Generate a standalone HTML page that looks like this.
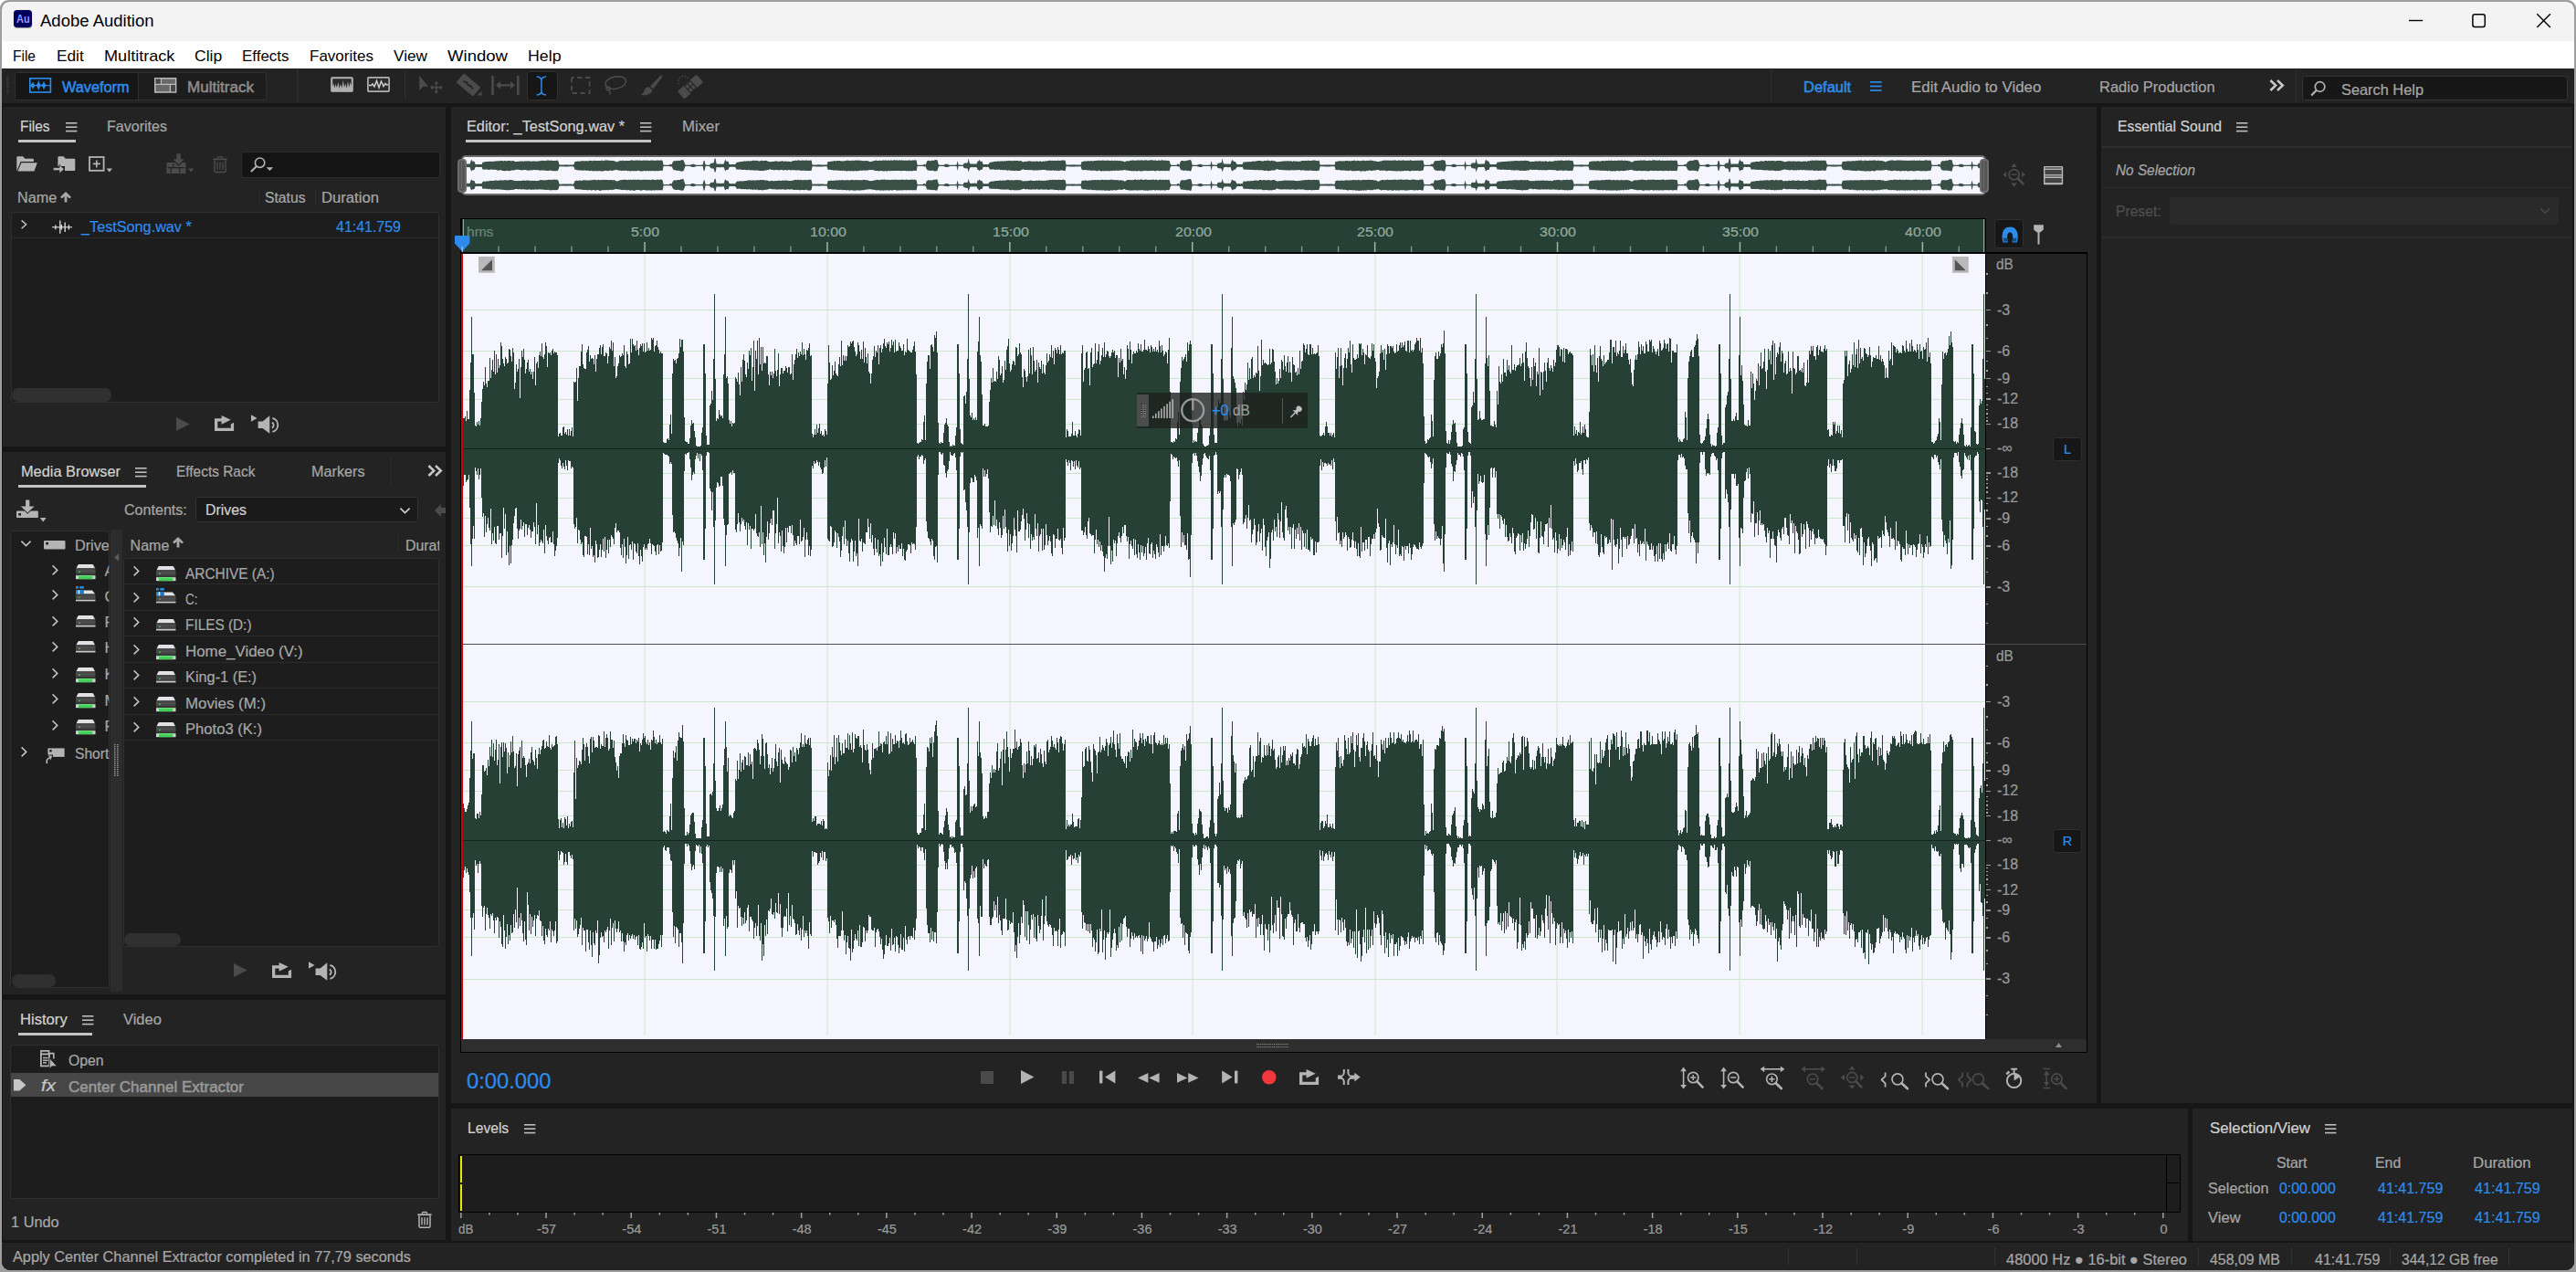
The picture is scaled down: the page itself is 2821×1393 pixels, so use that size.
<!DOCTYPE html>
<html lang="en"><head><meta charset="utf-8"><title>Adobe Audition</title>
<style>
html,body{margin:0;padding:0;background:#fff;}
body{width:2821px;height:1393px;position:relative;overflow:hidden;font-family:"Liberation Sans", sans-serif;}
.b{position:absolute;}
.t{position:absolute;white-space:pre;line-height:1;transform-origin:0 50%;}
svg{overflow:visible;}
</style></head>
<body>
<div class="b" style="left:0;top:0;width:2821px;height:1393px;background:#9e9e9e;border-radius:9px 9px 0 0;"></div>
<div class="b" style="left:2px;top:1.5px;width:2816.6px;height:1389.2px;background:#161616;border-radius:8px 8px 9px 9px;overflow:hidden;"></div>
<div class="b" style="left:2px;top:1.5px;width:2816.6px;height:43.5px;background:#f3f3f3;border-radius:8px 8px 0 0;"></div>
<div class="b" style="left:2px;top:45px;width:2816.6px;height:30px;background:#ffffff;"></div>
<div class="b" style="left:2px;top:75px;width:2816.6px;height:37.8px;background:#232323;"></div>
<div class="b" style="left:3.4px;top:117px;width:484.6px;height:372px;background:#232323;"></div>
<div class="b" style="left:3.4px;top:495px;width:484.6px;height:594px;background:#232323;"></div>
<div class="b" style="left:3.4px;top:1095px;width:484.6px;height:263px;background:#232323;"></div>
<div class="b" style="left:494px;top:117px;width:1801.6px;height:1091px;background:#232323;"></div>
<div class="b" style="left:2301.2px;top:117px;width:515.8px;height:1091px;background:#232323;"></div>
<div class="b" style="left:494px;top:1214px;width:1902px;height:145px;background:#232323;"></div>
<div class="b" style="left:2401px;top:1214px;width:416px;height:145px;background:#232323;"></div>
<div class="b" style="left:2px;top:1361px;width:2816.6px;height:29.7px;background:#232323;border-radius:0 0 9px 9px;"></div>
<div class="b" style="left:15px;top:11px;width:20px;height:19px;background:#00005b;border-radius:4px;box-shadow:0 0.5px 1px rgba(0,0,0,.4);"></div>
<svg class="b" style="left:2630px;top:8px;" width="170" height="30" viewBox="0 0 170 30"><path d="M8 14.5H23.2" stroke="#000" stroke-width="1.4" fill="none"/><rect x="77.9" y="7.8" width="13.4" height="13.6" rx="2.2" stroke="#000" stroke-width="1.5" fill="none"/><path d="M148.3 7.3L162.9 21.9M162.9 7.3L148.3 21.9" stroke="#000" stroke-width="1.4" fill="none"/></svg>
<svg class="b" style="left:7px;top:83px;" width="4" height="22" viewBox="0 0 4 22"><rect x="0" y="0" width="3" height="1" fill="#3a3a3a"/><rect x="0" y="2" width="3" height="1" fill="#3a3a3a"/><rect x="0" y="4" width="3" height="1" fill="#3a3a3a"/><rect x="0" y="6" width="3" height="1" fill="#3a3a3a"/><rect x="0" y="8" width="3" height="1" fill="#3a3a3a"/><rect x="0" y="10" width="3" height="1" fill="#3a3a3a"/><rect x="0" y="12" width="3" height="1" fill="#3a3a3a"/><rect x="0" y="14" width="3" height="1" fill="#3a3a3a"/><rect x="0" y="16" width="3" height="1" fill="#3a3a3a"/><rect x="0" y="18" width="3" height="1" fill="#3a3a3a"/></svg>
<div class="b" style="left:15.5px;top:79px;width:276px;height:31px;background:#1d1d1d;border:1px solid #303030;box-sizing:border-box;border-radius:3px;"></div>
<div class="b" style="left:16.5px;top:80px;width:134.5px;height:29px;background:#161616;border-radius:2px;"></div>
<div class="b" style="left:151px;top:80px;width:1px;height:29px;background:#303030;"></div>
<svg class="b" style="left:31.7px;top:85.3px;" width="24.4" height="16.8" viewBox="0 0 24.4 16.8"><rect x="0.8" y="0.8" width="22.6" height="15.2" fill="none" stroke="#2d8ceb" stroke-width="1.6"/><path d="M1 8.6H23.4" stroke="#2d8ceb" stroke-width="1.1"/><path d="M0.6000000000000001 8.6Q3.0 7.3 3.9 4.3999999999999995Q4.8 7.3 7.199999999999999 8.6Q4.8 9.9 3.9 12.8Q3.0 9.9 0.6000000000000001 8.6Z M7.000000000000001 8.6Q9.4 7.3 10.3 2.5999999999999996Q11.200000000000001 7.3 13.600000000000001 8.6Q11.200000000000001 9.9 10.3 14.6Q9.4 9.9 7.000000000000001 8.6Z M12.7 8.6Q15.1 7.3 16.0 4.0Q16.9 7.3 19.3 8.6Q16.9 9.9 16.0 13.2Q15.1 9.9 12.7 8.6Z" fill="#2d8ceb"/></svg>
<svg class="b" style="left:169.2px;top:85.2px;" width="24.4" height="17" viewBox="0 0 24.4 17"><rect x="0.8" y="0.8" width="22.8" height="15.2" fill="#686868" stroke="#bcbcbc" stroke-width="1.5"/><path d="M1 7.3H23.6 M7.4 1V7.3 M17.4 7.3V16" stroke="#bcbcbc" stroke-width="1.3" fill="none"/><rect x="1.6" y="1.6" width="5.1" height="5" fill="#484848"/><rect x="18.1" y="8" width="4.8" height="7.2" fill="#484848"/></svg>
<div class="b" style="left:325px;top:76px;width:1.5px;height:36px;background:#2d2d2d;"></div>
<svg class="b" style="left:362px;top:84px;" width="25" height="17" viewBox="0 0 25 17"><rect x="0.8" y="0.8" width="23.4" height="15.4" fill="#b0b0b0" stroke="#b0b0b0" stroke-width="1.2" rx="1"/><path d="M2.2 2.2H22.8V10L21.5 6L20.2 12L19 5L17.6 13L16.4 7.5L15 12L13.8 4L12.4 12.5L11 8L9.6 13L8.4 6L7 12L5.6 8L4.4 12.5L3.2 7L2.2 11Z" fill="#2a2a2a"/></svg>
<svg class="b" style="left:401.5px;top:84px;" width="25" height="17" viewBox="0 0 25 17"><rect x="0.9" y="0.9" width="23.2" height="15.2" fill="#2a2a2a" stroke="#b0b0b0" stroke-width="1.7" rx="1"/><path d="M2 9.5L4.5 9.5L6 8L8 11L10.5 4.5L13 12L15.5 5L18 10.5L20 7.5L21.5 9L23 8.5" fill="none" stroke="#cfcfcf" stroke-width="1.5"/></svg>
<div class="b" style="left:443px;top:78px;width:1.2px;height:31px;background:#303030;"></div>
<svg class="b" style="left:458px;top:82px;" width="28" height="22" viewBox="0 0 28 22"><path d="M1.2 0.8V17L5.5 12.8H11.2Z" fill="#4b4b4b"/><path d="M19.8 6.8L22.3 9.8H20.5V13H23.6V11.2L26.8 13.8L23.6 16.4V14.6H20.5V17.8H22.3L19.8 20.8L17.3 17.8H19.1V14.6H16V16.4L12.8 13.8L16 11.2V13H19.1V9.8H17.3Z" fill="#4b4b4b"/></svg>
<svg class="b" style="left:500px;top:81px;" width="30" height="26" viewBox="0 0 30 26"><g transform="rotate(40 13 12)"><rect x="1" y="5.5" width="24" height="13" rx="1.5" fill="#4b4b4b"/><path d="M6 12H9L10 10.8L11 12H15L16 10.8L17 12H20" stroke="#222" stroke-width="1.6" fill="none"/></g><path d="M27.5 18.5V23.5H22.5Z" fill="#4b4b4b"/></svg>
<svg class="b" style="left:538px;top:83px;" width="31" height="21" viewBox="0 0 31 21"><rect x="0.2" y="0" width="2.6" height="21" fill="#4b4b4b"/><rect x="28" y="0" width="2.6" height="21" fill="#4b4b4b"/><path d="M4.8 10.2L10 6V9.2H21V6L26 10.2L21 14.4V11.4H10V14.4Z" fill="#4b4b4b"/></svg>
<div class="b" style="left:576.5px;top:77.5px;width:34px;height:32px;background:#161616;border:1px solid #303030;box-sizing:border-box;border-radius:3px;"></div>
<svg class="b" style="left:586px;top:82.5px;" width="14" height="22" viewBox="0 0 14 22"><path d="M2.2 1C5.2 1.2 6.6 2.4 6.9 4.8V17.2C6.6 19.6 5.2 20.8 2.2 21 M11.6 1C8.6 1.2 7.2 2.4 6.9 4.8 M11.6 21C8.6 20.8 7.2 19.6 6.9 17.2" stroke="#2d8ceb" stroke-width="1.5" fill="none" stroke-linecap="round"/></svg>
<svg class="b" style="left:624.5px;top:83.5px;" width="22" height="19" viewBox="0 0 22 19"><rect x="1" y="1" width="19.6" height="17" fill="none" stroke="#4b4b4b" stroke-width="1.8" stroke-dasharray="5.4 3.4" stroke-dashoffset="2.7"/></svg>
<svg class="b" style="left:661px;top:82px;" width="26" height="22" viewBox="0 0 26 22"><ellipse cx="13.2" cy="8.6" rx="11.4" ry="6.6" fill="none" stroke="#4b4b4b" stroke-width="1.6" transform="rotate(-12 13.2 8.6)"/><circle cx="5" cy="15" r="2" fill="none" stroke="#4b4b4b" stroke-width="1.3"/><path d="M5.5 17C7.5 18 8 19.5 6.4 21.5" fill="none" stroke="#4b4b4b" stroke-width="1.3"/></svg>
<svg class="b" style="left:701px;top:82px;" width="26" height="24" viewBox="0 0 26 24"><path d="M22.6 0.6C24.4 0.2 25 1.4 24 2.8L14.4 15.2L11 12.4Z" fill="#4b4b4b"/><path d="M10 13.6L13.4 16.4C12.8 20.8 7 23 0.6 22.2C3.6 20.6 4.2 18.6 4.8 16.6C5.6 14 8 12.8 10 13.6Z" fill="#4b4b4b"/></svg>
<svg class="b" style="left:741px;top:81px;" width="28" height="26" viewBox="0 0 28 26"><g transform="rotate(-42 15 14)"><rect x="1" y="8.4" width="28" height="11.4" rx="2" fill="#4b4b4b"/><rect x="10.2" y="8.4" width="9.6" height="11.4" fill="#222"/><rect x="11.2" y="9.6" width="3.3" height="4" fill="#4b4b4b"/><rect x="15.5" y="9.6" width="3.3" height="4" fill="#4b4b4b"/><rect x="11.2" y="14.6" width="3.3" height="4" fill="#4b4b4b"/><rect x="15.5" y="14.6" width="3.3" height="4" fill="#4b4b4b"/></g><path d="M2.2 11A6 6 0 0 1 13 5.6" fill="none" stroke="#4b4b4b" stroke-width="1.3" stroke-dasharray="1.6 1.6"/></svg>
<div class="b" style="left:1939px;top:76px;width:1.2px;height:36px;background:#2d2d2d;"></div>
<svg class="b" style="left:2047.7px;top:89.2px;" width="12.6" height="10.899999999999999" viewBox="0 0 12.6 10.899999999999999"><rect x="0" y="0.00" width="12.6" height="1.7" fill="#2d8ceb"/><rect x="0" y="4.60" width="12.6" height="1.7" fill="#2d8ceb"/><rect x="0" y="9.20" width="12.6" height="1.7" fill="#2d8ceb"/></svg>
<svg class="b" style="left:2485px;top:86.6px;" width="17" height="13" viewBox="0 0 17 13"><path d="M1.4 1L7.2 6.5L1.4 12 M9 1L14.8 6.5L9 12" fill="none" stroke="#c8c8c8" stroke-width="2.5"/></svg>
<div class="b" style="left:2514px;top:76px;width:1.2px;height:36px;background:#2d2d2d;"></div>
<div class="b" style="left:2520.8px;top:83.3px;width:290.8px;height:26.9px;background:#171717;border:1px solid #353535;box-sizing:border-box;border-radius:3.5px;"></div>
<svg class="b" style="left:2530px;top:88px;" width="18" height="18" viewBox="0 0 18 18"><circle cx="10.6" cy="7" r="5.3" fill="none" stroke="#b4b4b4" stroke-width="1.7"/><path d="M6.8 10.8L1.2 16.6" stroke="#b4b4b4" stroke-width="2.2"/></svg>
<svg class="b" style="left:71.8px;top:134px;" width="12.4" height="10.4" viewBox="0 0 12.4 10.4"><rect x="0" y="0.00" width="12.4" height="1.6" fill="#bdbdbd"/><rect x="0" y="4.40" width="12.4" height="1.6" fill="#bdbdbd"/><rect x="0" y="8.80" width="12.4" height="1.6" fill="#bdbdbd"/></svg>
<div class="b" style="left:20px;top:153px;width:63px;height:3px;background:#c4c4c4;"></div>
<svg class="b" style="left:18px;top:171px;" width="23" height="17" viewBox="0 0 23 17"><path d="M0.3 16.4V1.6C0.3 0.8 0.8 0.3 1.6 0.3H7L9.4 2.8H17.6C18.4 2.8 18.9 3.3 18.9 4.1V6H4.6L0.3 16.4Z" fill="#b4b4b4"/><path d="M5.4 7.2H22.8L19.4 16.6H1.4Z" fill="#b4b4b4"/></svg>
<svg class="b" style="left:58px;top:171px;" width="25" height="20" viewBox="0 0 25 20"><path d="M5.4 11V1.5C5.4 0.7 5.9 0.3 6.6 0.3H11.6L13.8 2.8H23C23.8 2.8 24.3 3.3 24.3 4.1V14.8C24.3 15.6 23.8 16.1 23 16.1H13V11Z" fill="#b4b4b4"/><path d="M0.2 12.6H7V9.4L12.4 14.2L7 19V15.8H0.2Z" fill="#b4b4b4" stroke="#232323" stroke-width="0.8"/></svg>
<svg class="b" style="left:96.5px;top:171px;" width="27" height="19" viewBox="0 0 27 19"><rect x="1" y="1" width="15.6" height="14.8" fill="none" stroke="#b4b4b4" stroke-width="1.8"/><path d="M8.8 4.4V12.4 M4.8 8.4H12.8" stroke="#b4b4b4" stroke-width="1.6"/><path d="M19.6 13.6H26L22.8 17.6Z" fill="#b4b4b4"/></svg>
<svg class="b" style="left:182px;top:168px;" width="31" height="23" viewBox="0 0 31 23"><path d="M11.6 0.4H15.6V6.6H19.6L13.6 12.2L7.6 6.6H11.6Z" fill="#4b4b4b"/><path d="M0.8 10.6H6.6V9.2H4.6 M0.8 10.4V21.6H21V10.4H19 " fill="none" stroke="#4b4b4b" stroke-width="0"/><rect x="0.4" y="10" width="21" height="12" fill="#4b4b4b"/><path d="M1.6 15.6H20.4 M8 11V15.6 M14.8 15.6V21 M5.2 15.6V21" stroke="#232323" stroke-width="1.2"/><path d="M7.2 6.4L13.6 12.6L20 6.4" fill="none" stroke="#232323" stroke-width="1.6"/><path d="M11.6 0.4H15.6V6.6H19.6L13.6 12.2L7.6 6.6H11.6Z" fill="#4b4b4b"/><path d="M24 16.4H30.4L27.2 20.6Z" fill="#4b4b4b"/></svg>
<svg class="b" style="left:232.5px;top:171px;" width="16" height="18.4" viewBox="0 0 16 18"><path d="M5.4 2.4V1.4C5.4 0.8 5.8 0.5 6.4 0.5H9.6C10.2 0.5 10.6 0.8 10.6 1.4V2.4" fill="none" stroke="#4b4b4b" stroke-width="1.3"/><path d="M0.4 3.2H15.6" stroke="#4b4b4b" stroke-width="1.8"/><path d="M2 4.2V16C2 16.8 2.5 17.3 3.3 17.3H12.7C13.5 17.3 14 16.8 14 16V4.2" fill="none" stroke="#4b4b4b" stroke-width="1.5"/><path d="M5 6.2V14.6 M8 6.2V14.6 M11 6.2V14.6" stroke="#4b4b4b" stroke-width="1.4"/></svg>
<div class="b" style="left:263.5px;top:166px;width:218.5px;height:28.5px;background:#141414;border:1px solid #2c2c2c;box-sizing:border-box;border-radius:3px;"></div>
<svg class="b" style="left:273.5px;top:171.5px;" width="27" height="17" viewBox="0 0 27 17"><circle cx="10.6" cy="6.2" r="5.2" fill="none" stroke="#b4b4b4" stroke-width="1.6"/><path d="M7 10L0.8 16" stroke="#b4b4b4" stroke-width="2"/><path d="M17.6 11.2H25.2L21.4 15Z" fill="#b4b4b4"/></svg>
<svg class="b" style="left:66.2px;top:209.6px;" width="12" height="12" viewBox="0 0 12 12"><path d="M6 0L0 5.7L1.9 7.6L4.6 5V11.6H7.4V5L10.1 7.6L12 5.7Z" fill="#a7a7a7"/></svg>
<div class="b" style="left:283.3px;top:206px;width:1px;height:20px;background:#2c2c2c;"></div>
<div class="b" style="left:344.6px;top:206px;width:1px;height:20px;background:#2c2c2c;"></div>
<div class="b" style="left:11.5px;top:231.5px;width:469.5px;height:209.5px;background:#1d1d1d;border:1px solid #2f2f2f;box-sizing:border-box;border-radius:3px;"></div>
<div class="b" style="left:12.5px;top:260px;width:467.5px;height:1px;background:#2b2b2b;"></div>
<svg class="b" style="left:22.6px;top:240.6px;" width="6.6" height="9.6" viewBox="0 0 6.6 9.6"><path d="M0.6 0.4L5.6 4.8L0.6 9.2" fill="none" stroke="#c4c4c4" stroke-width="1.5"/></svg>
<svg class="b" style="left:57px;top:241px;" width="22" height="15" viewBox="0 0 22 15"><path d="M0 7.8H22" stroke="#e0e0e0" stroke-width="1.1"/><path d="M3.8 5.4V10.2 M8.8 0.4V14.8 M10.4 5V10.4 M14.2 2.6V13 M18.4 5.2V10.4" stroke="#e0e0e0" stroke-width="1.3"/></svg>
<div class="b" style="left:12.6px;top:425px;width:109.5px;height:14.5px;background:#303030;border-radius:7px;"></div>
<svg class="b" style="left:192.5px;top:456.5px;" width="14.5" height="15" viewBox="0 0 14.5 15"><path d="M0 0L14.5 7.5L0 15Z" fill="#4b4b4b"/></svg>
<svg class="b" style="left:234.8px;top:455.3px;" width="21.1" height="17.0" viewBox="0 0 21.1 17"><path d="M0 3.3H7.6V0L17.7 4.8L7.6 9.7V6.6H3.3V13.7H17.8V9.4L21.1 7.8V17H0Z" fill="#b4b4b4"/></svg>
<svg class="b" style="left:275px;top:454.4px;" width="32" height="23" viewBox="0 0 32 23"><path d="M0 0.3L6.6 4L0 7.7Z" fill="#b4b4b4"/><path d="M7.6 7.6H12.6L20.3 1.2V20.8L12.6 15H7.6Z" fill="#b4b4b4"/><path d="M22.8 8.6A3.3 3.3 0 0 1 22.8 14.6" fill="none" stroke="#b4b4b4" stroke-width="1.9"/><path d="M23.4 4A7.6 7.6 0 0 1 23.4 18.8" fill="none" stroke="#b4b4b4" stroke-width="1.9"/></svg>
<svg class="b" style="left:147.8px;top:512px;" width="12.6" height="10.4" viewBox="0 0 12.6 10.4"><rect x="0" y="0.00" width="12.6" height="1.6" fill="#bdbdbd"/><rect x="0" y="4.40" width="12.6" height="1.6" fill="#bdbdbd"/><rect x="0" y="8.80" width="12.6" height="1.6" fill="#bdbdbd"/></svg>
<div class="b" style="left:19.8px;top:531px;width:140.4px;height:3px;background:#c4c4c4;"></div>
<div class="b" style="left:428.3px;top:500px;width:1px;height:32px;background:#2c2c2c;"></div>
<svg class="b" style="left:467.6px;top:508.6px;" width="17" height="13" viewBox="0 0 17 13"><path d="M1.4 1L7.2 6.5L1.4 12 M9 1L14.8 6.5L9 12" fill="none" stroke="#c8c8c8" stroke-width="2.5"/></svg>
<svg class="b" style="left:18.4px;top:547px;" width="33" height="25" viewBox="0 0 33 25"><rect x="0" y="12.5" width="23.8" height="7.6" rx="0.8" fill="#b4b4b4"/><path d="M10.1 0.5H14.3V7.6H19.6L12.2 14.6L4.8 7.6H10.1Z" fill="#b4b4b4" stroke="#232323" stroke-width="1.6" paint-order="stroke"/><rect x="2.2" y="15" width="2.8" height="2.6" fill="#232323"/><path d="M25.7 20.1H32.7L29.2 24.4Z" fill="#b4b4b4"/></svg>
<div class="b" style="left:214.3px;top:543.7px;width:243.5px;height:28.5px;background:#1a1a1a;border:1px solid #333;box-sizing:border-box;border-radius:3px;"></div>
<svg class="b" style="left:438px;top:556px;" width="11" height="6.6" viewBox="0 0 11 6.6"><path d="M0.4 0.6L5.5 5.6L10.6 0.6" fill="none" stroke="#d0d0d0" stroke-width="1.6"/></svg>
<svg class="b" style="left:475.5px;top:552px;clip-path:inset(0 0.5px 0 0);" width="13" height="14" viewBox="0 0 13 14"><path d="M0 7L7 0V4H13V10H7V14Z" fill="#4b4b4b"/></svg>
<div class="b" style="left:11.3px;top:581.3px;width:108.5px;height:500.5px;background:#1d1d1d;border:1px solid #2f2f2f;box-sizing:border-box;border-radius:3px;"></div>
<div class="b" style="left:12px;top:582px;width:107px;height:499px;overflow:hidden;">
</div>
<svg class="b" style="left:22.8px;top:592.2px;" width="11" height="6.6" viewBox="0 0 11 6.6"><path d="M0.4 0.6L5.5 5.6L10.6 0.6" fill="none" stroke="#c4c4c4" stroke-width="1.5"/></svg>
<svg class="b" style="left:48.3px;top:591.5px;" width="23.5" height="9.6" viewBox="0 0 23.5 9.6"><rect x="0" y="0" width="23.5" height="9.6" rx="1" fill="#b4b4b4"/><rect x="2.2" y="1.8" width="2.8" height="2.8" rx="0.6" fill="#1d1d1d"/></svg>
<svg class="b" style="left:56.8px;top:618.8px;" width="6.8" height="10.8" viewBox="0 0 6.8 10.8"><path d="M0.6 0.4L5.8 5.4L0.6 10.4" fill="none" stroke="#c4c4c4" stroke-width="1.5"/></svg>
<svg class="b" style="left:82.8px;top:617.6999999999999px;" width="21.5" height="16.5" viewBox="0 0 21.5 16.5"><path d="M0.4 4.4L2.4 0.6Q2.7 0 3.4 0H18.1Q18.8 0 19.1 0.6L21.1 4.4Z" fill="#e2e2e6"/><rect x="0" y="4.2" width="21.5" height="6.6" fill="#454545"/><rect x="0" y="6.8" width="21.5" height="0.8" fill="#5c5c5c"/><rect x="3.2" y="7.6" width="1.6" height="1.3" fill="#3bdc4a"/><rect x="0" y="10.8" width="21.5" height="1.4" fill="#333"/><rect x="0" y="12.2" width="21.5" height="4" fill="#d0d0d0"/><rect x="3" y="12" width="15.4" height="4.2" fill="#43cf55"/><rect x="3" y="12" width="15.4" height="1.2" fill="#6be07a"/></svg>
<svg class="b" style="left:56.8px;top:646.4px;" width="6.8" height="10.8" viewBox="0 0 6.8 10.8"><path d="M0.6 0.4L5.8 5.4L0.6 10.4" fill="none" stroke="#c4c4c4" stroke-width="1.5"/></svg>
<svg class="b" style="left:82.8px;top:641.8px;" width="21.5" height="16.5" viewBox="0 0 21.5 16.5"><rect x="0" y="0" width="2.8" height="2.6" fill="#1e8fe6"/><rect x="4.2" y="0" width="4.6" height="2.6" fill="#1e8fe6"/><path d="M0.3 8.6L2 4.4H18L21.2 8.6Z" fill="#e2e2e6"/><rect x="0" y="4.2" width="2.8" height="4.4" fill="#1e8fe6"/><rect x="4.2" y="4.2" width="4.6" height="4.4" fill="#1479d0"/><rect x="2.8" y="4.2" width="1.4" height="4.4" fill="#dfe6ee"/><rect x="0" y="8.6" width="21.5" height="6.2" fill="#454545"/><rect x="0" y="11.4" width="21.5" height="0.8" fill="#595959"/><rect x="3.2" y="11.6" width="1.4" height="1.2" fill="#3bdc4a"/><rect x="0" y="14.8" width="21.5" height="1.6" fill="#c9c9c9"/></svg>
<svg class="b" style="left:56.8px;top:674.8px;" width="6.8" height="10.8" viewBox="0 0 6.8 10.8"><path d="M0.6 0.4L5.8 5.4L0.6 10.4" fill="none" stroke="#c4c4c4" stroke-width="1.5"/></svg>
<svg class="b" style="left:82.8px;top:674.0px;" width="21.5" height="12.5" viewBox="0 0 21.5 12.5"><path d="M0.4 4.4L2.4 0.6Q2.7 0 3.4 0H18.1Q18.8 0 19.1 0.6L21.1 4.4Z" fill="#e2e2e6"/><rect x="0" y="4.2" width="21.5" height="6.6" fill="#454545"/><rect x="0" y="6.8" width="21.5" height="0.8" fill="#5c5c5c"/><rect x="3.2" y="7.6" width="1.6" height="1.3" fill="#3bdc4a"/><rect x="0" y="10.8" width="21.5" height="1.7" fill="#c9c9c9"/></svg>
<svg class="b" style="left:56.8px;top:703.1px;" width="6.8" height="10.8" viewBox="0 0 6.8 10.8"><path d="M0.6 0.4L5.8 5.4L0.6 10.4" fill="none" stroke="#c4c4c4" stroke-width="1.5"/></svg>
<svg class="b" style="left:82.8px;top:702.3000000000001px;" width="21.5" height="12.5" viewBox="0 0 21.5 12.5"><path d="M0.4 4.4L2.4 0.6Q2.7 0 3.4 0H18.1Q18.8 0 19.1 0.6L21.1 4.4Z" fill="#e2e2e6"/><rect x="0" y="4.2" width="21.5" height="6.6" fill="#454545"/><rect x="0" y="6.8" width="21.5" height="0.8" fill="#5c5c5c"/><rect x="3.2" y="7.6" width="1.6" height="1.3" fill="#3bdc4a"/><rect x="0" y="10.8" width="21.5" height="1.7" fill="#c9c9c9"/></svg>
<svg class="b" style="left:56.8px;top:732.0px;" width="6.8" height="10.8" viewBox="0 0 6.8 10.8"><path d="M0.6 0.4L5.8 5.4L0.6 10.4" fill="none" stroke="#c4c4c4" stroke-width="1.5"/></svg>
<svg class="b" style="left:82.8px;top:730.9px;" width="21.5" height="16.5" viewBox="0 0 21.5 16.5"><path d="M0.4 4.4L2.4 0.6Q2.7 0 3.4 0H18.1Q18.8 0 19.1 0.6L21.1 4.4Z" fill="#e2e2e6"/><rect x="0" y="4.2" width="21.5" height="6.6" fill="#454545"/><rect x="0" y="6.8" width="21.5" height="0.8" fill="#5c5c5c"/><rect x="3.2" y="7.6" width="1.6" height="1.3" fill="#3bdc4a"/><rect x="0" y="10.8" width="21.5" height="1.4" fill="#333"/><rect x="0" y="12.2" width="21.5" height="4" fill="#d0d0d0"/><rect x="3" y="12" width="15.4" height="4.2" fill="#43cf55"/><rect x="3" y="12" width="15.4" height="1.2" fill="#6be07a"/></svg>
<svg class="b" style="left:56.8px;top:760.4px;" width="6.8" height="10.8" viewBox="0 0 6.8 10.8"><path d="M0.6 0.4L5.8 5.4L0.6 10.4" fill="none" stroke="#c4c4c4" stroke-width="1.5"/></svg>
<svg class="b" style="left:82.8px;top:759.3px;" width="21.5" height="16.5" viewBox="0 0 21.5 16.5"><path d="M0.4 4.4L2.4 0.6Q2.7 0 3.4 0H18.1Q18.8 0 19.1 0.6L21.1 4.4Z" fill="#e2e2e6"/><rect x="0" y="4.2" width="21.5" height="6.6" fill="#454545"/><rect x="0" y="6.8" width="21.5" height="0.8" fill="#5c5c5c"/><rect x="3.2" y="7.6" width="1.6" height="1.3" fill="#3bdc4a"/><rect x="0" y="10.8" width="21.5" height="1.4" fill="#333"/><rect x="0" y="12.2" width="21.5" height="4" fill="#d0d0d0"/><rect x="3" y="12" width="15.4" height="4.2" fill="#43cf55"/><rect x="3" y="12" width="15.4" height="1.2" fill="#6be07a"/></svg>
<svg class="b" style="left:56.8px;top:789.1999999999999px;" width="6.8" height="10.8" viewBox="0 0 6.8 10.8"><path d="M0.6 0.4L5.8 5.4L0.6 10.4" fill="none" stroke="#c4c4c4" stroke-width="1.5"/></svg>
<svg class="b" style="left:82.8px;top:788.0999999999999px;" width="21.5" height="16.5" viewBox="0 0 21.5 16.5"><path d="M0.4 4.4L2.4 0.6Q2.7 0 3.4 0H18.1Q18.8 0 19.1 0.6L21.1 4.4Z" fill="#e2e2e6"/><rect x="0" y="4.2" width="21.5" height="6.6" fill="#454545"/><rect x="0" y="6.8" width="21.5" height="0.8" fill="#5c5c5c"/><rect x="3.2" y="7.6" width="1.6" height="1.3" fill="#3bdc4a"/><rect x="0" y="10.8" width="21.5" height="1.4" fill="#333"/><rect x="0" y="12.2" width="21.5" height="4" fill="#d0d0d0"/><rect x="3" y="12" width="15.4" height="4.2" fill="#43cf55"/><rect x="3" y="12" width="15.4" height="1.2" fill="#6be07a"/></svg>
<svg class="b" style="left:22.6px;top:818.4px;" width="6.8" height="10.8" viewBox="0 0 6.8 10.8"><path d="M0.6 0.4L5.8 5.4L0.6 10.4" fill="none" stroke="#c4c4c4" stroke-width="1.5"/></svg>
<svg class="b" style="left:49.5px;top:818.6px;" width="21" height="18" viewBox="0 0 21 18"><rect x="2.4" y="0.4" width="18.2" height="9.5" fill="#b4b4b4"/><rect x="4.3" y="2" width="2.3" height="2.5" fill="#1d1d1d"/><rect x="1.6" y="7.6" width="6.4" height="6" fill="#1d1d1d"/><path d="M1.6 17.2C0.4 14.4 1.4 11.6 4.6 11" fill="none" stroke="#b4b4b4" stroke-width="1.7"/><path d="M2.8 8.2L7.2 8.8L5.4 13.6Z" fill="#b4b4b4"/></svg>
<div class="b" style="left:12.6px;top:1066.7px;width:48px;height:14px;background:#303030;border-radius:7px;"></div>
<div class="b" style="left:120.6px;top:580px;width:13.2px;height:505.5px;background:#2c2c2c;"></div>
<svg class="b" style="left:125px;top:606.2px;" width="5.2" height="8.8" viewBox="0 0 5.2 8.8"><path d="M5.2 0L0 4.4L5.2 8.8Z" fill="#5a5a5a"/></svg>
<svg class="b" style="left:125px;top:814.7px;" width="5" height="37" viewBox="0 0 5 37"><rect x="0" y="0.00" width="1.5" height="1.3" fill="#9a9a9a"/><rect x="3.1" y="0.00" width="1.5" height="1.3" fill="#9a9a9a"/><rect x="0" y="2.24" width="1.5" height="1.3" fill="#9a9a9a"/><rect x="3.1" y="2.24" width="1.5" height="1.3" fill="#9a9a9a"/><rect x="0" y="4.48" width="1.5" height="1.3" fill="#9a9a9a"/><rect x="3.1" y="4.48" width="1.5" height="1.3" fill="#9a9a9a"/><rect x="0" y="6.72" width="1.5" height="1.3" fill="#9a9a9a"/><rect x="3.1" y="6.72" width="1.5" height="1.3" fill="#9a9a9a"/><rect x="0" y="8.96" width="1.5" height="1.3" fill="#9a9a9a"/><rect x="3.1" y="8.96" width="1.5" height="1.3" fill="#9a9a9a"/><rect x="0" y="11.20" width="1.5" height="1.3" fill="#9a9a9a"/><rect x="3.1" y="11.20" width="1.5" height="1.3" fill="#9a9a9a"/><rect x="0" y="13.44" width="1.5" height="1.3" fill="#9a9a9a"/><rect x="3.1" y="13.44" width="1.5" height="1.3" fill="#9a9a9a"/><rect x="0" y="15.68" width="1.5" height="1.3" fill="#9a9a9a"/><rect x="3.1" y="15.68" width="1.5" height="1.3" fill="#9a9a9a"/><rect x="0" y="17.92" width="1.5" height="1.3" fill="#9a9a9a"/><rect x="3.1" y="17.92" width="1.5" height="1.3" fill="#9a9a9a"/><rect x="0" y="20.16" width="1.5" height="1.3" fill="#9a9a9a"/><rect x="3.1" y="20.16" width="1.5" height="1.3" fill="#9a9a9a"/><rect x="0" y="22.40" width="1.5" height="1.3" fill="#9a9a9a"/><rect x="3.1" y="22.40" width="1.5" height="1.3" fill="#9a9a9a"/><rect x="0" y="24.64" width="1.5" height="1.3" fill="#9a9a9a"/><rect x="3.1" y="24.64" width="1.5" height="1.3" fill="#9a9a9a"/><rect x="0" y="26.88" width="1.5" height="1.3" fill="#9a9a9a"/><rect x="3.1" y="26.88" width="1.5" height="1.3" fill="#9a9a9a"/><rect x="0" y="29.12" width="1.5" height="1.3" fill="#9a9a9a"/><rect x="3.1" y="29.12" width="1.5" height="1.3" fill="#9a9a9a"/><rect x="0" y="31.36" width="1.5" height="1.3" fill="#9a9a9a"/><rect x="3.1" y="31.36" width="1.5" height="1.3" fill="#9a9a9a"/><rect x="0" y="33.60" width="1.5" height="1.3" fill="#9a9a9a"/><rect x="3.1" y="33.60" width="1.5" height="1.3" fill="#9a9a9a"/></svg>
<svg class="b" style="left:189.2px;top:588.2px;" width="12" height="12" viewBox="0 0 12 12"><path d="M6 0L0 5.7L1.9 7.6L4.6 5V11.6H7.4V5L10.1 7.6L12 5.7Z" fill="#a7a7a7"/></svg>
<div class="b" style="left:436px;top:585px;width:1px;height:20px;background:#2c2c2c;"></div>
<div class="b" style="left:135px;top:611px;width:346.2px;height:426px;background:#1d1d1d;border:1px solid #2f2f2f;box-sizing:border-box;border-radius:3px;"></div>
<svg class="b" style="left:145.7px;top:619.8000000000001px;" width="6.8" height="10.8" viewBox="0 0 6.8 10.8"><path d="M0.6 0.4L5.8 5.4L0.6 10.4" fill="none" stroke="#c4c4c4" stroke-width="1.5"/></svg>
<svg class="b" style="left:170.8px;top:619.8000000000001px;" width="21.5" height="16.5" viewBox="0 0 21.5 16.5"><path d="M0.4 4.4L2.4 0.6Q2.7 0 3.4 0H18.1Q18.8 0 19.1 0.6L21.1 4.4Z" fill="#e2e2e6"/><rect x="0" y="4.2" width="21.5" height="6.6" fill="#454545"/><rect x="0" y="6.8" width="21.5" height="0.8" fill="#5c5c5c"/><rect x="3.2" y="7.6" width="1.6" height="1.3" fill="#3bdc4a"/><rect x="0" y="10.8" width="21.5" height="1.4" fill="#333"/><rect x="0" y="12.2" width="21.5" height="4" fill="#d0d0d0"/><rect x="3" y="12" width="15.4" height="4.2" fill="#43cf55"/><rect x="3" y="12" width="15.4" height="1.2" fill="#6be07a"/></svg>
<div class="b" style="left:136px;top:639.3px;width:344.2px;height:1px;background:#2b2b2b;"></div>
<svg class="b" style="left:145.7px;top:648.6px;" width="6.8" height="10.8" viewBox="0 0 6.8 10.8"><path d="M0.6 0.4L5.8 5.4L0.6 10.4" fill="none" stroke="#c4c4c4" stroke-width="1.5"/></svg>
<svg class="b" style="left:170.8px;top:644px;" width="21.5" height="16.5" viewBox="0 0 21.5 16.5"><rect x="0" y="0" width="2.8" height="2.6" fill="#1e8fe6"/><rect x="4.2" y="0" width="4.6" height="2.6" fill="#1e8fe6"/><path d="M0.3 8.6L2 4.4H18L21.2 8.6Z" fill="#e2e2e6"/><rect x="0" y="4.2" width="2.8" height="4.4" fill="#1e8fe6"/><rect x="4.2" y="4.2" width="4.6" height="4.4" fill="#1479d0"/><rect x="2.8" y="4.2" width="1.4" height="4.4" fill="#dfe6ee"/><rect x="0" y="8.6" width="21.5" height="6.2" fill="#454545"/><rect x="0" y="11.4" width="21.5" height="0.8" fill="#595959"/><rect x="3.2" y="11.6" width="1.4" height="1.2" fill="#3bdc4a"/><rect x="0" y="14.8" width="21.5" height="1.6" fill="#c9c9c9"/></svg>
<div class="b" style="left:136px;top:667.8299999999999px;width:344.2px;height:1px;background:#2b2b2b;"></div>
<svg class="b" style="left:145.7px;top:676.4px;" width="6.8" height="10.8" viewBox="0 0 6.8 10.8"><path d="M0.6 0.4L5.8 5.4L0.6 10.4" fill="none" stroke="#c4c4c4" stroke-width="1.5"/></svg>
<svg class="b" style="left:170.8px;top:677.8px;" width="21.5" height="12.5" viewBox="0 0 21.5 12.5"><path d="M0.4 4.4L2.4 0.6Q2.7 0 3.4 0H18.1Q18.8 0 19.1 0.6L21.1 4.4Z" fill="#e2e2e6"/><rect x="0" y="4.2" width="21.5" height="6.6" fill="#454545"/><rect x="0" y="6.8" width="21.5" height="0.8" fill="#5c5c5c"/><rect x="3.2" y="7.6" width="1.6" height="1.3" fill="#3bdc4a"/><rect x="0" y="10.8" width="21.5" height="1.7" fill="#c9c9c9"/></svg>
<div class="b" style="left:136px;top:696.3599999999999px;width:344.2px;height:1px;background:#2b2b2b;"></div>
<svg class="b" style="left:145.7px;top:705.6px;" width="6.8" height="10.8" viewBox="0 0 6.8 10.8"><path d="M0.6 0.4L5.8 5.4L0.6 10.4" fill="none" stroke="#c4c4c4" stroke-width="1.5"/></svg>
<svg class="b" style="left:170.8px;top:705.6px;" width="21.5" height="16.5" viewBox="0 0 21.5 16.5"><path d="M0.4 4.4L2.4 0.6Q2.7 0 3.4 0H18.1Q18.8 0 19.1 0.6L21.1 4.4Z" fill="#e2e2e6"/><rect x="0" y="4.2" width="21.5" height="6.6" fill="#454545"/><rect x="0" y="6.8" width="21.5" height="0.8" fill="#5c5c5c"/><rect x="3.2" y="7.6" width="1.6" height="1.3" fill="#3bdc4a"/><rect x="0" y="10.8" width="21.5" height="1.4" fill="#333"/><rect x="0" y="12.2" width="21.5" height="4" fill="#d0d0d0"/><rect x="3" y="12" width="15.4" height="4.2" fill="#43cf55"/><rect x="3" y="12" width="15.4" height="1.2" fill="#6be07a"/></svg>
<div class="b" style="left:136px;top:724.89px;width:344.2px;height:1px;background:#2b2b2b;"></div>
<svg class="b" style="left:145.7px;top:733.6px;" width="6.8" height="10.8" viewBox="0 0 6.8 10.8"><path d="M0.6 0.4L5.8 5.4L0.6 10.4" fill="none" stroke="#c4c4c4" stroke-width="1.5"/></svg>
<svg class="b" style="left:170.8px;top:735px;" width="21.5" height="12.5" viewBox="0 0 21.5 12.5"><path d="M0.4 4.4L2.4 0.6Q2.7 0 3.4 0H18.1Q18.8 0 19.1 0.6L21.1 4.4Z" fill="#e2e2e6"/><rect x="0" y="4.2" width="21.5" height="6.6" fill="#454545"/><rect x="0" y="6.8" width="21.5" height="0.8" fill="#5c5c5c"/><rect x="3.2" y="7.6" width="1.6" height="1.3" fill="#3bdc4a"/><rect x="0" y="10.8" width="21.5" height="1.7" fill="#c9c9c9"/></svg>
<div class="b" style="left:136px;top:753.42px;width:344.2px;height:1px;background:#2b2b2b;"></div>
<svg class="b" style="left:145.7px;top:762.6px;" width="6.8" height="10.8" viewBox="0 0 6.8 10.8"><path d="M0.6 0.4L5.8 5.4L0.6 10.4" fill="none" stroke="#c4c4c4" stroke-width="1.5"/></svg>
<svg class="b" style="left:170.8px;top:762.6px;" width="21.5" height="16.5" viewBox="0 0 21.5 16.5"><path d="M0.4 4.4L2.4 0.6Q2.7 0 3.4 0H18.1Q18.8 0 19.1 0.6L21.1 4.4Z" fill="#e2e2e6"/><rect x="0" y="4.2" width="21.5" height="6.6" fill="#454545"/><rect x="0" y="6.8" width="21.5" height="0.8" fill="#5c5c5c"/><rect x="3.2" y="7.6" width="1.6" height="1.3" fill="#3bdc4a"/><rect x="0" y="10.8" width="21.5" height="1.4" fill="#333"/><rect x="0" y="12.2" width="21.5" height="4" fill="#d0d0d0"/><rect x="3" y="12" width="15.4" height="4.2" fill="#43cf55"/><rect x="3" y="12" width="15.4" height="1.2" fill="#6be07a"/></svg>
<div class="b" style="left:136px;top:781.9499999999999px;width:344.2px;height:1px;background:#2b2b2b;"></div>
<svg class="b" style="left:145.7px;top:790.6px;" width="6.8" height="10.8" viewBox="0 0 6.8 10.8"><path d="M0.6 0.4L5.8 5.4L0.6 10.4" fill="none" stroke="#c4c4c4" stroke-width="1.5"/></svg>
<svg class="b" style="left:170.8px;top:790.6px;" width="21.5" height="16.5" viewBox="0 0 21.5 16.5"><path d="M0.4 4.4L2.4 0.6Q2.7 0 3.4 0H18.1Q18.8 0 19.1 0.6L21.1 4.4Z" fill="#e2e2e6"/><rect x="0" y="4.2" width="21.5" height="6.6" fill="#454545"/><rect x="0" y="6.8" width="21.5" height="0.8" fill="#5c5c5c"/><rect x="3.2" y="7.6" width="1.6" height="1.3" fill="#3bdc4a"/><rect x="0" y="10.8" width="21.5" height="1.4" fill="#333"/><rect x="0" y="12.2" width="21.5" height="4" fill="#d0d0d0"/><rect x="3" y="12" width="15.4" height="4.2" fill="#43cf55"/><rect x="3" y="12" width="15.4" height="1.2" fill="#6be07a"/></svg>
<div class="b" style="left:136px;top:810.48px;width:344.2px;height:1px;background:#2b2b2b;"></div>
<div class="b" style="left:135.8px;top:1022px;width:62.4px;height:14px;background:#303030;border-radius:7px;"></div>
<svg class="b" style="left:255.8px;top:1055.4px;" width="14.5" height="15" viewBox="0 0 14.5 15"><path d="M0 0L14.5 7.5L0 15Z" fill="#4b4b4b"/></svg>
<svg class="b" style="left:297.8px;top:1054.2px;" width="21.1" height="17.0" viewBox="0 0 21.1 17"><path d="M0 3.3H7.6V0L17.7 4.8L7.6 9.7V6.6H3.3V13.7H17.8V9.4L21.1 7.8V17H0Z" fill="#b4b4b4"/></svg>
<svg class="b" style="left:337.9px;top:1053.4px;" width="32" height="23" viewBox="0 0 32 23"><path d="M0 0.3L6.6 4L0 7.7Z" fill="#b4b4b4"/><path d="M7.6 7.6H12.6L20.3 1.2V20.8L12.6 15H7.6Z" fill="#b4b4b4"/><path d="M22.8 8.6A3.3 3.3 0 0 1 22.8 14.6" fill="none" stroke="#b4b4b4" stroke-width="1.9"/><path d="M23.4 4A7.6 7.6 0 0 1 23.4 18.8" fill="none" stroke="#b4b4b4" stroke-width="1.9"/></svg>
<svg class="b" style="left:89.8px;top:1112.4px;" width="12.4" height="10.4" viewBox="0 0 12.4 10.4"><rect x="0" y="0.00" width="12.4" height="1.6" fill="#bdbdbd"/><rect x="0" y="4.40" width="12.4" height="1.6" fill="#bdbdbd"/><rect x="0" y="8.80" width="12.4" height="1.6" fill="#bdbdbd"/></svg>
<div class="b" style="left:20.2px;top:1131.2px;width:80.8px;height:3px;background:#c4c4c4;"></div>
<div class="b" style="left:11px;top:1144px;width:469.5px;height:168.6px;background:#1d1d1d;border:1px solid #2f2f2f;box-sizing:border-box;border-radius:3px;"></div>
<svg class="b" style="left:43.8px;top:1149.6px;" width="19" height="22" viewBox="0 0 19 22"><path d="M0.9 4.6V0.9H9.6V3.6H14.8V9.4" fill="none" stroke="#b4b4b4" stroke-width="1.6"/><rect x="0.9" y="4.4" width="9" height="13" fill="none" stroke="#b4b4b4" stroke-width="1.8"/><path d="M3 8.4H8.6 M3 11.2H8.6 M3 13.8H7" stroke="#b4b4b4" stroke-width="1.5"/><path d="M10.2 8.6V20.6L13 17.8H18.6Z" fill="#b4b4b4" stroke="#1d1d1d" stroke-width="0.9"/></svg>
<div class="b" style="left:12px;top:1175px;width:467.5px;height:26px;background:#474747;"></div>
<svg class="b" style="left:15.3px;top:1182.2px;" width="13.4" height="12.6" viewBox="0 0 13.4 12.6"><path d="M0 0H6.4L13.4 6.3L6.4 12.6H0Z" fill="#c6c6c6"/></svg>
<svg class="b" style="left:456.5px;top:1327.3px;" width="16" height="18" viewBox="0 0 16 18"><path d="M5.4 2.4V1.4C5.4 0.8 5.8 0.5 6.4 0.5H9.6C10.2 0.5 10.6 0.8 10.6 1.4V2.4" fill="none" stroke="#b4b4b4" stroke-width="1.3"/><path d="M0.4 3.2H15.6" stroke="#b4b4b4" stroke-width="1.8"/><path d="M2 4.2V16C2 16.8 2.5 17.3 3.3 17.3H12.7C13.5 17.3 14 16.8 14 16V4.2" fill="none" stroke="#b4b4b4" stroke-width="1.5"/><path d="M5 6.2V14.6 M8 6.2V14.6 M11 6.2V14.6" stroke="#b4b4b4" stroke-width="1.4"/></svg>
<svg class="b" style="left:701px;top:134px;" width="12.4" height="10.4" viewBox="0 0 12.4 10.4"><rect x="0" y="0.00" width="12.4" height="1.6" fill="#bdbdbd"/><rect x="0" y="4.40" width="12.4" height="1.6" fill="#bdbdbd"/><rect x="0" y="8.80" width="12.4" height="1.6" fill="#bdbdbd"/></svg>
<div class="b" style="left:510px;top:153px;width:203px;height:3px;background:#c4c4c4;"></div>
<div class="b" style="left:504.5px;top:170.2px;width:1670.5px;height:43.6px;background:#f5f5ff;border:2.4px solid #6c6c6c;box-sizing:border-box;border-radius:5px;"></div>
<svg class="b" style="left:2192px;top:178px;" width="28" height="28" viewBox="0 0 28 28"><circle cx="13.6" cy="13.2" r="5.6" fill="none" stroke="#4b4b4b" stroke-width="1.7"/><path d="M17.9 17.5L23.6 23.4" stroke="#4b4b4b" stroke-width="2.6" stroke-linecap="round"/><path d="M10.5 13.2H16.7" stroke="#4b4b4b" stroke-width="1.5"/><path d="M13.6 1L17 5H10.2Z M13.6 26.6L17 22.6H10.2Z M1.4 13.2L5.2 9.8V16.6Z M26 13.2L22.2 9.8V16.6Z" fill="#4b4b4b"/></svg>
<svg class="b" style="left:2237.9px;top:181.7px;" width="21.2" height="20.2" viewBox="0 0 21.2 20.2"><rect x="0" y="0" width="21.2" height="20.2" rx="1" fill="#b9b9b9"/><rect x="1.4" y="1.3" width="18.4" height="1.3" fill="#444"/><rect x="1.4" y="3.9" width="18.4" height="5.2" fill="#444"/><rect x="1.4" y="10.4" width="18.4" height="1.1" fill="#444"/><rect x="1.4" y="13" width="18.4" height="5.2" fill="#444"/></svg>
<div class="b" style="left:504px;top:239px;width:1671.2px;height:39px;background:#000;"></div>
<div class="b" style="left:505.6px;top:240.4px;width:1668.6px;height:35.8px;background:#274036;"></div>
<div class="b" style="left:506.6px;top:240.4px;width:1.6px;height:22px;background:#93aaa0;"></div>
<div class="b" style="left:2171.6px;top:240.4px;width:1.8px;height:35.8px;background:#93aaa0;"></div>
<svg class="b" style="left:504px;top:239px;" width="1671" height="39" viewBox="0 0 1671 39"><rect x="41.4" y="30.6" width="1.4" height="6.6" fill="#7d998d"/><rect x="81.4" y="30.6" width="1.4" height="6.6" fill="#7d998d"/><rect x="121.3" y="30.6" width="1.4" height="6.6" fill="#7d998d"/><rect x="161.3" y="30.6" width="1.4" height="6.6" fill="#7d998d"/><rect x="201.3" y="26" width="1.5" height="11.2" fill="#9fb5ab"/><rect x="241.3" y="30.6" width="1.4" height="6.6" fill="#7d998d"/><rect x="281.3" y="30.6" width="1.4" height="6.6" fill="#7d998d"/><rect x="321.2" y="30.6" width="1.4" height="6.6" fill="#7d998d"/><rect x="361.2" y="30.6" width="1.4" height="6.6" fill="#7d998d"/><rect x="401.2" y="26" width="1.5" height="11.2" fill="#9fb5ab"/><rect x="441.2" y="30.6" width="1.4" height="6.6" fill="#7d998d"/><rect x="481.2" y="30.6" width="1.4" height="6.6" fill="#7d998d"/><rect x="521.1" y="30.6" width="1.4" height="6.6" fill="#7d998d"/><rect x="561.1" y="30.6" width="1.4" height="6.6" fill="#7d998d"/><rect x="601.1" y="26" width="1.5" height="11.2" fill="#9fb5ab"/><rect x="641.1" y="30.6" width="1.4" height="6.6" fill="#7d998d"/><rect x="681.1" y="30.6" width="1.4" height="6.6" fill="#7d998d"/><rect x="721.0" y="30.6" width="1.4" height="6.6" fill="#7d998d"/><rect x="761.0" y="30.6" width="1.4" height="6.6" fill="#7d998d"/><rect x="801.0" y="26" width="1.5" height="11.2" fill="#9fb5ab"/><rect x="841.0" y="30.6" width="1.4" height="6.6" fill="#7d998d"/><rect x="881.0" y="30.6" width="1.4" height="6.6" fill="#7d998d"/><rect x="920.9" y="30.6" width="1.4" height="6.6" fill="#7d998d"/><rect x="960.9" y="30.6" width="1.4" height="6.6" fill="#7d998d"/><rect x="1000.9" y="26" width="1.5" height="11.2" fill="#9fb5ab"/><rect x="1040.9" y="30.6" width="1.4" height="6.6" fill="#7d998d"/><rect x="1080.9" y="30.6" width="1.4" height="6.6" fill="#7d998d"/><rect x="1120.8" y="30.6" width="1.4" height="6.6" fill="#7d998d"/><rect x="1160.8" y="30.6" width="1.4" height="6.6" fill="#7d998d"/><rect x="1200.8" y="26" width="1.5" height="11.2" fill="#9fb5ab"/><rect x="1240.8" y="30.6" width="1.4" height="6.6" fill="#7d998d"/><rect x="1280.8" y="30.6" width="1.4" height="6.6" fill="#7d998d"/><rect x="1320.7" y="30.6" width="1.4" height="6.6" fill="#7d998d"/><rect x="1360.7" y="30.6" width="1.4" height="6.6" fill="#7d998d"/><rect x="1400.7" y="26" width="1.5" height="11.2" fill="#9fb5ab"/><rect x="1440.7" y="30.6" width="1.4" height="6.6" fill="#7d998d"/><rect x="1480.7" y="30.6" width="1.4" height="6.6" fill="#7d998d"/><rect x="1520.6" y="30.6" width="1.4" height="6.6" fill="#7d998d"/><rect x="1560.6" y="30.6" width="1.4" height="6.6" fill="#7d998d"/><rect x="1600.6" y="26" width="1.5" height="11.2" fill="#9fb5ab"/><rect x="1640.6" y="30.6" width="1.4" height="6.6" fill="#7d998d"/></svg>
<div class="b" style="left:2184.3px;top:240.3px;width:32.2px;height:32.2px;background:#171717;border:1px solid #303030;box-sizing:border-box;border-radius:3.5px;"></div>
<svg class="b" style="left:2192px;top:248px;" width="18.4" height="18.4" viewBox="0 0 18.4 18.4"><path d="M1.6 17.6C-0.6 11 0.2 0.4 9.2 0.4C18.2 0.4 19 11 16.8 17.6H11.4C12.6 13.4 13.2 6.4 9.2 6.4C5.2 6.4 5.8 13.4 7 17.6Z" fill="#2d8ceb"/><path d="M1.9 12.4L6.3 12.8L7 16.6L2.4 16.6Z M16.5 12.4L12.1 12.8L11.4 16.6L16 16.6Z" fill="#174a7e"/></svg>
<svg class="b" style="left:2226.6px;top:246.4px;" width="11" height="22" viewBox="0 0 11 22"><path d="M0.2 0.2H10.8V5.4L7.2 8.4H3.8L0.2 5.4Z" fill="#b4b4b4"/><rect x="4.5" y="6" width="2" height="15.6" fill="#b4b4b4"/></svg>
<div class="b" style="left:504px;top:276px;width:1782.2px;height:877.2px;background:#000;"></div>
<div class="b" style="left:505.4px;top:278px;width:1668.8px;height:860px;background:#f5f5ff;"></div>
<div class="b" style="left:2174.6px;top:278px;width:110.4px;height:860px;background:#232323;"></div>
<div class="b" style="left:505.4px;top:1138px;width:1779.6px;height:14px;background:#2e2e2e;"></div>
<svg class="b" style="left:505.4px;top:278px;" width="1668.8" height="860" viewBox="0 0 1668.8 860"><rect x="0" y="61" width="1668.8" height="1" fill="#cde5cd"/><rect x="0" y="364" width="1668.8" height="1" fill="#cde5cd"/><rect x="0" y="106" width="1668.8" height="1" fill="#cde5cd"/><rect x="0" y="319" width="1668.8" height="1" fill="#cde5cd"/><rect x="0" y="136" width="1668.8" height="1" fill="#cde5cd"/><rect x="0" y="289" width="1668.8" height="1" fill="#cde5cd"/><rect x="0" y="159" width="1668.8" height="1" fill="#cde5cd"/><rect x="0" y="267" width="1668.8" height="1" fill="#cde5cd"/><rect x="0" y="186" width="1668.8" height="1" fill="#cde5cd"/><rect x="0" y="240" width="1668.8" height="1" fill="#cde5cd"/><rect x="0" y="490" width="1668.8" height="1" fill="#cde5cd"/><rect x="0" y="794" width="1668.8" height="1" fill="#cde5cd"/><rect x="0" y="535" width="1668.8" height="1" fill="#cde5cd"/><rect x="0" y="748" width="1668.8" height="1" fill="#cde5cd"/><rect x="0" y="565" width="1668.8" height="1" fill="#cde5cd"/><rect x="0" y="718" width="1668.8" height="1" fill="#cde5cd"/><rect x="0" y="588" width="1668.8" height="1" fill="#cde5cd"/><rect x="0" y="696" width="1668.8" height="1" fill="#cde5cd"/><rect x="0" y="615" width="1668.8" height="1" fill="#cde5cd"/><rect x="0" y="669" width="1668.8" height="1" fill="#cde5cd"/><rect x="200.6" y="0" width="1" height="855.5" fill="#cde5cd"/><rect x="400.6" y="0" width="1" height="855.5" fill="#cde5cd"/><rect x="600.6" y="0" width="1" height="855.5" fill="#cde5cd"/><rect x="800.6" y="0" width="1" height="855.5" fill="#cde5cd"/><rect x="1000.6" y="0" width="1" height="855.5" fill="#cde5cd"/><rect x="1199.6" y="0" width="1" height="855.5" fill="#cde5cd"/><rect x="1399.6" y="0" width="1" height="855.5" fill="#cde5cd"/><rect x="1599.6" y="0" width="1" height="855.5" fill="#cde5cd"/></svg>
<svg class="b" style="left:524.2px;top:281.2px;" width="17.8" height="17.8" viewBox="0 0 17.8 17.8"><rect width="17.8" height="17.8" fill="#b9b9b9"/><path d="M3 15.2L15 3.2V15.2Z" fill="#555"/></svg>
<svg class="b" style="left:2138.4px;top:281.2px;" width="17.8" height="17.8" viewBox="0 0 17.8 17.8"><rect width="17.8" height="17.8" fill="#b9b9b9"/><path d="M2.8 3.2L14.8 15.2H2.8Z" fill="#555"/></svg>
<div class="b" style="left:2174.8px;top:338.7px;width:5.4px;height:1.5px;background:#9a9a9a;"></div>
<div class="b" style="left:2174.8px;top:642.3px;width:5.4px;height:1.5px;background:#9a9a9a;"></div>
<div class="b" style="left:2174.8px;top:383.90000000000003px;width:5.4px;height:1.5px;background:#9a9a9a;"></div>
<div class="b" style="left:2174.8px;top:597.0999999999999px;width:5.4px;height:1.5px;background:#9a9a9a;"></div>
<div class="b" style="left:2174.8px;top:413.90000000000003px;width:5.4px;height:1.5px;background:#9a9a9a;"></div>
<div class="b" style="left:2174.8px;top:567.0999999999999px;width:5.4px;height:1.5px;background:#9a9a9a;"></div>
<div class="b" style="left:2174.8px;top:436.4px;width:5.4px;height:1.5px;background:#9a9a9a;"></div>
<div class="b" style="left:2174.8px;top:544.5999999999999px;width:5.4px;height:1.5px;background:#9a9a9a;"></div>
<div class="b" style="left:2174.8px;top:463.6px;width:5.4px;height:1.5px;background:#9a9a9a;"></div>
<div class="b" style="left:2174.8px;top:517.4px;width:5.4px;height:1.5px;background:#9a9a9a;"></div>
<div class="b" style="left:2174.8px;top:490.5px;width:5.4px;height:1.5px;background:#9a9a9a;"></div>
<div class="b" style="left:2174.8px;top:299.41579886412495px;width:2.2px;height:1.4px;background:#a8a8a8;"></div>
<div class="b" style="left:2174.8px;top:681.584201135875px;width:2.2px;height:1.4px;background:#a8a8a8;"></div>
<div class="b" style="left:2174.8px;top:320.196026475114px;width:2.2px;height:1.4px;background:#a8a8a8;"></div>
<div class="b" style="left:2174.8px;top:660.8039735248859px;width:2.2px;height:1.4px;background:#a8a8a8;"></div>
<div class="b" style="left:2174.8px;top:355.22274534344655px;width:2.2px;height:1.4px;background:#a8a8a8;"></div>
<div class="b" style="left:2174.8px;top:625.7772546565534px;width:2.2px;height:1.4px;background:#a8a8a8;"></div>
<div class="b" style="left:2174.8px;top:369.9340198791892px;width:2.2px;height:1.4px;background:#a8a8a8;"></div>
<div class="b" style="left:2174.8px;top:611.0659801208108px;width:2.2px;height:1.4px;background:#a8a8a8;"></div>
<div class="b" style="left:2174.8px;top:394.7310378428335px;width:2.2px;height:1.4px;background:#a8a8a8;"></div>
<div class="b" style="left:2174.8px;top:586.2689621571665px;width:2.2px;height:1.4px;background:#a8a8a8;"></div>
<div class="b" style="left:2174.8px;top:405.14582263333017px;width:2.2px;height:1.4px;background:#a8a8a8;"></div>
<div class="b" style="left:2174.8px;top:575.8541773666698px;width:2.2px;height:1.4px;background:#a8a8a8;"></div>
<div class="b" style="left:2174.8px;top:422.70076696598994px;width:2.2px;height:1.4px;background:#a8a8a8;"></div>
<div class="b" style="left:2174.8px;top:558.2992330340101px;width:2.2px;height:1.4px;background:#a8a8a8;"></div>
<div class="b" style="left:2174.8px;top:430.0738699536901px;width:2.2px;height:1.4px;background:#a8a8a8;"></div>
<div class="b" style="left:2174.8px;top:550.9261300463098px;width:2.2px;height:1.4px;background:#a8a8a8;"></div>
<div class="b" style="left:2174.8px;top:442.5018187890948px;width:2.2px;height:1.4px;background:#a8a8a8;"></div>
<div class="b" style="left:2174.8px;top:538.4981812109052px;width:2.2px;height:1.4px;background:#a8a8a8;"></div>
<div class="b" style="left:2174.8px;top:447.7215759670672px;width:2.2px;height:1.4px;background:#a8a8a8;"></div>
<div class="b" style="left:2174.8px;top:533.2784240329328px;width:2.2px;height:1.4px;background:#a8a8a8;"></div>
<div class="b" style="left:2174.8px;top:452.3736894487655px;width:2.2px;height:1.4px;background:#a8a8a8;"></div>
<div class="b" style="left:2174.8px;top:528.6263105512345px;width:2.2px;height:1.4px;background:#a8a8a8;"></div>
<div class="b" style="left:2174.8px;top:456.5198899536337px;width:2.2px;height:1.4px;background:#a8a8a8;"></div>
<div class="b" style="left:2174.8px;top:524.4801100463662px;width:2.2px;height:1.4px;background:#a8a8a8;"></div>
<div class="b" style="left:2174.8px;top:460.21519504328813px;width:2.2px;height:1.4px;background:#a8a8a8;"></div>
<div class="b" style="left:2174.8px;top:520.7848049567118px;width:2.2px;height:1.4px;background:#a8a8a8;"></div>
<div class="b" style="left:2174.8px;top:767.8px;width:5.4px;height:1.5px;background:#9a9a9a;"></div>
<div class="b" style="left:2174.8px;top:1071.3999999999999px;width:5.4px;height:1.5px;background:#9a9a9a;"></div>
<div class="b" style="left:2174.8px;top:812.9999999999999px;width:5.4px;height:1.5px;background:#9a9a9a;"></div>
<div class="b" style="left:2174.8px;top:1026.1999999999998px;width:5.4px;height:1.5px;background:#9a9a9a;"></div>
<div class="b" style="left:2174.8px;top:842.9999999999999px;width:5.4px;height:1.5px;background:#9a9a9a;"></div>
<div class="b" style="left:2174.8px;top:996.1999999999999px;width:5.4px;height:1.5px;background:#9a9a9a;"></div>
<div class="b" style="left:2174.8px;top:865.4999999999999px;width:5.4px;height:1.5px;background:#9a9a9a;"></div>
<div class="b" style="left:2174.8px;top:973.6999999999999px;width:5.4px;height:1.5px;background:#9a9a9a;"></div>
<div class="b" style="left:2174.8px;top:892.6999999999999px;width:5.4px;height:1.5px;background:#9a9a9a;"></div>
<div class="b" style="left:2174.8px;top:946.4999999999999px;width:5.4px;height:1.5px;background:#9a9a9a;"></div>
<div class="b" style="left:2174.8px;top:919.5999999999999px;width:5.4px;height:1.5px;background:#9a9a9a;"></div>
<div class="b" style="left:2174.8px;top:728.5157988641249px;width:2.2px;height:1.4px;background:#a8a8a8;"></div>
<div class="b" style="left:2174.8px;top:1110.684201135875px;width:2.2px;height:1.4px;background:#a8a8a8;"></div>
<div class="b" style="left:2174.8px;top:749.296026475114px;width:2.2px;height:1.4px;background:#a8a8a8;"></div>
<div class="b" style="left:2174.8px;top:1089.903973524886px;width:2.2px;height:1.4px;background:#a8a8a8;"></div>
<div class="b" style="left:2174.8px;top:784.3227453434465px;width:2.2px;height:1.4px;background:#a8a8a8;"></div>
<div class="b" style="left:2174.8px;top:1054.8772546565533px;width:2.2px;height:1.4px;background:#a8a8a8;"></div>
<div class="b" style="left:2174.8px;top:799.034019879189px;width:2.2px;height:1.4px;background:#a8a8a8;"></div>
<div class="b" style="left:2174.8px;top:1040.1659801208107px;width:2.2px;height:1.4px;background:#a8a8a8;"></div>
<div class="b" style="left:2174.8px;top:823.8310378428334px;width:2.2px;height:1.4px;background:#a8a8a8;"></div>
<div class="b" style="left:2174.8px;top:1015.3689621571664px;width:2.2px;height:1.4px;background:#a8a8a8;"></div>
<div class="b" style="left:2174.8px;top:834.2458226333301px;width:2.2px;height:1.4px;background:#a8a8a8;"></div>
<div class="b" style="left:2174.8px;top:1004.9541773666697px;width:2.2px;height:1.4px;background:#a8a8a8;"></div>
<div class="b" style="left:2174.8px;top:851.8007669659899px;width:2.2px;height:1.4px;background:#a8a8a8;"></div>
<div class="b" style="left:2174.8px;top:987.39923303401px;width:2.2px;height:1.4px;background:#a8a8a8;"></div>
<div class="b" style="left:2174.8px;top:859.17386995369px;width:2.2px;height:1.4px;background:#a8a8a8;"></div>
<div class="b" style="left:2174.8px;top:980.0261300463098px;width:2.2px;height:1.4px;background:#a8a8a8;"></div>
<div class="b" style="left:2174.8px;top:871.6018187890948px;width:2.2px;height:1.4px;background:#a8a8a8;"></div>
<div class="b" style="left:2174.8px;top:967.5981812109051px;width:2.2px;height:1.4px;background:#a8a8a8;"></div>
<div class="b" style="left:2174.8px;top:876.8215759670671px;width:2.2px;height:1.4px;background:#a8a8a8;"></div>
<div class="b" style="left:2174.8px;top:962.3784240329327px;width:2.2px;height:1.4px;background:#a8a8a8;"></div>
<div class="b" style="left:2174.8px;top:881.4736894487654px;width:2.2px;height:1.4px;background:#a8a8a8;"></div>
<div class="b" style="left:2174.8px;top:957.7263105512344px;width:2.2px;height:1.4px;background:#a8a8a8;"></div>
<div class="b" style="left:2174.8px;top:885.6198899536337px;width:2.2px;height:1.4px;background:#a8a8a8;"></div>
<div class="b" style="left:2174.8px;top:953.5801100463661px;width:2.2px;height:1.4px;background:#a8a8a8;"></div>
<div class="b" style="left:2174.8px;top:889.3151950432881px;width:2.2px;height:1.4px;background:#a8a8a8;"></div>
<div class="b" style="left:2174.8px;top:949.8848049567117px;width:2.2px;height:1.4px;background:#a8a8a8;"></div>
<div class="b" style="left:2247.8px;top:478.6px;width:32.2px;height:26.4px;background:#171717;border:1px solid #303030;box-sizing:border-box;border-radius:3.5px;"></div>
<div class="b" style="left:2247.8px;top:908px;width:32.2px;height:26.4px;background:#171717;border:1px solid #303030;box-sizing:border-box;border-radius:3.5px;"></div>
<svg class="b" style="left:2250.6px;top:1142.4px;" width="7" height="5" viewBox="0 0 7 5"><path d="M0 5L3.5 0L7 5Z" fill="#8c8c8c"/></svg>
<svg class="b" style="left:1375.8px;top:1143.4px;" width="36" height="4.4" viewBox="0 0 36 4.4"><rect x="0.0" y="0" width="1.1" height="1.2" fill="#8a8a8a"/><rect x="0.0" y="3" width="1.1" height="1.2" fill="#8a8a8a"/><rect x="2.1" y="0" width="1.1" height="1.2" fill="#8a8a8a"/><rect x="2.1" y="3" width="1.1" height="1.2" fill="#8a8a8a"/><rect x="4.2" y="0" width="1.1" height="1.2" fill="#8a8a8a"/><rect x="4.2" y="3" width="1.1" height="1.2" fill="#8a8a8a"/><rect x="6.3" y="0" width="1.1" height="1.2" fill="#8a8a8a"/><rect x="6.3" y="3" width="1.1" height="1.2" fill="#8a8a8a"/><rect x="8.4" y="0" width="1.1" height="1.2" fill="#8a8a8a"/><rect x="8.4" y="3" width="1.1" height="1.2" fill="#8a8a8a"/><rect x="10.5" y="0" width="1.1" height="1.2" fill="#8a8a8a"/><rect x="10.5" y="3" width="1.1" height="1.2" fill="#8a8a8a"/><rect x="12.6" y="0" width="1.1" height="1.2" fill="#8a8a8a"/><rect x="12.6" y="3" width="1.1" height="1.2" fill="#8a8a8a"/><rect x="14.7" y="0" width="1.1" height="1.2" fill="#8a8a8a"/><rect x="14.7" y="3" width="1.1" height="1.2" fill="#8a8a8a"/><rect x="16.8" y="0" width="1.1" height="1.2" fill="#8a8a8a"/><rect x="16.8" y="3" width="1.1" height="1.2" fill="#8a8a8a"/><rect x="18.9" y="0" width="1.1" height="1.2" fill="#8a8a8a"/><rect x="18.9" y="3" width="1.1" height="1.2" fill="#8a8a8a"/><rect x="21.0" y="0" width="1.1" height="1.2" fill="#8a8a8a"/><rect x="21.0" y="3" width="1.1" height="1.2" fill="#8a8a8a"/><rect x="23.1" y="0" width="1.1" height="1.2" fill="#8a8a8a"/><rect x="23.1" y="3" width="1.1" height="1.2" fill="#8a8a8a"/><rect x="25.2" y="0" width="1.1" height="1.2" fill="#8a8a8a"/><rect x="25.2" y="3" width="1.1" height="1.2" fill="#8a8a8a"/><rect x="27.3" y="0" width="1.1" height="1.2" fill="#8a8a8a"/><rect x="27.3" y="3" width="1.1" height="1.2" fill="#8a8a8a"/><rect x="29.4" y="0" width="1.1" height="1.2" fill="#8a8a8a"/><rect x="29.4" y="3" width="1.1" height="1.2" fill="#8a8a8a"/><rect x="31.5" y="0" width="1.1" height="1.2" fill="#8a8a8a"/><rect x="31.5" y="3" width="1.1" height="1.2" fill="#8a8a8a"/><rect x="33.6" y="0" width="1.1" height="1.2" fill="#8a8a8a"/><rect x="33.6" y="3" width="1.1" height="1.2" fill="#8a8a8a"/></svg>
<div class="b" style="left:1074px;top:1172.8px;width:13.8px;height:13.8px;background:#4a4a4a;"></div>
<svg class="b" style="left:1117.8px;top:1172.4px;" width="14.4" height="15" viewBox="0 0 14.4 15"><path d="M0 0L14.4 7.5L0 15Z" fill="#b4b4b4"/></svg>
<div class="b" style="left:1163.4px;top:1172.8px;width:4.6px;height:13.8px;background:#4a4a4a;"></div>
<div class="b" style="left:1171.4px;top:1172.8px;width:4.6px;height:13.8px;background:#4a4a4a;"></div>
<svg class="b" style="left:1204px;top:1172.4px;" width="18" height="15" viewBox="0 0 18 15"><rect x="0" y="0.4" width="3.4" height="14.2" rx="1" fill="#b4b4b4"/><path d="M17.4 0.6V14.4L6 7.5Z" fill="#b4b4b4"/></svg>
<svg class="b" style="left:1246.3px;top:1174.8px;" width="24" height="10.8" viewBox="0 0 24 10.8"><path d="M0 5.4L11.4 0V10.8Z M12.2 5.4L23.6 0V10.8Z" fill="#b4b4b4"/></svg>
<svg class="b" style="left:1289px;top:1174.8px;" width="24" height="10.8" viewBox="0 0 24 10.8"><path d="M23.6 5.4L12.2 0V10.8Z M11.4 5.4L0 0V10.8Z" fill="#b4b4b4"/></svg>
<svg class="b" style="left:1337.6px;top:1172.4px;" width="18" height="15" viewBox="0 0 18 15"><rect x="14" y="0.4" width="3.4" height="14.2" rx="1" fill="#b4b4b4"/><path d="M0.2 0.6V14.4L11.6 7.5Z" fill="#b4b4b4"/></svg>
<svg class="b" style="left:1381.8px;top:1172.4px;" width="16" height="16" viewBox="0 0 16 16"><circle cx="7.8" cy="7.8" r="7.7" fill="#f0383c"/></svg>
<svg class="b" style="left:1422.9px;top:1171.1px;" width="21.1" height="17.0" viewBox="0 0 21.1 17"><path d="M0 3.3H7.6V0L17.7 4.8L7.6 9.7V6.6H3.3V13.7H17.8V9.4L21.1 7.8V17H0Z" fill="#b4b4b4"/></svg>
<svg class="b" style="left:1465.3px;top:1171.1px;" width="25" height="17" viewBox="0 0 25 17"><path d="M5.8 0V3.5C5.8 5.4 4.8 6.6 3.8 6.6H0V10.7H3.8C4.8 10.7 5.8 11.8 5.8 13.7V17H7.8V13.4C7.8 11.4 6 9.8 4.5 8.6C6 7.4 7.8 5.8 7.8 3.8V0Z" fill="#b4b4b4"/><path d="M10.4 0V3.8C10.4 5.8 12.2 7.4 13.7 8.6C12.2 9.8 10.4 11.4 10.4 13.4V17H12.4V13.7C12.4 11.8 13.4 10.7 14.4 10.7H18.3V13.5L24.75 8.6L18.3 3.8V6.6H14.4C13.4 6.6 12.4 5.4 12.4 3.5V0Z" fill="#b4b4b4"/></svg>
<svg class="b" style="left:0;top:0" width="2821" height="1393" viewBox="0 0 2821 1393"><path d="M1843.6 1170.6V1190.6" stroke="#b4b4b4" stroke-width="1.6"/><path d="M1840.1999999999998 1173.1999999999998L1843.6 1168.6L1847.0 1173.1999999999998Z M1840.1999999999998 1188.0L1843.6 1192.6L1847.0 1188.0Z" fill="#b4b4b4"/><circle cx="1854.2" cy="1180" r="5.7" fill="none" stroke="#b4b4b4" stroke-width="1.7"/><path d="M1858.5 1184.3L1864.6 1190.6" stroke="#b4b4b4" stroke-width="2.6" stroke-linecap="round"/><path d="M1851.1 1180H1857.3" stroke="#b4b4b4" stroke-width="1.5"/><path d="M1854.2 1176.9V1183.1" stroke="#b4b4b4" stroke-width="1.5"/><path d="M1887.6 1170.6V1190.6" stroke="#b4b4b4" stroke-width="1.6"/><path d="M1884.1999999999998 1173.1999999999998L1887.6 1168.6L1891.0 1173.1999999999998Z M1884.1999999999998 1188.0L1887.6 1192.6L1891.0 1188.0Z" fill="#b4b4b4"/><circle cx="1898.2" cy="1180" r="5.7" fill="none" stroke="#b4b4b4" stroke-width="1.7"/><path d="M1902.5 1184.3L1908.6 1190.6" stroke="#b4b4b4" stroke-width="2.6" stroke-linecap="round"/><path d="M1895.1 1180H1901.3" stroke="#b4b4b4" stroke-width="1.5"/><path d="M1929.6 1170.8H1952.4" stroke="#b4b4b4" stroke-width="1.6"/><path d="M1932.1999999999998 1167.3999999999999L1927.6 1170.8L1932.1999999999998 1174.2Z M1949.8000000000002 1167.3999999999999L1954.4 1170.8L1949.8000000000002 1174.2Z" fill="#b4b4b4"/><circle cx="1940.4" cy="1181.8" r="5.8" fill="none" stroke="#b4b4b4" stroke-width="1.7"/><path d="M1944.8 1186.2L1950.8 1192.0" stroke="#b4b4b4" stroke-width="2.6" stroke-linecap="round"/><path d="M1937.2 1181.8H1943.6" stroke="#b4b4b4" stroke-width="1.5"/><path d="M1940.4 1178.6V1185.0" stroke="#b4b4b4" stroke-width="1.5"/><path d="M1974.4 1170.8H1997" stroke="#4b4b4b" stroke-width="1.6"/><path d="M1977.0 1167.3999999999999L1972.4 1170.8L1977.0 1174.2Z M1994.4 1167.3999999999999L1999 1170.8L1994.4 1174.2Z" fill="#4b4b4b"/><circle cx="1985" cy="1181.8" r="5.8" fill="none" stroke="#4b4b4b" stroke-width="1.7"/><path d="M1989.4 1186.2L1995.4 1192.0" stroke="#4b4b4b" stroke-width="2.6" stroke-linecap="round"/><path d="M1981.8 1181.8H1988.2" stroke="#4b4b4b" stroke-width="1.5"/><circle cx="2028.2" cy="1180" r="5.6" fill="none" stroke="#4b4b4b" stroke-width="1.7"/><path d="M2032.5 1184.3L2038.4 1190.4" stroke="#4b4b4b" stroke-width="2.6" stroke-linecap="round"/><path d="M2025.1 1180H2031.3" stroke="#4b4b4b" stroke-width="1.5"/><path d="M2028.2 1167.2L2031.8 1171.4H2024.6Z M2028.2 1192.6L2031.8 1188.4H2024.6Z M2015.8 1180L2020 1176.4V1183.6Z M2041.4 1180L2037.2 1176.4V1183.6Z" fill="#4b4b4b"/><path d="M2064.6 1174.6V1178.7L2060.5 1182.5L2064.6 1186.3V1190.4" fill="none" stroke="#b4b4b4" stroke-width="1.8" stroke-linejoin="round"/><circle cx="2078" cy="1181.8" r="6" fill="none" stroke="#b4b4b4" stroke-width="1.7"/><path d="M2082.5 1186.3L2089.0 1192.2" stroke="#b4b4b4" stroke-width="2.6" stroke-linecap="round"/><path d="M2109 1174.6V1178.7L2113.1 1182.5L2109 1186.3V1190.4" fill="none" stroke="#b4b4b4" stroke-width="1.8" stroke-linejoin="round"/><circle cx="2122" cy="1181.8" r="6" fill="none" stroke="#b4b4b4" stroke-width="1.7"/><path d="M2126.5 1186.3L2133.0 1192.2" stroke="#b4b4b4" stroke-width="2.6" stroke-linecap="round"/><path d="M2149 1174.6V1178.7L2144.9 1182.5L2149 1186.3V1190.4" fill="none" stroke="#4b4b4b" stroke-width="1.8" stroke-linejoin="round"/><path d="M2154.6 1174.6V1178.7L2158.7 1182.5L2154.6 1186.3V1190.4" fill="none" stroke="#4b4b4b" stroke-width="1.8" stroke-linejoin="round"/><circle cx="2166.4" cy="1181.8" r="6" fill="none" stroke="#4b4b4b" stroke-width="1.7"/><path d="M2170.9 1186.3L2177.2 1192.2" stroke="#4b4b4b" stroke-width="2.6" stroke-linecap="round"/><circle cx="2205.6" cy="1183.4" r="7.7" fill="none" stroke="#b4b4b4" stroke-width="2"/><path d="M2205.6 1183.4V1176.6A6.8 6.8 0 0 1 2211.4 1179.8Z" fill="#b4b4b4"/><path d="M2202.2 1170.8H2209 M2205.6 1171V1175" stroke="#b4b4b4" stroke-width="1.9"/><path d="M2196.4 1175.4L2199.6 1172.6L2201.2 1174.4L2198 1177.2Z" fill="#b4b4b4"/><path d="M2237.4 1170.6H2245 M2237.4 1191.6H2245" stroke="#4b4b4b" stroke-width="1.5"/><path d="M2241.2 1174.6V1187.6" stroke="#4b4b4b" stroke-width="1.6"/><path d="M2237.7999999999997 1177.1999999999998L2241.2 1172.6L2244.6 1177.1999999999998Z M2237.7999999999997 1185.0L2241.2 1189.6L2244.6 1185.0Z" fill="#4b4b4b"/><circle cx="2252.4" cy="1181.6" r="5.7" fill="none" stroke="#4b4b4b" stroke-width="1.7"/><path d="M2256.7 1185.9L2262.6 1191.8" stroke="#4b4b4b" stroke-width="2.6" stroke-linecap="round"/><path d="M2249.3 1181.6H2255.5" stroke="#4b4b4b" stroke-width="1.5"/><path d="M2252.4 1178.5V1184.7" stroke="#4b4b4b" stroke-width="1.5"/></svg>
<svg class="b" style="left:2449px;top:134px;" width="12.4" height="10.4" viewBox="0 0 12.4 10.4"><rect x="0" y="0.00" width="12.4" height="1.6" fill="#bdbdbd"/><rect x="0" y="4.40" width="12.4" height="1.6" fill="#bdbdbd"/><rect x="0" y="8.80" width="12.4" height="1.6" fill="#bdbdbd"/></svg>
<div class="b" style="left:2302px;top:160.2px;width:514px;height:1.4px;background:#2d2d2d;"></div>
<div class="b" style="left:2302px;top:204.8px;width:514px;height:1.4px;background:#2d2d2d;"></div>
<div class="b" style="left:2302px;top:259.4px;width:514px;height:1.4px;background:#2d2d2d;"></div>
<div class="b" style="left:2375.5px;top:216px;width:426.5px;height:29.6px;background:#2a2a2a;border-radius:3px;"></div>
<svg class="b" style="left:2781.6px;top:228px;" width="10.4" height="6.2" viewBox="0 0 10.4 6.2"><path d="M0.4 0.6L5.2 5.2L10.0 0.6" fill="none" stroke="#484848" stroke-width="1.5"/></svg>
<svg class="b" style="left:574px;top:1231.4px;" width="12.4" height="10.4" viewBox="0 0 12.4 10.4"><rect x="0" y="0.00" width="12.4" height="1.6" fill="#bdbdbd"/><rect x="0" y="4.40" width="12.4" height="1.6" fill="#bdbdbd"/><rect x="0" y="8.80" width="12.4" height="1.6" fill="#bdbdbd"/></svg>
<div class="b" style="left:501.6px;top:1263.6px;width:1886px;height:64.6px;background:#1d1d1d;border:1.6px solid #000;box-sizing:border-box;"></div>
<div class="b" style="left:2371.6px;top:1265px;width:1.6px;height:62px;background:#000;"></div>
<div class="b" style="left:2373px;top:1294.8px;width:13px;height:1.4px;background:#000;"></div>
<div class="b" style="left:504px;top:1265.6px;width:2px;height:29px;background:#e6e600;"></div>
<div class="b" style="left:504px;top:1296.8px;width:2px;height:29.4px;background:#e6e600;"></div>
<svg class="b" style="left:500px;top:1328.4px;" width="1890" height="7" viewBox="0 0 1890 7"><rect x="4.1" y="0" width="1.5" height="6" fill="#a0a0a0"/><rect x="35.2" y="0" width="1.5" height="2.6" fill="#a0a0a0"/><rect x="66.2" y="0" width="1.5" height="2.6" fill="#a0a0a0"/><rect x="97.3" y="0" width="1.5" height="6" fill="#a0a0a0"/><rect x="128.4" y="0" width="1.5" height="2.6" fill="#a0a0a0"/><rect x="159.4" y="0" width="1.5" height="2.6" fill="#a0a0a0"/><rect x="190.5" y="0" width="1.5" height="6" fill="#a0a0a0"/><rect x="221.6" y="0" width="1.5" height="2.6" fill="#a0a0a0"/><rect x="252.6" y="0" width="1.5" height="2.6" fill="#a0a0a0"/><rect x="283.7" y="0" width="1.5" height="6" fill="#a0a0a0"/><rect x="314.8" y="0" width="1.5" height="2.6" fill="#a0a0a0"/><rect x="345.8" y="0" width="1.5" height="2.6" fill="#a0a0a0"/><rect x="376.9" y="0" width="1.5" height="6" fill="#a0a0a0"/><rect x="408.0" y="0" width="1.5" height="2.6" fill="#a0a0a0"/><rect x="439.0" y="0" width="1.5" height="2.6" fill="#a0a0a0"/><rect x="470.1" y="0" width="1.5" height="6" fill="#a0a0a0"/><rect x="501.2" y="0" width="1.5" height="2.6" fill="#a0a0a0"/><rect x="532.2" y="0" width="1.5" height="2.6" fill="#a0a0a0"/><rect x="563.3" y="0" width="1.5" height="6" fill="#a0a0a0"/><rect x="594.4" y="0" width="1.5" height="2.6" fill="#a0a0a0"/><rect x="625.4" y="0" width="1.5" height="2.6" fill="#a0a0a0"/><rect x="656.5" y="0" width="1.5" height="6" fill="#a0a0a0"/><rect x="687.6" y="0" width="1.5" height="2.6" fill="#a0a0a0"/><rect x="718.6" y="0" width="1.5" height="2.6" fill="#a0a0a0"/><rect x="749.7" y="0" width="1.5" height="6" fill="#a0a0a0"/><rect x="780.8" y="0" width="1.5" height="2.6" fill="#a0a0a0"/><rect x="811.8" y="0" width="1.5" height="2.6" fill="#a0a0a0"/><rect x="842.9" y="0" width="1.5" height="6" fill="#a0a0a0"/><rect x="874.0" y="0" width="1.5" height="2.6" fill="#a0a0a0"/><rect x="905.0" y="0" width="1.5" height="2.6" fill="#a0a0a0"/><rect x="936.1" y="0" width="1.5" height="6" fill="#a0a0a0"/><rect x="967.2" y="0" width="1.5" height="2.6" fill="#a0a0a0"/><rect x="998.2" y="0" width="1.5" height="2.6" fill="#a0a0a0"/><rect x="1029.3" y="0" width="1.5" height="6" fill="#a0a0a0"/><rect x="1060.4" y="0" width="1.5" height="2.6" fill="#a0a0a0"/><rect x="1091.4" y="0" width="1.5" height="2.6" fill="#a0a0a0"/><rect x="1122.5" y="0" width="1.5" height="6" fill="#a0a0a0"/><rect x="1153.6" y="0" width="1.5" height="2.6" fill="#a0a0a0"/><rect x="1184.6" y="0" width="1.5" height="2.6" fill="#a0a0a0"/><rect x="1215.7" y="0" width="1.5" height="6" fill="#a0a0a0"/><rect x="1246.8" y="0" width="1.5" height="2.6" fill="#a0a0a0"/><rect x="1277.8" y="0" width="1.5" height="2.6" fill="#a0a0a0"/><rect x="1308.9" y="0" width="1.5" height="6" fill="#a0a0a0"/><rect x="1340.0" y="0" width="1.5" height="2.6" fill="#a0a0a0"/><rect x="1371.0" y="0" width="1.5" height="2.6" fill="#a0a0a0"/><rect x="1402.1" y="0" width="1.5" height="6" fill="#a0a0a0"/><rect x="1433.2" y="0" width="1.5" height="2.6" fill="#a0a0a0"/><rect x="1464.2" y="0" width="1.5" height="2.6" fill="#a0a0a0"/><rect x="1495.3" y="0" width="1.5" height="6" fill="#a0a0a0"/><rect x="1526.4" y="0" width="1.5" height="2.6" fill="#a0a0a0"/><rect x="1557.4" y="0" width="1.5" height="2.6" fill="#a0a0a0"/><rect x="1588.5" y="0" width="1.5" height="6" fill="#a0a0a0"/><rect x="1619.6" y="0" width="1.5" height="2.6" fill="#a0a0a0"/><rect x="1650.6" y="0" width="1.5" height="2.6" fill="#a0a0a0"/><rect x="1681.7" y="0" width="1.5" height="6" fill="#a0a0a0"/><rect x="1712.8" y="0" width="1.5" height="2.6" fill="#a0a0a0"/><rect x="1743.8" y="0" width="1.5" height="2.6" fill="#a0a0a0"/><rect x="1774.9" y="0" width="1.5" height="6" fill="#a0a0a0"/><rect x="1806.0" y="0" width="1.5" height="2.6" fill="#a0a0a0"/><rect x="1837.0" y="0" width="1.5" height="2.6" fill="#a0a0a0"/><rect x="1868.1" y="0" width="1.5" height="6" fill="#a0a0a0"/></svg>
<svg class="b" style="left:2545.6px;top:1231.4px;" width="12.4" height="10.4" viewBox="0 0 12.4 10.4"><rect x="0" y="0.00" width="12.4" height="1.6" fill="#bdbdbd"/><rect x="0" y="4.40" width="12.4" height="1.6" fill="#bdbdbd"/><rect x="0" y="8.80" width="12.4" height="1.6" fill="#bdbdbd"/></svg>
<div class="b" style="left:1958px;top:1366px;width:1px;height:20px;background:#323232;"></div>
<div class="b" style="left:2033px;top:1366px;width:1px;height:20px;background:#323232;"></div>
<div class="b" style="left:2184.3px;top:1366px;width:1px;height:20px;background:#323232;"></div>
<div class="b" style="left:2407px;top:1366px;width:1px;height:20px;background:#323232;"></div>
<div class="b" style="left:2508.5px;top:1366px;width:1px;height:20px;background:#323232;"></div>
<div class="b" style="left:2617px;top:1366px;width:1px;height:20px;background:#323232;"></div>
<div class="b" style="left:2746.6px;top:1366px;width:1px;height:20px;background:#323232;"></div>
<svg class="b" style="left:0;top:0;" width="2821" height="1393" viewBox="0 0 2821 1393" shape-rendering="crispEdges"><path d="M507 491V458h1h1v-2h1v5h1v-11h1v9h1h1v-32h1v-30h1v-50h1v41h1h1v42h1v36h1v1h1v-5h1v3h1v-4h1v5h1v-8h1v-18h1v-14h1v-8h1v4h1v-20h1v18h1v4h1v-7h1h1v-25h1v22h1v-9h1v-11h1v13h1v-23h1v26h1v-22h1v20h1v-15h1v10h1v-3h1v-25h1v4h1v14h1v5h1v3h1v-10h1v2h1v5h1v-1h1v-15h1v1h1v7h1v6h1v-15h1v5h1v40h1v-7h1v-20h1v8h1v-3h1v-11h1v43h1v-34h1v-18h1v7h1v-9h1v12h1v15h1v-5h1v-7h1v-3h1v13h1v-3h1v6h1v-3h1v8h1v-8h1v-16h1v31h1v-24h1v-2h1v7h1v-14h1v-4h1v5h1v-14h1v15h1v2h1v-5h1v-13h1v4h1v23h1v-16h1v1h1v-1h1v3h1v-5h1v-2h1v5h1v-2h1v1h1h1v3h1v89h1v-3h1v-1h1v3h1h1v-9h1v-1h1v8h1v-2h1v3h1v-6h1v7h1v-7h1v7h1v-5h1v-4h1v10h1v-60h1v1h1v-1h1v-15h1v36h1v-25h1v-13h1h1v-16h1v-8h1v22h1v4h1v1h1h1v-18h1v-3h1v-4h1v17h1v-7h1v4h1v-1h1v1h1v6h1v-10h1v18h1v-14h1v-5h1h1v-7h1v-3h1v10h1v-8h1v-3h1v13h1h1v-4h1v1h1v11h1v-8h1v-10h1v2h1v-9h1v11h1v-9h1v26h1v-10h1v23h1v-2h1v-11h1v-3h1v-9h1v2h1v-1h1v-3h1v2h1v-11h1v23h1v2h1v-18h1v3h1v11h1v-1h1v-27h1v15h1v-15h1v6h1v2h1v-1h1v6h1v-11h1v10h1v6h1v-8h1v-4h1v2h1v-3h1v9h1v-9h1v10h1v-1h1v-10h1v9h1v-3h1v3h1v-1h1v-13h1v2h1v-2h1v15h1v-6h1v-1h1v-5h1v7h1v3h1v4h1v-2h1v2h1h1v97h1v1h1h1h1v-4h1v-1h1v2h1v-17h1v-11h1v21h1v-66h1v-16h1v2h1v-1h1v4h1v-5h1v-1h1v-5h1v-16h1v9h1v-8h1h1v13h1v72h1v26h1v1h1h1v2h1h1v-6h1v-14h1v-6h1v4h1v-1h1v9h1v7h1v9h1v1h1h1h1h1v-1h1v-14h1v-6h1v-91h1h1v32h1v68h1v10h1h1h1v-43h1v-2h1v-14h1v10h1v-45h1v-71h1v93h1v46h1v-3h1v1h1v-10h1v5h1v2h1v-1h1v3h1v-48h1v-22h1v-41h1v67h1v-2h1v8h1v40h1v4h1v-3h1v6h1v-4h1v1h1v-1h1v-50h1v2h1v3h1v-10h1v13h1v12h1v-31h1v16h1v-24h1v-6h1v7h1v15h1v3h1v-16h1v7h1v-20h1v5h1v-8h1v36h1v-15h1v-29h1v55h1v-44h1v9h1v-20h1v37h1v-40h1v29h1v-19h1v26h1v-26h1v18h1v-1h1v1h1v-8h1h1v20h1v12h1v-15h1v4h1v-4h1v7h1v-5h1v-27h1v24h1v6h1v-7h1v-18h1v36h1v-13h1v-7h1h1v6h1v-3h1h1v-5h1v2h1v5h1v-6h1h1v8h1v-1h1v-21h1v28h1v-17h1v-5h1v-6h1v-6h1v10h1v-6h1v4h1v-5h1v3h1v-13h1v14h1v-7h1v6h1v6h1v-11h1v1h1v-3h1v-5h1v14h1v-1h1v86h1v4h1v-3h1v-6h1v6h1v-11h1v9h1v-5h1v-5h1v11h1v-3h1v5h1v-1h1v2h1v-8h1v2h1v4h1v-56h1v-42h1v19h1v19h1v-1h1v-15h1v11h1v-5h1v-10h1v13h1v2h1v1h1v-13h1v-8h1v10h1v-28h1v27h1v-11h1v6h1v-5h1v5h1v-5h1v-12h1v2h1v-1h1v-5h1v2h1v-2h1v-1h1v7h1v5h1v5h1v-2h1v-13h1v3h1v7h1v8h1v-10h1v10h1v-19h1v23h1v-16h1v10h1v7h1v-11h1v20h1v2h1v11h1v-11h1v-15h1v-4h1v-11h1v12h1v-7h1v2h1v-8h1v21h1v-18h1v-3h1v8h1v-4h1v-6h1v-5h1v8h1v2h1v-6h1v2h1v-3h1v11h1v-4h1v-9h1v6h1v-4h1v12h1v-14h1v13h1v-1h1h1v-9h1v4h1v2h1v3h1h1v-7h1v12h1v-4h1v1h1v-15h1v12h1v1h1v1h1v1h1h1v-3h1v-4h1v-5h1v11h1v25h1v75h1v1h1v-1h1v-1h1h1v-3h1v1h1v-20h1v-7h1v27h1v-62h1v-24h1v-7h1h1v15h1v-26h1v-1h1v3h1v5h1v-18h1v3h1v-7h1v23h1v77h1v22h1v1h1v-2h1v1h1h1v-11h1v-9h1v-2h1v-5h1v7h1v2h1v17h1v5h1v-1h1v1h1v-2h1v1h1h1v-11h1v-9h1v-91h1h1v32h1v61h1v15h1v1h1v1h1v-53h1v-1h1v9h1v-13h1v-36h1v-71h1v93h1v40h1v2h1v-5h1v8h1v-2h1v2h1v-3h1v3h1v-75h1v-11h1v-27h1v42h1v7h1v36h1v34h1h1v-2h1v3h1h1h1v-1h1v-26h1v-13h1v-13h1v5h1v-16h1v15h1v-1h1v1h1v-11h1v8h1v-25h1v4h1v17h1v-2h1v-8h1v18h1v-3h1v-21h1v10h1v-22h1v-4h1v-8h1v27h1v9h1v-2h1v-6h1v-4h1v1h1v4h1v-20h1v1h1v9h1v-2h1v-12h1v10h1v2h1v25h1v11h1v-20h1v2h1v7h1v5h1v-6h1v-29h1v26h1v-28h1v8h1v21h1v-30h1v15h1v12h1v-2h1v-11h1v25h1v-22h1v5h1v2h1v-9h1v14h1v-10h1v9h1v2h1v-10h1v-13h1v10h1v-2h1v-7h1v3h1v-13h1v14h1v-8h1v15h1v-18h1v2h1v4h1v-7h1v3h1v5h1v-10h1v10h1v-2h1v1h1v-3h1h1v95h1v-9h1v2h1v6h1h1h1v-3h1v-13h1v15h1h1v-5h1v5h1v2h1v-4h1v-5h1v1h1v6h1v-90h1v-9h1v40h1v-13h1v-2h1v-17h1v-1h1v19h1v-1h1v19h1v-36h1v-5h1v21h1v-3h1v-1h1v-22h1v22h1v-4h1v-9h1v-8h1v22h1v-4h1v-6h1v-8h1v10h1v-16h1v16h1v-3h1v-4h1v1h1v5h1v2h1v-2h1v-4h1v-3h1v3h1v-2h1v8h1v-3h1h1v24h1v-21h1v5h1v-15h1v13h1v-2h1v17h1v-8h1v13h1v-10h1v-27h1v4h1v12h1v-20h1v9h1v15h1v-10h1v-3h1v2h1h1v-3h1v2h1v-10h1v6h1v2h1v-7h1v8h1h1v-2h1v-11h1v11h1h1v1h1v-5h1v3h1v4h1v-8h1v2h1v5h1v-3h1v3h1v-5h1v5h1v-2h1v3h1v-13h1v6h1v7h1v-8h1v6h1v6h1v-2h1v-3h1v1h1v12h1v-15h1v-13h1v59h1v55h1h1v1h1v-2h1v1h1v-4h1v1h1v-19h1v-11h1v25h1v-58h1v-15h1v-12h1v4h1v-2h1v-2h1v-3h1v8h1v-21h1v9h1v-7h1v-4h1v4h1v87h1v21h1v-3h1v2h1v-1h1v1h1v-10h1v-6h1v-11h1h1v8h1v2h1v19h1v2h1v1h1h1v-1h1h1v-1h1v-10h1v-9h1v-91h1h1v32h1v67h1v9h1h1h1v-39h1v-8h1v4h1v-1h1v-48h1v-71h1v93h1v46h1v-1h1v1h1v-1h1h1v-10h1v5h1v3h1v-77h1v-34h1v65h1v3h1v4h1v6h1v38h1v4h1v-5h1v1h1v1h1v-5h1v7h1v-37h1v9h1v-19h1v8h1v-6h1v-24h1v19h1v-13h1v12h1v-22h1v-2h1v23h1v-3h1v2h1v-5h1v1h1v-30h1v27h1v22h1v-16h1v-40h1v28h1v-6h1v4h1v-1h1v1h1v1h1v1h1v-1h1v-17h1v17h1v-2h1v-15h1v1h1v13h1v11h1v14h1v-7h1v6h1v-3h1v-13h1v10h1v-20h1v2h1v9h1v-16h1v12h1v6h1v-10h1v-7h1v18h1v-12h1v12h1v10h1v-27h1v8h1v1h1v8h1v-1h1v4h1v-8h1v7h1v-26h1v20h1v-8h1v-1h1v-19h1v2h1v8h1v-4h1v-5h1v11h1v1h1v-12h1h1v11h1v-7h1v7h1v-1h1v1h1v-1h1v-1h1v-8h1v12h1v87h1v1h1v-1h1v-1h1v-2h1v3h1v-10h1v-5h1v5h1v7h1h1v3h1v-3h1v4h1v-2h1v-2h1v5h1v-93h1v18h1v-13h1v-10h1v33h1v-13h1v-20h1v19h1v22h1v-19h1v-11h1v-5h1v16h1v-10h1v-12h1v5h1v-13h1v26h1v9h1v-31h1v15h1v2h1h1v-1h1v-5h1v4h1v-16h1v1h1v-1h1v13h1v-7h1v4h1v13h1v-11h1v1h1v-11h1v13h1v1h1v1h1v-3h1v-14h1v8h1v-7h1v15h1v4h1v29h1v-11h1v-2h1v-5h1v-20h1v-9h1v8h1v-3h1v11h1v-12h1v23h1v-17h1v-11h1v2h1v8h1v-8h1h1v2h1v-2h1v6h1v2h1v-1h1v-9h1v8h1v-1h1v-6h1v-3h1v6h1v-6h1v5h1v-2h1v-4h1v10h1v1h1v-12h1h1v13h1v-13h1v11h1v-1h1v2h1v-2h1v-6h1v-2h1v-5h1v3h1h1v11h1v-14h1v16h1v-5h1v17h1v58h1v27h1v3h1v-1h1v-4h1v1h1v-2h1v-1h1v-25h1v7h1v17h1v-62h1v-26h1v-4h1v7h1h1v-8h1v5h1v-3h1v-10h1v3h1v-4h1v-14h1v25h1v85h1v13h1v1h1v-4h1v4h1v-4h1v-9h1v-8h1v-5h1v4h1v-1h1v10h1v12h1v4h1h1h1h1h1v-1h1v-18h1v-2h1v-91h1h1v32h1v64h1v11h1v1h1v1h1v-40h1v-2h1v-15h1v12h1v-48h1v-71h1v93h1v45h1v-1h1v-9h1v8h1v2h1h1v-1h1h1v-61h1v-51h1v45h1v9h1v-12h1v39h1v38h1h1v1h1h1v-6h1v4h1v3h1v-40h1v15h1v-42h1v17h1v2h1v-10h1v8h1v-25h1v15h1h1v4h1v-18h1v11h1v-5h1v7h1v2h1v-31h1v27h1h1v-6h1v7h1v-4h1v-2h1h1v-1h1v-7h1v9h1v-3h1v-11h1v10h1v20h1v-32h1v-10h1v17h1v9h1v2h1v11h1v9h1v-21h1v14h1v-24h1v9h1v-4h1v26h1v-16h1v3h1v-29h1v52h1v-26h1v1h1v19h1v-20h1v-10h1v9h1v12h1v-21h1v-5h1v11h1v3h1v-6h1v3h1v4h1v-13h1v7h1v-4h1v-14h1v-5h1h1v2h1v10h1v-8h1v1h1v13h1v-15h1v16h1v-15h1h1v1h1v5h1v-2h1v-1h1v2h1h1v2h1v88h1v-10h1v8h1v-4h1v6h1v-4h1v1h1v-12h1v14h1v-2h1v-7h1v7h1v-9h1v5h1v8h1v1h1h1v-28h1v-69h1v7h1v11h1v-12h1v19h1v-29h1v22h1v8h1v-16h1v26h1v-28h1v-11h1v14h1v2h1v6h1v-12h1v10h1v-2h1v-1h1v-2h1h1v-8h1v-14h1h1v26h1v-18h1h1v6h1v-13h1v17h1v-4h1v2h1v-4h1v-11h1v18h1h1v-12h1v8h1v-4h1v-7h1v11h1h1v7h1v5h1v-6h1v15h1v13h1v2h1v-18h1v-11h1v-5h1v5h1v-6h1v-14h1v6h1v8h1v-11h1v7h1v-5h1v8h1h1v-13h1v3h1v8h1h1v-13h1v2h1v-2h1v14h1v-7h1v3h1v3h1v3h1v-3h1v-3h1v8h1v-17h1v3h1v8h1v-1h1v-2h1v-9h1v4h1v6h1v-5h1v-1h1v9h1v-15h1v1h1v26h1v-13h1h1v2h1h1h1v-9h1v102h1v5h1v-3h1v2h1v1h1h1v-3h1v-1h1v-29h1v6h1v25h1v-68h1v-18h1v-6h1v-5h1v-2h1v8h1h1v-11h1v-2h1v-5h1v-7h1v5h1v19h1v86h1v9h1v1h1v-1h1v-2h1v-1h1v-4h1v-9h1v-10h1v-6h1v6h1v17h1v10h1v3h1v-2h1v1h1h1v1h1v-1h1v-14h1v-6h1v-91h1h1v32h1v68h1v10h1v-2h1h1v-39h1v-3h1v-10h1v-4h1v-36h1v-71h1v93h1v46h1h1v-2h1v2h1v-5h1v-4h1v8h1h1v-71h1v-42h1v64h1v-11h1v17h1v26h1v22h1v1h1h1v1h1v-7h1v6h1h1v-59h1v18h1v-16h1v11h1v18h1v-10h1v-13h1v2h1v-19h1v24h1v-21h1v-15h1v18h1v-1h1v-7h1v-14h1v25h1v19h1v-21h1v-23h1v12h1v-10h1v15h1v-21h1v-5h1v43h1v-40h1v34h1v-19h1v-5h1v2h1v-8h1v-5h1v21h1v-12h1v3h1v21h1v-10h1v-3h1v15h1v-1h1v-24h1v22h1v-4h1v3h1v25h1v-46h1v18h1v1h1v6h1v-2h1v-18h1h1v16h1v-1h1v2h1v-4h1v5h1v-11h1v25h1v1h1v-4h1v-25h1v25h1v-35h1v4h1v-9h1v5h1v-5h1v11h1h1v4h1v-14h1v-2h1v11h1v-6h1v-4h1v6h1h1v1h1v-4h1v-4h1v6h1v-2h1v89h1v-1h1v8h1h1v-2h1v1h1v-15h1v3h1v-3h1v13h1v-3h1v-6h1v8h1v-8h1v9h1v-4h1v8h1v-59h1v-4h1v-32h1v6h1v-6h1v28h1v-13h1v-4h1v13h1v-4h1v-16h1v12h1v-25h1v27h1v-14h1v-6h1v21h1v-31h1v26h1v-17h1v12h1v-2h1v4h1v-14h1v1h1v5h1v1h1v3h1v-2h1v-9h1v9h1v13h1v-6h1v-5h1v1h1h1v-3h1v4h1h1v-14h1v15h1v-5h1v7h1v-3h1v3h1v4h1v14h1v-11h1v10h1v1h1v-30h1v11h1v-2h1v-18h1v25h1v-22h1v1h1v1h1v6h1v-4h1v2h1v3h1v-1h1h1v1h1v-9h1v1h1v5h1v2h1v-13h1v9h1v3h1h1v-9h1v9h1v-13h1v7h1v6h1v-2h1v1h1v2h1v-9h1v6h1v10h1v-16h1v8h1v-1h1v9h1v-13h1v3h1v-1h1v-7h1v21h1v-26h1v21h1v-5h1v12h1v86h1h1v2h1v-1h1v-2h1v-1h1v-4h1v-3h1v-17h1v4h1v20h1v-61h1v-36h1v8h1v-6h1v-1h1v3h1v-3h1v-4h1v-14h1v10h1v-15h1v12h1v5h1v103h1v1h1v-1h1v3h1v-2h1v1h1v-9h1v-7h1v-6h1v-5h1v6h1v12h1v12h1v1h1v-2h1v2h1v-1h1v-1h1v2h1v-21h1v-91h1h1v32h1v63h1v1h1v13h1v1h1v-1h1v-42h1v-7h1v5h1v-3h1v-46h1v-71h1v93h1V558h-1v82h-1v-63h-1v-29h-1v-1h-1v14h-1v-12h-1v-52h-1v-2h-1v4h-1h-1v2h-1v78h-1v34h-1h-1v-98h-1v-17h-1v6h-1v-5h-1v4h-1v-2h-1v-2h-1v-3h-1v18h-1v1h-1v9h-1v-3h-1v-10h-1v-5h-1v-11h-1v4h-1v-3h-1h-1h-1v5h-1v90h-1v28h-1v4h-1v-53h-1v24h-1v-4h-1v17h-1v-12h-1v-3h-1v-6h-1v13h-1v-17h-1v-13h-1v-66h-1v11h-1v-5h-1v-3h-1v-7h-1v2h-1v-3h-1h-1v5h-1v-2h-1v-1h-1v98h-1v1h-1v-5h-1v13h-1v-20h-1v12h-1v-3h-1v9h-1v6h-1v-12h-1v-3h-1v10h-1v-21h-1v10h-1v1h-1v6h-1v8h-1v-11h-1v-2h-1v-1h-1v12h-1v-11h-1h-1v3h-1v-4h-1v11h-1v-12h-1v-14h-1v27h-1v-7h-1h-1v-2h-1v16h-1v-2h-1v-17h-1v-3h-1v-1h-1v6h-1v-27h-1v31h-1v-11h-1v-2h-1v1h-1h-1v-12h-1v21h-1v-12h-1v-4h-1v-3h-1v-8h-1v-7h-1v22h-1v-2h-1v-4h-1v19h-1v-12h-1v1h-1v1h-1v-3h-1v29h-1v-5h-1v1h-1v2h-1v-18h-1v-2h-1v26h-1v-17h-1v-5h-1v-10h-1v2h-1v8h-1v8h-1v4h-1v-16h-1v25h-1v-31h-1v-10h-1v1h-1v29h-1v-19h-1v16h-1v-2h-1v-17h-1v4h-1v-6h-1v9h-1v-2h-1v-2h-1v-17h-1v23h-1v-32h-1v18h-1v-19h-1v4h-1v28h-1v-18h-1h-1v-73h-1v1h-1h-1v3h-1v-3h-1h-1v9h-1v3h-1h-1v-6h-1v-7h-1v7h-1v7h-1v-9h-1v4h-1v-9h-1v7h-1v88h-1v10h-1v-12h-1v-2h-1v-4h-1v1h-1v-1h-1h-1v-2h-1v-8h-1v9h-1v1h-1v-1h-1v7h-1v-11h-1v-6h-1v3h-1v9h-1v-10h-1v18h-1v-21h-1v-4h-1v-3h-1v30h-1v-21h-1v-6h-1v11h-1v3h-1v-15h-1v33h-1v1h-1v-16h-1v-7h-1v-2h-1v-6h-1v30h-1v-33h-1v11h-1v-14h-1v3h-1v-10h-1v33h-1v-9h-1v-1h-1v-8h-1v-11h-1h-1v18h-1v-8h-1v2h-1v13h-1v-3h-1v-6h-1v-3h-1v7h-1v29h-1v-18h-1v-1h-1v-7h-1v-8h-1v8h-1h-1v21h-1v-30h-1v3h-1v-6h-1v16h-1v-6h-1v-7h-1v-7h-1v1h-1v-2h-1v2h-1v-16h-1v11h-1v16h-1v-25h-1v12h-1h-1v15h-1v-39h-1v14h-1v-1h-1v10h-1v-53h-1v-7h-1v12h-1v-11h-1v4h-1v9h-1v1h-1v18h-1v39h-1v-5h-1v-1h-1v42h-1v-31h-1v-59h-1v2h-1h-1v-13h-1v5h-1v-5h-1h-1h-1v39h-1v82h-1v-63h-1v-27h-1v-9h-1v-5h-1v10h-1v-51h-1h-1v1h-1v6h-1v77h-1v34h-1h-1v-98h-1v-13h-1v2h-1v-4h-1v-1h-1v-3h-1h-1v1h-1v3h-1v20h-1v-2h-1v1h-1v-1h-1v3h-1v-7h-1v-19h-1h-1v3h-1v-3h-1h-1v12h-1v87h-1v12h-1v-12h-1v23h-1v-23h-1v-3h-1v-2h-1v-6h-1v4h-1v7h-1v-24h-1v14h-1v-22h-1v-48h-1h-1v-4h-1v-8h-1v-2h-1v1h-1v-4h-1v4h-1v-3h-1h-1v6h-1v94h-1v9h-1v-5h-1v-15h-1v9h-1h-1v8h-1v-1h-1v-19h-1v17h-1v-7h-1v2h-1v8h-1v-8h-1v17h-1v-7h-1v9h-1v-3h-1v-17h-1v17h-1v-17h-1v20h-1v-17h-1v9h-1v8h-1v-6h-1v-11h-1v4h-1v-7h-1v7h-1h-1v-4h-1v-2h-1v-3h-1v21h-1v-35h-1v17h-1v-3h-1v2h-1v1h-1v-4h-1v17h-1v-13h-1v9h-1v-16h-1v1h-1v-16h-1v21h-1v-16h-1h-1v8h-1v3h-1v6h-1v1h-1v-10h-1v14h-1v-13h-1v2h-1v-2h-1h-1v22h-1v-19h-1v-13h-1v23h-1v16h-1v-27h-1v6h-1v3h-1v-2h-1v-6h-1v-22h-1v55h-1v-56h-1v26h-1v-3h-1v4h-1v1h-1v-8h-1v1h-1v-2h-1v20h-1v-2h-1v-6h-1v-14h-1v20h-1v5h-1v-2h-1v-12h-1v-14h-1v13h-1v-12h-1h-1v5h-1v-10h-1v-3h-1v6h-1v-8h-1v-72h-1v3h-1v-1h-1v5h-1v-4h-1h-1v16h-1v-6h-1v-9h-1v2h-1h-1v8h-1v2h-1v-9h-1v-6h-1v8h-1v-5h-1v99h-1v-11h-1v10h-1v5h-1v-12h-1v13h-1v-31h-1v10h-1v14h-1v-8h-1v-3h-1v6h-1v3h-1v-10h-1v13h-1v-18h-1v16h-1v5h-1v-14h-1v-9h-1v22h-1v-16h-1v2h-1v-12h-1v-26h-1v25h-1v-11h-1v32h-1v-26h-1v1h-1h-1v8h-1v14h-1v-8h-1v-1h-1v-16h-1v18h-1v17h-1v-1h-1v-34h-1v19h-1v-23h-1v12h-1v1h-1v-16h-1v-1h-1v9h-1v15h-1v12h-1v-18h-1v9h-1v6h-1v5h-1v-6h-1v8h-1v-19h-1v10h-1v-8h-1v17h-1v-18h-1v-1h-1v3h-1v2h-1v18h-1v-3h-1v-20h-1v-6h-1v17h-1v-7h-1v-4h-1v8h-1v1h-1v-5h-1v-13h-1v13h-1v-20h-1v6h-1v-4h-1v-4h-1v-2h-1v15h-1v-16h-1v5h-1v-5h-1v-47h-1v7h-1v-11h-1v1h-1v10h-1v-11h-1v1h-1v43h-1v30h-1v-11h-1v16h-1v29h-1v-35h-1v-65h-1v8h-1v1h-1v-1h-1v-7h-1v6h-1v3h-1v-11h-1v40h-1v81h-1v-63h-1v-33h-1v7h-1v-13h-1v18h-1v-57h-1v-4h-1h-1v4h-1v80h-1v34h-1h-1v-98h-1v-15h-1v-3h-1v-1h-1v4h-1v-2h-1h-1v-2h-1v8h-1v5h-1v8h-1v-1h-1v11h-1v-16h-1v-3h-1v-10h-1v-3h-1v2h-1h-1v-1h-1v16h-1v73h-1v41h-1v-9h-1v-41h-1v14h-1v7h-1v-7h-1v-1h-1v-2h-1v3h-1v-8h-1v10h-1v-18h-1v-72h-1v6h-1v5h-1v-7h-1v-6h-1v1h-1v-1h-1v-2h-1v-1h-1v-1h-1v33h-1v66h-1v3h-1v3h-1v-2h-1v-5h-1v8h-1v-1h-1h-1v-2h-1v-2h-1v-1h-1v3h-1v8h-1v6h-1v-13h-1v-5h-1v11h-1v-8h-1h-1v4h-1v-4h-1v16h-1v-15h-1v-1h-1v11h-1v-2h-1v2h-1v-29h-1v20h-1v-3h-1v10h-1v-11h-1v-21h-1v19h-1v5h-1v-3h-1v23h-1v-27h-1v3h-1v21h-1v-16h-1v-32h-1v21h-1h-1v-1h-1v-2h-1v16h-1v1h-1v-26h-1v-4h-1v-16h-1v22h-1v4h-1v7h-1v-5h-1v5h-1h-1v6h-1v13h-1v-21h-1h-1v13h-1v-10h-1h-1v12h-1v-9h-1h-1v10h-1v-27h-1v34h-1v-2h-1v-14h-1v14h-1v-8h-1v-8h-1v7h-1v-8h-1v-9h-1v8h-1v8h-1v1h-1v-10h-1v-2h-1v15h-1v-17h-1v-3h-1v5h-1v2h-1v-7h-1v16h-1v-7h-1v4h-1v-13h-1v1h-1v-18h-1v26h-1v-21h-1v-65h-1v-4h-1v12h-1v-10h-1v6h-1v-2h-1v1h-1v-2h-1v3h-1v-2h-1v-1h-1h-1v4h-1v-5h-1v9h-1v-12h-1v7h-1v83h-1v1h-1h-1v11h-1v-12h-1v15h-1h-1v-18h-1v1h-1v-3h-1v16h-1v-2h-1h-1v-22h-1v21h-1v-17h-1v15h-1v-15h-1v-3h-1v21h-1v-25h-1v15h-1v-19h-1v12h-1v-7h-1v12h-1v-10h-1v21h-1v-27h-1v4h-1v23h-1v-24h-1v8h-1v-8h-1v4h-1v-14h-1v-13h-1v4h-1v34h-1v-3h-1v-6h-1v-33h-1v21h-1v18h-1v-20h-1v-7h-1v26h-1v-11h-1v5h-1v-13h-1v23h-1v-12h-1v3h-1v29h-1v10h-1v-39h-1v5h-1v4h-1v17h-1v-10h-1v-24h-1v-7h-1v35h-1v-24h-1v5h-1v9h-1v-19h-1v8h-1v12h-1v3h-1v-22h-1v-7h-1v12h-1v5h-1v9h-1v-25h-1v1h-1v-17h-1v14h-1v12h-1v-15h-1v4h-1v4h-1v2h-1v-54h-1v-7h-1v4h-1v3h-1v5h-1v-11h-1v-1h-1v56h-1v3h-1v3h-1v-2h-1v47h-1v-43h-1v-50h-1v-6h-1v-1h-1h-1v-1h-1v4h-1v-3h-1v3h-1v35h-1v82h-1v-63h-1v-39h-1v2h-1v-2h-1v3h-1v-43h-1v-3h-1v3h-1v1h-1v80h-1v34h-1h-1v-98h-1v-16h-1v4h-1v-1h-1v-1h-1v-2h-1v-3h-1v1h-1v5h-1v7h-1v12h-1v6h-1v-10h-1v-6h-1v-6h-1v-6h-1v-3h-1v3h-1v-3h-1v1h-1v10h-1v79h-1v46h-1v-20h-1v1h-1v-29h-1v18h-1v-5h-1h-1v-11h-1v8h-1v-11h-1v16h-1v-34h-1v-61h-1v7h-1v-6h-1v-4h-1v1h-1v-1h-1v-1h-1v3h-1v-5h-1v-1h-1v52h-1v51h-1v-5h-1v3h-1v-1h-1v-10h-1v11h-1v6h-1v-6h-1h-1v10h-1v-23h-1v25h-1v-5h-1v-6h-1v-3h-1v16h-1v-5h-1v-4h-1v8h-1v-17h-1v2h-1v11h-1v-1h-1v-17h-1v6h-1v18h-1v-14h-1v7h-1v3h-1v-11h-1v7h-1v-8h-1v16h-1v-8h-1v-9h-1v15h-1v-4h-1v-16h-1v17h-1v-18h-1v11h-1v-3h-1v-6h-1v4h-1v16h-1v-24h-1v5h-1v-6h-1v-12h-1h-1v9h-1v-7h-1v10h-1v7h-1v-5h-1v-6h-1v4h-1v8h-1v14h-1v-17h-1v3h-1v-4h-1v24h-1v-12h-1v15h-1v-20h-1v-32h-1v32h-1v14h-1v-5h-1v4h-1v15h-1v-17h-1v-5h-1v-7h-1v6h-1v-10h-1v6h-1v-8h-1v5h-1v-16h-1v11h-1v15h-1v-20h-1h-1v1h-1v-2h-1v-1h-1v-17h-1v4h-1v19h-1v-4h-1v-9h-1v6h-1v3h-1v-5h-1h-1v-69h-1v2h-1v-9h-1v7h-1v-2h-1v-6h-1v10h-1v-9h-1v6h-1v-6h-1v-1h-1v11h-1v-8h-1v-3h-1v6h-1v-4h-1v-3h-1v86h-1v3h-1v-14h-1v29h-1v-7h-1v-10h-1v2h-1v-1h-1v-12h-1v11h-1h-1v10h-1v-14h-1v-1h-1v24h-1v-3h-1v-13h-1v-6h-1v5h-1v5h-1v-11h-1v-12h-1v23h-1v5h-1v-23h-1v24h-1v-24h-1v6h-1v2h-1v17h-1v-31h-1v14h-1v-8h-1v-16h-1v28h-1v-3h-1v4h-1v-7h-1v16h-1v-27h-1v15h-1v-16h-1v-11h-1v18h-1v12h-1v-24h-1v-11h-1v7h-1v7h-1v9h-1v2h-1h-1v-23h-1v46h-1v-18h-1v-7h-1v-13h-1v20h-1v8h-1v8h-1v-18h-1v13h-1v-18h-1v24h-1v-20h-1v-7h-1v-19h-1v21h-1v-14h-1v21h-1v3h-1v-11h-1v-6h-1v14h-1v-7h-1v-10h-1v7h-1v-28h-1v27h-1v-10h-1v12h-1v-1h-1v7h-1v-22h-1v-37h-1v-10h-1v5h-1v3h-1v-7h-1v7h-1v-9h-1v66h-1v-3h-1v-2h-1v46h-1v-42h-1v11h-1v-63h-1v-4h-1v-2h-1v8h-1h-1v-4h-1v-1h-1v6h-1v54h-1v57h-1v-63h-1v-18h-1v-9h-1v-14h-1v1h-1v-42h-1v1h-1v-1h-1v5h-1v79h-1v34h-1h-1v-98h-1v-14h-1v-5h-1v1h-1v2h-1h-1v-1h-1v-3h-1v10h-1v9h-1v2h-1v7h-1v-5h-1v-8h-1v-1h-1v-13h-1v2h-1v-1h-1v-2h-1h-1v25h-1v96h-1v-18h-1v1h-1v14h-1v-4h-1v-17h-1v-2h-1v7h-1v-4h-1v-3h-1v-1h-1v-7h-1v-11h-1v-69h-1v2h-1v4h-1v-9h-1v-1h-1v2h-1h-1v3h-1v-5h-1v2h-1v77h-1v25h-1v-6h-1v-1h-1v1h-1v-2h-1v12h-1v-9h-1v-1h-1h-1v6h-1v2h-1v10h-1v-1h-1v-12h-1v8h-1v-14h-1v6h-1h-1v-4h-1v7h-1v-5h-1v7h-1v-22h-1v6h-1v-7h-1v24h-1v-8h-1v-3h-1v3h-1v9h-1h-1v-29h-1v28h-1v-8h-1v-10h-1v16h-1v10h-1v-20h-1v25h-1v-13h-1v2h-1v-18h-1v14h-1v-4h-1v-12h-1v19h-1v-7h-1v-15h-1v8h-1v-21h-1v17h-1v-13h-1v-9h-1v15h-1h-1v13h-1v-1h-1v-1h-1v10h-1v-14h-1v3h-1v-1h-1v-24h-1v52h-1v-14h-1v3h-1v-17h-1v12h-1v11h-1v-23h-1v-2h-1v4h-1v21h-1v-9h-1v-14h-1v6h-1v-8h-1v-20h-1v26h-1v-19h-1v10h-1v16h-1v7h-1v-17h-1v-5h-1v-4h-1v16h-1v-17h-1v-2h-1v13h-1v4h-1v1h-1v-22h-1v-1h-1v17h-1v-1h-1v-2h-1v-89h-1v10h-1v-7h-1v8h-1v6h-1v1h-1v-5h-1v-2h-1v-6h-1v4h-1v-4h-1v-2h-1v3h-1v1h-1v-3h-1v8h-1v-3h-1v92h-1v7h-1v-11h-1v10h-1v-17h-1v-8h-1v8h-1v19h-1v-32h-1v10h-1v4h-1v1h-1v-24h-1v27h-1v-9h-1h-1v10h-1v-2h-1v-3h-1v6h-1v-12h-1v-11h-1v9h-1v-8h-1h-1v7h-1v-5h-1v16h-1v-16h-1v21h-1v7h-1v-8h-1v-17h-1v23h-1v-17h-1v-4h-1v12h-1v-50h-1v29h-1v10h-1v17h-1v-42h-1h-1v16h-1v-7h-1v5h-1v11h-1v7h-1v-20h-1v17h-1v28h-1v-21h-1v13h-1v-25h-1v13h-1v-42h-1v45h-1v-16h-1v5h-1v-1h-1v-3h-1v-21h-1v16h-1v2h-1v-2h-1h-1v22h-1v-25h-1v4h-1v-7h-1v24h-1v-25h-1v8h-1v-4h-1v-7h-1v2h-1v-4h-1v7h-1v8h-1v-10h-1v-10h-1v12h-1v9h-1v-3h-1v-62h-1h-1v-3h-1v5h-1v-3h-1v1h-1v1h-1v55h-1v1h-1v11h-1v34h-1v-45h-1v-7h-1v-36h-1v-10h-1h-1v10h-1v1h-1v-4h-1v-1h-1v6h-1v36h-1v70h-1v-63h-1v-38h-1v20h-1v-21h-1v-3h-1v-39h-1v-1h-1h-1v4h-1v80h-1v34h-1h-1v-98h-1v-16h-1v-2h-1v8h-1v-8h-1v5h-1v-6h-1v3h-1v4h-1v16h-1v-2h-1v3h-1v6h-1v-14h-1v-9h-1v-8h-1v1h-1h-1v2h-1v-1h-1v19h-1v81h-1v-4h-1v33h-1v-37h-1v11h-1v9h-1v-14h-1v-3h-1v-3h-1v-5h-1v-2h-1v1h-1v-19h-1v-56h-1v-2h-1v2h-1v-8h-1v-1h-1v-1h-1h-1h-1v-1h-1v-1h-1v98h-1v9h-1v1h-1v-7h-1v10h-1v-11h-1v1h-1v11h-1v-4h-1v-6h-1v-1h-1v-1h-1v11h-1v-12h-1v-5h-1v5h-1v1h-1v6h-1v-2h-1v2h-1v-6h-1v3h-1v16h-1v-6h-1v-7h-1v16h-1v-9h-1v-14h-1v11h-1v-2h-1v-8h-1v-1h-1v18h-1v-20h-1v9h-1v-6h-1v1h-1v15h-1v-24h-1v20h-1v9h-1v-18h-1v-9h-1v21h-1v-15h-1v12h-1v-8h-1v-17h-1v-2h-1h-1v2h-1v-10h-1v5h-1v18h-1v-6h-1v-2h-1v-2h-1v13h-1v-8h-1v15h-1v-15h-1v11h-1v9h-1v-23h-1v16h-1v-14h-1v12h-1v8h-1v-14h-1v6h-1v8h-1v1h-1v-15h-1v-4h-1v24h-1v-8h-1v2h-1v-12h-1v3h-1v-23h-1v30h-1v-12h-1v11h-1v-19h-1v-1h-1h-1v23h-1v-2h-1v-14h-1v2h-1v-5h-1v-10h-1v-1h-1v15h-1v-28h-1v10h-1v2h-1v-5h-1v-62h-1v-1h-1v2h-1v-8h-1h-1v-1h-1v11h-1v-5h-1v-6h-1v10h-1v-3h-1v-4h-1v6h-1v-3h-1v-6h-1v-2h-1v5h-1v82h-1v9h-1v5h-1v6h-1v-13h-1v-14h-1v12h-1h-1v-6h-1v1h-1v7h-1v-4h-1v-5h-1v-12h-1v31h-1v-26h-1v15h-1v-2h-1v-2h-1v3h-1v4h-1v-23h-1v10h-1v-34h-1v45h-1v-19h-1v-5h-1v10h-1h-1v7h-1v-9h-1v-5h-1v3h-1v8h-1v-12h-1h-1v14h-1v-16h-1v4h-1v4h-1v-11h-1v10h-1v2h-1v9h-1v-11h-1v-23h-1v1h-1v8h-1v8h-1v18h-1v6h-1v20h-1v-19h-1v21h-1v-14h-1v-23h-1v26h-1v-45h-1v16h-1v-23h-1v31h-1v24h-1v-27h-1h-1v7h-1v-15h-1h-1v20h-1v-1h-1v-18h-1v15h-1v-8h-1v12h-1v-39h-1v24h-1v-3h-1v-11h-1v7h-1v9h-1v-18h-1v23h-1v-26h-1v4h-1v-21h-1v-32h-1v7h-1v5h-1v-12h-1v7h-1v-4h-1v-4h-1v78h-1v-14h-1v14h-1v30h-1v-24h-1v-40h-1v-36h-1v5h-1v1h-1v2h-1v-8h-1h-1v12h-1Z" fill="#274036"/><path d="M507 920V880h1v5h1v4h1h1v-3h1v-4h1v-3h1v-27h1v-30h1v-32h1v41h1v-6h1h1v71h1v1h1v-6h1h1v5h1v-7h1v4h1v-23h1v-32h1h1v7h1v-1h1v-3h1v8h1v-17h1v7h1v-21h1v10h1v-18h1v19h1v-15h1v19h1v-12h1v-11h1v28h1v-6h1v-17h1v43h1v-40h1v-5h1v16h1v-16h1v10h1v-9h1v5h1v28h1v-23h1v16h1v-13h1v-15h1v12h1v-18h1v17h1v18h1v-2h1v-14h1v36h1v-35h1v-4h1v-4h1v23h1v-30h1v19h1v-2h1v2h1v8h1v13h1v-14h1v-2h1v-4h1v5h1v-12h1v-6h1v14h1v2h1v4h1v-17h1v9h1v12h1v-16h1v-7h1v7h1v-5h1v-4h1v-6h1v-1h1v10h1v-1h1v-7h1v5h1v1h1v-13h1v14h1v2h1v-6h1v3h1v-1h1v-1h1v-9h1v-1h1v9h1v82h1v10h1v-9h1v-2h1v10h1v-5h1v6h1v-12h1v2h1v7h1v-10h1v13h1v-5h1v3h1v-5h1v-1h1v7h1v-60h1v-35h1v64h1v-45h1v11h1v-3h1v-5h1v1h1v3h1v-16h1v-13h1v7h1v18h1v-15h1v-4h1v4h1v10h1v8h1v-27h1v-2h1v17h1v-17h1v4h1v8h1v-1h1h1v1h1v-14h1v1h1v14h1v-5h1v2h1h1v-16h1v17h1v-10h1v-4h1v4h1v14h1v-2h1v-19h1v9h1h1v9h1v-8h1v18h1v6h1v9h1v-5h1v13h1v-24h1v-3h1h1v-11h1v-10h1v10h1v4h1v-13h1v5h1v1h1v5h1h1v-9h1v8h1v-6h1v3h1v-3h1h1v5h1v-4h1v2h1v-4h1v15h1v-9h1v2h1v-6h1v-7h1v5h1v-2h1v7h1v2h1v-5h1v6h1v-3h1v8h1v-11h1v1h1v-11h1v7h1v7h1v-4h1v5h1v-2h1h1v-8h1v8h1v2h1v-6h1v102h1v-1h1v1h1v2h1v-4h1v1h1v1h1v-17h1v-14h1v29h1v-57h1v-30h1v8h1v-6h1v-7h1v16h1v-22h1v-9h1v5h1v1h1h1v-14h1v18h1v73h1v30h1h1v-4h1v3h1v-2h1v-9h1v-10h1v-2h1v-1h1h1v10h1v13h1v5h1h1h1h1h1h1v-12h1v-8h1v-90h1h1v31h1v63h1v14h1h1h1v-46h1v-1h1v2h1v-4h1v-31h1v-61h1v80h1v30h1v3h1h1v-3h1v-3h1v6h1v-3h1v-4h1v-43h1v-18h1v-30h1v28h1v27h1v-15h1v64h1v-2h1v1h1v2h1v1h1v-6h1v-2h1v-35h1v2h1v-22h1v20h1v-10h1v-18h1v20h1v-10h1v-3h1v11h1v-15h1v1h1v9h1h1v-14h1v15h1v-13h1v11h1v-3h1v19h1v-33h1v-1h1v1h1v2h1v-12h1v4h1v7h1v16h1v-9h1v-24h1v5h1v19h1v14h1v-28h1v-1h1v13h1v15h1v-4h1v11h1v-7h1v-11h1v15h1v-4h1v-10h1v-16h1v19h1v5h1v-15h1v-5h1v38h1v-36h1v11h1v4h1v1h1v-8h1v5h1v2h1v1h1v6h1v-3h1v-19h1v1h1v13h1v-17h1v10h1v-4h1v10h1v-15h1v2h1v5h1v-7h1v-6h1v-10h1v15h1v-3h1v3h1v-13h1v9h1v1h1v-5h1v-2h1v8h1v-8h1v11h1v81h1v-4h1v3h1v-5h1h1v10h1v-2h1h1h1v1h1v-4h1v5h1v-7h1v2h1v9h1v-1h1v1h1v-73h1v15h1v-7h1v-16h1v17h1v-26h1v11h1v-24h1v32h1v-8h1v-21h1v26h1v-29h1v8h1v9h1v5h1v-13h1v11h1h1v-15h1v9h1h1v-16h1v18h1v-16h1v9h1v7h1v-19h1v22h1v-4h1v-16h1v4h1v1h1v-3h1h1v12h1v-2h1v3h1v16h1v-36h1v17h1v5h1v1h1v-7h1v6h1v15h1v7h1v5h1v-16h1v-18h1v16h1v-10h1h1v-1h1v3h1v-4h1v-17h1v16h1v-3h1v1h1v9h1v-11h1v-1h1v3h1v-9h1v9h1v-14h1v25h1v-1h1v-22h1v20h1v-14h1v6h1h1v-10h1v9h1v-3h1v1h1v7h1v-8h1v-11h1v8h1v6h1v-1h1v2h1v-11h1v-1h1v9h1v4h1v-1h1v-7h1v5h1v-1h1v-2h1v3h1v2h1v-9h1v24h1v82h1v2h1h1v-2h1h1v-5h1h1v-15h1v-12h1v29h1v-69h1v-22h1v1h1v4h1v-15h1v6h1v-7h1v22h1v-16h1v-12h1v-7h1v-5h1v17h1v82h1v26h1v-2h1h1v1h1v1h1v-8h1v-7h1v-6h1v-8h1v4h1v14h1v6h1v8h1v-1h1v2h1v-2h1v1h1h1v-17h1v-2h1v-90h1h1v31h1v67h1v9h1h1h1v-51h1v-3h1v10h1v-1h1v-34h1v-61h1v80h1v35h1v-7h1v5h1v-5h1v-2h1v-1h1v4h1v-1h1v-71h1v16h1v-38h1v34h1v6h1v17h1v47h1v3h1v-1h1v-2h1v2h1v-7h1h1v-31h1v-12h1v6h1v-14h1v8h1v-4h1v4h1v-3h1v-20h1v-9h1v30h1v-3h1v-10h1v-8h1v37h1v-39h1v-12h1v27h1v-15h1v-20h1v17h1v11h1v16h1v-25h1v10h1v-5h1v-5h1h1v-21h1v20h1v-7h1v9h1v-3h1v-1h1v-8h1v4h1v25h1v14h1v-16h1v10h1v-9h1v-14h1v13h1v-24h1v10h1v16h1v-10h1v10h1v-7h1v-15h1v2h1v-3h1v16h1v-1h1v-6h1v11h1v-15h1v6h1v10h1v4h1v-18h1v12h1v3h1v-25h1v-2h1v14h1v-3h1v-3h1v-12h1v5h1v7h1v-3h1v4h1v2h1v-13h1v5h1v11h1v-15h1v-3h1v1h1v7h1v8h1v-7h1v-5h1v98h1v-10h1v7h1v-2h1v2h1v-2h1h1v-12h1v9h1v6h1v-1h1h1h1v-8h1v-1h1v11h1v-9h1v-25h1v-50h1v17h1v-1h1v-19h1v-2h1v15h1v1h1v-17h1v4h1v13h1v12h1v10h1v-41h1v5h1v2h1v5h1v20h1v-23h1v-1h1v-16h1v17h1v-3h1v-5h1v3h1v3h1v-5h1v-8h1v4h1v15h1v-12h1v-2h1v-7h1v12h1v-6h1v-13h1v15h1v6h1v8h1v-25h1v10h1v6h1v-17h1v25h1v3h1h1v3h1v2h1v-8h1v13h1v-13h1v-5h1v1h1v10h1v-13h1v9h1v-31h1v19h1v-9h1v3h1v1h1v8h1v-4h1v-6h1v-8h1v5h1v6h1v-11h1v7h1v7h1v-8h1v3h1v-6h1h1v8h1v1h1v-10h1v10h1v10h1v-20h1v-3h1v11h1v1h1v2h1v-2h1v-3h1v4h1v1h1v-2h1v2h1v-11h1v10h1v-7h1v6h1v-6h1v12h1v-5h1v43h1v55h1v-2h1v2h1v-3h1h1h1v1h1v-20h1v-3h1v21h1v-70h1v-17h1v-3h1v-4h1v6h1v-4h1v16h1v-29h1v7h1v-2h1v-6h1v-8h1v20h1v87h1v10h1v1h1v2h1v-3h1v2h1v-12h1v-6h1v-10h1v2h1v1h1v14h1v10h1v5h1h1v-1h1v-1h1h1v2h1v-12h1v-8h1v-90h1h1v31h1v62h1v12h1v3h1v-3h1v-38h1v-3h1v-15h1v13h1v-34h1v-61h1v80h1v29h1v4h1v-3h1h1v5h1v-6h1v3h1v-6h1v-75h1v-16h1v37h1v7h1v12h1v-10h1v59h1v1h1v-1h1v1h1v-1h1v-3h1v3h1v-37h1v-3h1v-4h1v3h1v-1h1v-3h1v-1h1v-30h1v-3h1v29h1v-2h1v-15h1v23h1v-17h1v-6h1h1v-26h1v25h1v-15h1v-4h1v27h1v-6h1v1h1v-14h1v11h1v1h1v-12h1v11h1v-13h1v3h1v11h1v-8h1v-10h1v12h1v-2h1v12h1v10h1v-2h1v-11h1v-2h1v14h1v-23h1v17h1v-8h1v-10h1v5h1v-5h1v21h1v-5h1v5h1v-8h1v3h1v-7h1v2h1v-4h1v12h1h1v2h1v-12h1v-6h1v1h1v21h1v-5h1v-8h1v-3h1v-12h1v4h1v-1h1v2h1v-15h1v22h1v-17h1v3h1v5h1h1v-5h1v-4h1v-3h1v12h1v-8h1v7h1h1v-9h1v8h1v94h1v-8h1v-2h1h1v8h1v-2h1v-6h1v3h1v-10h1v14h1h1v-4h1v3h1v2h1v-5h1v5h1v1h1v-68h1v-27h1v9h1v-14h1v21h1v12h1v-13h1v8h1v3h1v-7h1v-27h1v6h1v9h1v6h1v-18h1v18h1v-2h1v-18h1v8h1v-12h1v19h1v19h1v-17h1v-18h1v11h1v-13h1v26h1v5h1v-15h1h1v-11h1v-5h1v9h1v16h1v-12h1v-4h1v9h1v2h1v17h1v-18h1v-7h1v-13h1v26h1v-1h1v4h1v-15h1v17h1v18h1v-17h1h1v-24h1v5h1v6h1v-10h1v14h1v-17h1v11h1h1v-11h1v8h1v-14h1v6h1v6h1v-1h1v-11h1v13h1v-1h1v-5h1v-1h1v-6h1v6h1v1h1v-5h1v8h1v-2h1v3h1h1v1h1v-2h1v-7h1v7h1v-12h1v4h1v9h1v-1h1v-12h1v13h1v-2h1v-1h1h1v2h1v-8h1v16h1v-5h1h1v13h1v-18h1v71h1v34h1v-5h1v3h1v-1h1v1h1v-2h1v-1h1v-30h1v10h1v19h1v-67h1v-22h1v1h1v-5h1h1v1h1v-9h1v1h1v-9h1v-5h1v6h1v-3h1v14h1v94h1v9h1h1v-2h1v1h1v1h1v-12h1v-10h1v-2h1v-3h1v-4h1v21h1v10h1v3h1v-2h1v2h1v-1h1v1h1h1v-14h1v-6h1v-90h1h1v31h1v62h1v15h1v-1h1v1h1v-42h1v-10h1v3h1v2h1v-33h1v-61h1v80h1v29h1v2h1v3h1v-3h1v1h1v-7h1v2h1v4h1v-76h1v-20h1v49h1v-11h1v-8h1v58h1v17h1v1h1v-8h1v8h1v-1h1h1v-5h1v-32h1v-17h1v7h1v-1h1v-1h1h1v-11h1v-2h1v12h1v-1h1v-8h1v-7h1v4h1v-21h1v22h1v2h1v-8h1v-20h1v-5h1v10h1v34h1v-15h1v-2h1v-3h1v1h1v-4h1v2h1v-19h1v-1h1v37h1v-36h1v11h1v-1h1v-9h1v4h1v13h1v15h1v2h1v-2h1v-8h1v11h1v-10h1v9h1v-14h1v-6h1v-5h1v2h1v6h1v14h1v-10h1v-15h1v15h1v6h1v-6h1v13h1v-6h1v-16h1v17h1v-1h1v-17h1v10h1v10h1v-6h1v-2h1v-7h1v-16h1v7h1v1h1v1h1v-2h1v2h1v-2h1v-8h1v9h1v1h1v2h1v-2h1v-4h1v-3h1v6h1v-11h1v9h1v-1h1v-1h1v86h1v7h1v-9h1v9h1v-4h1h1v-2h1h1v6h1v-7h1v8h1v-6h1v8h1v-9h1v4h1h1h1v-91h1v30h1v-34h1v36h1v1h1v-4h1v-15h1v33h1v-33h1v9h1v1h1v-1h1v-23h1v24h1v-15h1v9h1v-2h1v-6h1v-9h1v-4h1v-4h1v16h1v19h1v-19h1v-11h1v5h1v-12h1v1h1v2h1v15h1v-19h1v16h1h1v14h1v-15h1v-17h1v7h1v21h1v-10h1v9h1v-25h1v17h1v6h1v-10h1v5h1v19h1v16h1v-4h1v-17h1v-1h1v-7h1v-6h1h1v-10h1v-1h1v10h1v-18h1h1v15h1v7h1v-9h1v2h1h1v-16h1h1v12h1v-10h1v14h1v-1h1v-9h1v9h1h1h1h1h1v-12h1v7h1v2h1v3h1v11h1v-25h1v10h1v-2h1v-8h1v18h1v-5h1v-7h1v5h1v-11h1v14h1h1v-2h1v3h1v-14h1v-3h1v11h1v-6h1v105h1v6h1v-3h1v-3h1v4h1v-2h1v-4h1v-1h1v-19h1v1h1v24h1v-72h1v-25h1v-2h1v4h1v5h1v-15h1v12h1v-13h1v-1h1v-11h1v10h1v-2h1v17h1v86h1v10h1v-1h1v1h1h1h1v-16h1v-6h1v-2h1h1v4h1v8h1v11h1v4h1h1h1v-2h1v2h1v-1h1v-13h1v-6h1v-90h1h1v31h1v67h1v10h1h1v-1h1v-41h1v-1h1v-4h1v4h1v-37h1v-61h1v80h1v34h1v1h1h1v-1h1v-5h1v-5h1v4h1v5h1v-60h1v-38h1v20h1v16h1v16h1v30h1v24h1v-3h1v-5h1v7h1v-2h1v-1h1v-2h1v-35h1v-1h1v-2h1v1h1v2h1v-4h1v-31h1v11h1v-8h1v23h1v-5h1h1v-16h1v15h1v-16h1v9h1v4h1v-12h1v33h1v-40h1v15h1v-2h1v-27h1v-2h1v26h1v-4h1v-20h1v25h1v-3h1v-12h1v3h1v-8h1v6h1v8h1v5h1v-5h1v22h1v-5h1v3h1v-3h1v-11h1v-14h1v39h1v-13h1v-18h1v29h1v-24h1v8h1v2h1v-1h1v-16h1v15h1v-12h1v-7h1v18h1v-7h1v-9h1v6h1v13h1v-8h1v10h1v10h1v-23h1v4h1v-11h1v-5h1h1v7h1v-14h1v13h1v-8h1v-7h1v6h1v-4h1v1h1v9h1v-10h1v12h1v-12h1v8h1v-8h1v3h1v13h1v-6h1v90h1h1v-7h1h1v-4h1v6h1v3h1h1v-2h1v2h1v-4h1h1v3h1v3h1v-5h1h1v2h1v-62h1v-30h1v-4h1v18h1v10h1v3h1v2h1v15h1v-39h1v17h1v-3h1v-1h1v-18h1v40h1v-47h1v-4h1v24h1v9h1v-15h1v8h1v-4h1h1v-18h1h1v10h1v4h1v-1h1v-2h1v2h1v8h1v-19h1v-7h1v32h1v-20h1v2h1v-6h1v-1h1v13h1v17h1v-20h1v10h1v-9h1v8h1v-22h1v27h1v2h1v9h1v-7h1v-14h1v3h1v2h1v-4h1v-9h1v1h1v-9h1v2h1v-2h1v3h1v8h1v-1h1v-2h1v-1h1v5h1v-17h1v5h1v9h1v-11h1v11h1v-2h1v-9h1v6h1v4h1h1v-3h1v4h1v-10h1v12h1v-13h1v-2h1v-2h1v1h1v13h1v1h1h1v-1h1v-11h1v10h1v2h1v-6h1v6h1h1v-1h1h1v-7h1v7h1v-10h1v18h1v92h1h1v-1h1v-3h1v3h1v-4h1v2h1v-7h1v-17h1v-5h1v28h1v-74h1v-12h1v-12h1v11h1v-7h1v-1h1v3h1v-5h1v-1h1v-7h1v-1h1v3h1v3h1v102h1v1h1h1v2h1v-2h1v1h1v-7h1v-11h1v-3h1v-3h1v3h1v4h1v20h1v1h1h1h1v-1h1v1h1v-1h1v-19h1v-90h1h1v31h1v61h1v6h1v8h1v1h1v1h1v-42h1v-11h1v-3h1v8h1v-32h1v-61h1v80h1V984h-1v79h-1v-60h-1v-14h-1v-1h-1v-20h-1v8h-1v-52h-1h-1v2h-1v4h-1v4h-1v75h-1v35h-1h-1v-99h-1v-17h-1v1h-1v-1h-1v-2h-1v-1h-1h-1h-1v25h-1v-4h-1h-1v9h-1v-4h-1v-15h-1v-12h-1v1h-1v-1h-1v1h-1v-1h-1v6h-1v88h-1v25h-1v8h-1v-28h-1v-15h-1v12h-1v-2h-1v-2h-1v13h-1v-19h-1v1h-1v-2h-1v-13h-1v-61h-1v3h-1v-1h-1v-5h-1v1h-1v-1h-1v-5h-1v5h-1v-3h-1h-1v-4h-1v99h-1v1h-1v4h-1v8h-1v-11h-1v1h-1v4h-1v3h-1v-7h-1v7h-1v-10h-1v5h-1v11h-1v-4h-1v-13h-1v2h-1v-6h-1v6h-1v7h-1v-5h-1v15h-1v-26h-1v10h-1v4h-1v-5h-1v13h-1v-14h-1v20h-1v-4h-1v-12h-1v-2h-1v-5h-1v8h-1v-3h-1v6h-1v-8h-1v-1h-1v-1h-1v1h-1v-3h-1v2h-1v22h-1v-18h-1v4h-1v-9h-1v-3h-1v10h-1v-8h-1v-14h-1v10h-1v-11h-1v15h-1v-18h-1v19h-1v4h-1v3h-1v5h-1v-17h-1v1h-1h-1v15h-1v6h-1v5h-1v1h-1v-10h-1v6h-1v-7h-1v-10h-1v33h-1v-38h-1v4h-1v-1h-1v29h-1v-7h-1v1h-1v-26h-1v20h-1v-19h-1v2h-1h-1v11h-1v-4h-1v1h-1v8h-1v-17h-1v-8h-1v6h-1v-7h-1v2h-1v15h-1v-18h-1v9h-1v-21h-1v26h-1v-21h-1v20h-1v-23h-1v-68h-1v-1h-1h-1v5h-1v10h-1h-1v-14h-1v17h-1h-1v-16h-1v-1h-1v7h-1v2h-1v-4h-1v-6h-1v4h-1v-4h-1v89h-1v3h-1v-5h-1v11h-1v-2h-1v1h-1v-7h-1v9h-1v-4h-1v11h-1v-20h-1v20h-1v-36h-1v20h-1v10h-1v-14h-1h-1v-21h-1v13h-1v-1h-1v17h-1v-19h-1h-1v10h-1v-11h-1h-1v-4h-1v12h-1v-35h-1v38h-1v-2h-1v-35h-1v-3h-1v61h-1v-35h-1v22h-1v-15h-1v-6h-1v6h-1v13h-1v-28h-1v34h-1v-31h-1v10h-1v-11h-1v-4h-1v-2h-1v-3h-1v25h-1v7h-1v21h-1v-5h-1v-8h-1v4h-1v22h-1v-36h-1v11h-1v-17h-1v8h-1v-4h-1v-5h-1v14h-1v-14h-1v3h-1v-7h-1v15h-1v-12h-1v-7h-1v15h-1v1h-1v-1h-1v-4h-1v-18h-1v17h-1v-22h-1v7h-1v12h-1v5h-1v-12h-1v-8h-1v-1h-1v-1h-1h-1v2h-1v-51h-1v6h-1v-2h-1v-5h-1v8h-1v7h-1v-11h-1v41h-1v10h-1v18h-1v-8h-1v40h-1v-37h-1v-60h-1v-1h-1v11h-1v-7h-1v-4h-1v11h-1v-1h-1v-4h-1v37h-1v71h-1v-60h-1v-8h-1v-26h-1v10h-1v-2h-1v-50h-1v-3h-1h-1v7h-1v78h-1v35h-1h-1v-99h-1v-17h-1v3h-1h-1v-6h-1v4h-1v-1h-1v-2h-1h-1v12h-1v11h-1v1h-1v-6h-1v-5h-1v-1h-1v-14h-1h-1v2h-1h-1v-2h-1v7h-1v102h-1v-5h-1v-4h-1v-5h-1v-2h-1v6h-1v13h-1v-15h-1v2h-1v-5h-1v11h-1v-16h-1v-6h-1v-65h-1v-6h-1h-1v-6h-1v-2h-1v-1h-1v6h-1v-6h-1v-1h-1v-1h-1v6h-1v97h-1v-8h-1v16h-1v-11h-1h-1v8h-1v-7h-1v13h-1v-13h-1v-8h-1v10h-1v-16h-1v5h-1v18h-1v-8h-1v-1h-1v3h-1v-8h-1v-12h-1v23h-1v-12h-1v12h-1v5h-1v-8h-1v-3h-1v-6h-1v4h-1v5h-1v11h-1v-6h-1v-17h-1v27h-1v-11h-1v-5h-1v8h-1v-5h-1v-6h-1v25h-1v-29h-1v3h-1v-12h-1v1h-1v10h-1v9h-1v-9h-1v5h-1v-32h-1v20h-1v3h-1v-10h-1v10h-1v-9h-1v10h-1v8h-1v-12h-1v7h-1v3h-1v-25h-1v33h-1v-6h-1v11h-1v-20h-1h-1v1h-1v-11h-1v12h-1v17h-1v18h-1v-38h-1v6h-1v29h-1v-35h-1v1h-1h-1h-1v-1h-1v23h-1v-8h-1v-4h-1v12h-1v-28h-1v15h-1v15h-1v-25h-1v9h-1v-9h-1v14h-1v-38h-1v18h-1v9h-1v-26h-1v13h-1v4h-1h-1v-2h-1v-24h-1v15h-1v-66h-1v3h-1v-3h-1v3h-1v-2h-1v11h-1v-13h-1v3h-1v1h-1v-5h-1v4h-1v4h-1v5h-1v-6h-1v-6h-1v5h-1v-8h-1v102h-1v-13h-1v7h-1v-6h-1v11h-1v-14h-1v20h-1v-10h-1v-9h-1v3h-1v-5h-1v16h-1v-23h-1v16h-1v7h-1v-21h-1v1h-1v-2h-1v6h-1v18h-1v-26h-1v-4h-1v7h-1v-12h-1v-13h-1v46h-1v-52h-1v37h-1v-15h-1v-23h-1v15h-1v32h-1v-16h-1v-3h-1v-6h-1v18h-1v5h-1v-9h-1v8h-1v4h-1v-26h-1v25h-1v-21h-1h-1v-11h-1h-1v-7h-1v34h-1v-13h-1v15h-1v3h-1v-5h-1v18h-1v-9h-1v7h-1v-4h-1v7h-1v-28h-1v-30h-1v29h-1v20h-1v7h-1v-32h-1v3h-1v9h-1v-13h-1v5h-1v-6h-1v-1h-1v-1h-1v-15h-1v27h-1v-15h-1v18h-1v-20h-1v24h-1v-22h-1v9h-1v10h-1v-19h-1v13h-1v-3h-1v2h-1v-20h-1v-50h-1v4h-1v-2h-1v-2h-1v-1h-1v11h-1v2h-1v39h-1v15h-1h-1v3h-1v36h-1v-33h-1v-63h-1v3h-1v4h-1v-10h-1v1h-1v-1h-1v13h-1v-11h-1v34h-1v79h-1v-60h-1v-31h-1v13h-1v-5h-1v-7h-1v-47h-1v-2h-1h-1v11h-1v74h-1v35h-1h-1v-99h-1v-16h-1v-4h-1v2h-1v-2h-1h-1v3h-1h-1v5h-1v6h-1v7h-1v-1h-1v4h-1v-7h-1v-4h-1v-10h-1v-2h-1v-2h-1h-1h-1v11h-1v98h-1v8h-1v5h-1v-11h-1v-2h-1v-2h-1v-7h-1v11h-1v-14h-1v1h-1v10h-1v-5h-1v-50h-1v-42h-1v2h-1v-2h-1v-4h-1v-1h-1v1h-1v1h-1v-6h-1v4h-1v-5h-1v34h-1v75h-1v-15h-1v9h-1v-3h-1v9h-1v-8h-1v4h-1v-3h-1h-1v5h-1v-6h-1v1h-1v-2h-1v3h-1v3h-1v8h-1v-18h-1v5h-1v8h-1v-3h-1v4h-1v-5h-1v-3h-1v-1h-1v-1h-1v11h-1v5h-1v-14h-1v20h-1v-15h-1v2h-1h-1v13h-1v-24h-1v5h-1v-4h-1v9h-1v-11h-1v26h-1v-19h-1v9h-1v-17h-1v23h-1v-19h-1v-24h-1v-4h-1v38h-1v-11h-1v-13h-1v-6h-1v-3h-1v10h-1v4h-1v-5h-1v-13h-1v37h-1v-17h-1v7h-1v13h-1v-20h-1v22h-1v-22h-1v26h-1v-50h-1v38h-1v-14h-1v8h-1v21h-1v6h-1v-19h-1v-15h-1v1h-1v29h-1v-53h-1v49h-1v-25h-1v18h-1v-18h-1v8h-1v5h-1v-15h-1v17h-1v-3h-1v4h-1v-5h-1v-15h-1v-9h-1v12h-1v-9h-1v-5h-1v16h-1v-13h-1v-1h-1v17h-1v-17h-1v-22h-1v34h-1v-86h-1v5h-1v5h-1v-10h-1v6h-1v-3h-1v-4h-1v10h-1v-6h-1v-2h-1v1h-1v3h-1v5h-1v-11h-1v10h-1v-5h-1v-6h-1v89h-1v3h-1v-3h-1h-1v4h-1v-12h-1v8h-1h-1v14h-1v6h-1v-16h-1v6h-1v7h-1v-11h-1v5h-1v-4h-1v-15h-1h-1v-2h-1h-1v1h-1v10h-1v-5h-1v-15h-1v19h-1h-1v-13h-1v4h-1v24h-1v-31h-1v-2h-1v-5h-1v-9h-1v13h-1h-1v3h-1v13h-1v-11h-1v23h-1v-3h-1v-1h-1v-24h-1v-19h-1v46h-1v-34h-1h-1v-8h-1v34h-1v-18h-1v9h-1v11h-1v-9h-1v-31h-1v37h-1v24h-1v-31h-1v18h-1v-12h-1v-1h-1v-5h-1v29h-1v-17h-1v-22h-1v10h-1v12h-1v-12h-1v-7h-1v10h-1v-9h-1v21h-1v-37h-1v11h-1h-1v3h-1v-6h-1v1h-1v-3h-1v19h-1v-15h-1v16h-1v-9h-1v-2h-1v-6h-1v4h-1v-60h-1v3h-1v5h-1v-10h-1v2h-1v-1h-1v4h-1v41h-1v18h-1v1h-1v5h-1v36h-1v-22h-1v-68h-1v-5h-1v3h-1v-6h-1v8h-1v-6h-1v2h-1v-5h-1v59h-1v56h-1v-60h-1v-34h-1v3h-1v-5h-1h-1v-40h-1v-2h-1h-1v4h-1v80h-1v35h-1h-1v-99h-1v-16h-1v-2h-1v4h-1v-3h-1v-2h-1v4h-1v-5h-1v4h-1v10h-1v14h-1v-7h-1v12h-1v-11h-1v-6h-1v-15h-1v-1h-1v2h-1h-1v-2h-1v14h-1v82h-1v5h-1v18h-1v-3h-1v-18h-1v-1h-1v-1h-1v14h-1v-22h-1v14h-1v-16h-1v1h-1v-7h-1v-75h-1v15h-1v-10h-1v-2h-1v-4h-1v-2h-1v5h-1v-6h-1v1h-1v-1h-1v51h-1v53h-1v1h-1v-7h-1v4h-1v5h-1v-9h-1v1h-1v10h-1v-7h-1v5h-1v4h-1v-8h-1v6h-1v4h-1v-13h-1v5h-1h-1v11h-1v-10h-1v-1h-1v-3h-1v-2h-1v-16h-1v18h-1v3h-1v-6h-1v3h-1v2h-1v-5h-1v20h-1v-21h-1v18h-1v-15h-1v-3h-1v1h-1v2h-1v-2h-1v2h-1v-5h-1v7h-1v-4h-1v-4h-1v7h-1v9h-1v-20h-1h-1v9h-1v-11h-1v-12h-1v2h-1v1h-1v6h-1v18h-1v-19h-1v21h-1v-17h-1v23h-1v-3h-1v6h-1v-19h-1v-5h-1v5h-1v7h-1v9h-1v10h-1v-52h-1v25h-1v2h-1v-2h-1v6h-1v24h-1v-32h-1v10h-1v14h-1v-47h-1v24h-1v-3h-1v26h-1v2h-1v-27h-1v14h-1v10h-1v-13h-1v-2h-1v10h-1v-18h-1v-7h-1v10h-1v-10h-1v8h-1v-8h-1v7h-1v-8h-1v-1h-1v-8h-1v15h-1v-18h-1v-66h-1v5h-1v-2h-1v9h-1v-6h-1v3h-1v-8h-1v6h-1v1h-1v-4h-1v10h-1v-11h-1v2h-1h-1v3h-1v1h-1v-11h-1v105h-1v-15h-1v-1h-1v3h-1v1h-1v14h-1v-32h-1v12h-1v18h-1v-16h-1v-1h-1v1h-1v-4h-1v20h-1v-12h-1v-8h-1v-3h-1v-1h-1v3h-1v-2h-1v-4h-1v-28h-1v22h-1v9h-1v18h-1v-45h-1v18h-1v15h-1v4h-1v-8h-1v-12h-1v29h-1v-3h-1v-24h-1v23h-1v-26h-1v6h-1v-5h-1v16h-1v16h-1v-21h-1v-15h-1v32h-1v-32h-1v28h-1v-35h-1v-5h-1v25h-1v-7h-1v20h-1v9h-1v-22h-1v15h-1v23h-1v-14h-1v7h-1v-21h-1v-22h-1v12h-1v-1h-1v2h-1v-4h-1v10h-1v1h-1v-12h-1v-23h-1v22h-1h-1h-1v18h-1v-5h-1v-11h-1v-6h-1v9h-1v-29h-1v23h-1v-14h-1v6h-1v-10h-1v17h-1v2h-1v7h-1h-1v-9h-1v-63h-1v1h-1v7h-1v-1h-1v-2h-1v5h-1v-10h-1v63h-1h-1v-12h-1v55h-1v-36h-1v-5h-1v-57h-1v2h-1v10h-1v-7h-1v8h-1v-14h-1v10h-1v4h-1v33h-1v68h-1v-60h-1v-19h-1v-17h-1v-2h-1v10h-1v-47h-1v-4h-1h-1v9h-1v76h-1v35h-1h-1v-99h-1v-12h-1v1h-1v-5h-1v-2h-1v1h-1v-3h-1h-1v4h-1v12h-1v11h-1v-7h-1v7h-1v-9h-1v-10h-1v-8h-1v-1h-1v1h-1v2h-1v-3h-1v26h-1v49h-1v34h-1v-12h-1h-1v10h-1v-11h-1v9h-1v-13h-1v16h-1v-10h-1h-1v-9h-1v-18h-1v-65h-1v12h-1v-8h-1v-6h-1h-1v4h-1v-4h-1v-1h-1v2h-1v-4h-1v81h-1v13h-1v10h-1v-13h-1v11h-1v-2h-1h-1v4h-1v-4h-1v1h-1v8h-1v-5h-1v-15h-1v28h-1v-15h-1v13h-1h-1v-17h-1v15h-1v6h-1v-9h-1v-9h-1v-1h-1v17h-1v-15h-1v7h-1v1h-1v-18h-1v24h-1v-14h-1v6h-1v3h-1h-1v-12h-1v11h-1v10h-1v5h-1v-10h-1v-12h-1v6h-1v-8h-1v-6h-1v-3h-1v1h-1v3h-1v16h-1v-21h-1v3h-1h-1v-1h-1v-14h-1h-1v-2h-1v17h-1v3h-1v-3h-1v12h-1v-15h-1v-1h-1v17h-1v5h-1h-1v-24h-1v23h-1v-17h-1v11h-1v-2h-1v-5h-1v7h-1v9h-1v4h-1v-25h-1v34h-1v-13h-1v-1h-1v-13h-1v7h-1v13h-1v-21h-1v6h-1v-11h-1v-21h-1v21h-1v6h-1h-1h-1v13h-1v-10h-1v-15h-1v-6h-1v3h-1v-2h-1h-1v8h-1v-13h-1v19h-1v-13h-1v-4h-1v-65h-1v3h-1v-10h-1h-1v9h-1v-10h-1v7h-1v-5h-1v9h-1v2h-1v2h-1v-13h-1h-1v-1h-1h-1v5h-1v-6h-1v93h-1v-2h-1v-13h-1v29h-1v-14h-1v-6h-1v3h-1v-3h-1v7h-1v-23h-1v15h-1v12h-1v-14h-1v8h-1v-5h-1v-7h-1v11h-1v1h-1v-13h-1v-4h-1v-1h-1v-15h-1v24h-1v-12h-1v10h-1v-35h-1v42h-1v-25h-1v9h-1v-1h-1v1h-1v12h-1v10h-1v-10h-1v-26h-1v11h-1v-23h-1v22h-1v-1h-1v-10h-1v17h-1v-7h-1v3h-1v-1h-1v-17h-1v11h-1v3h-1v-1h-1v26h-1v-16h-1v18h-1v-12h-1v34h-1v-13h-1v18h-1v-41h-1v19h-1v-5h-1v-34h-1v23h-1v11h-1v-14h-1v5h-1v12h-1v-19h-1v-2h-1v-3h-1h-1v16h-1v-29h-1v3h-1v14h-1v3h-1v-12h-1v13h-1v-7h-1v9h-1v-10h-1v-10h-1v1h-1v-3h-1v24h-1v-40h-1v8h-1v-42h-1v5h-1v-5h-1v14h-1v-3h-1v-1h-1v4h-1v59h-1v2h-1v-14h-1v44h-1v-41h-1v8h-1v-63h-1v4h-1v-6h-1v6h-1v-5h-1v-1h-1h-1v7h-1v48h-1v59h-1v-60h-1v-19h-1v-6h-1v-3h-1v-9h-1v-40h-1v2h-1v-3h-1v2h-1v82h-1v35h-1h-1v-99h-1v-10h-1v-8h-1v7h-1v-9h-1v2h-1v-1h-1v-1h-1v7h-1v20h-1v-5h-1v2h-1v4h-1v-7h-1v-14h-1v-6h-1v-2h-1v3h-1v-3h-1h-1v22h-1v65h-1v44h-1v-23h-1v-10h-1h-1v15h-1v-19h-1v-2h-1v-1h-1v18h-1v-19h-1v12h-1v-27h-1v-56h-1v-1h-1v-7h-1v-7h-1h-1h-1v4h-1v-1h-1v-5h-1v2h-1v96h-1v13h-1v-13h-1v6h-1v4h-1v5h-1h-1v1h-1v-11h-1v10h-1v-10h-1h-1v10h-1v-14h-1v5h-1v-5h-1v-2h-1v19h-1v-17h-1v2h-1v-16h-1v28h-1v-7h-1v5h-1v3h-1v-1h-1v-15h-1v11h-1v-10h-1v1h-1v3h-1v-5h-1v4h-1v-5h-1v2h-1v3h-1v-4h-1v6h-1v-8h-1v2h-1v11h-1v-3h-1v10h-1v-11h-1v-9h-1v9h-1v-12h-1v2h-1v-12h-1v8h-1v4h-1v-4h-1v-9h-1v23h-1v-20h-1v5h-1v19h-1v-29h-1v13h-1v20h-1v-24h-1v3h-1v3h-1v-2h-1v13h-1v-7h-1v1h-1v-5h-1v6h-1v19h-1v9h-1v-47h-1v14h-1v-3h-1v16h-1v-2h-1v-12h-1v27h-1v-13h-1v-16h-1v21h-1v-8h-1v-14h-1h-1v24h-1v-23h-1h-1v-3h-1v19h-1v-30h-1v8h-1v4h-1v6h-1v3h-1v-18h-1v9h-1v-11h-1v13h-1v-78h-1v-5h-1v4h-1v-3h-1v-4h-1h-1v14h-1v-3h-1v-9h-1v9h-1v3h-1v-13h-1v-1h-1v-1h-1v4h-1v6h-1v-10h-1v99h-1v2h-1v-24h-1v10h-1v6h-1v-5h-1v-2h-1v14h-1v-23h-1v10h-1v-2h-1v9h-1v-2h-1v-7h-1v17h-1v-4h-1v-16h-1v11h-1v-16h-1v-1h-1v-11h-1v6h-1v-1h-1v4h-1v19h-1v-23h-1v6h-1v7h-1v-11h-1v19h-1v-22h-1v18h-1v-28h-1v-14h-1v58h-1v-6h-1v-20h-1v22h-1v-9h-1v-14h-1v-8h-1v14h-1v-9h-1v12h-1v-45h-1v38h-1v-14h-1v20h-1v-15h-1v20h-1v1h-1v-9h-1v17h-1v-6h-1v10h-1v-22h-1v14h-1v13h-1v-20h-1v-17h-1v35h-1v-3h-1v-19h-1v-6h-1v18h-1v-22h-1v-1h-1v4h-1v-3h-1v17h-1v-14h-1v-8h-1v3h-1v-2h-1v16h-1v-12h-1v-3h-1v-8h-1v7h-1v18h-1v-27h-1v2h-1v10h-1v-12h-1v-46h-1v-3h-1v3h-1v10h-1v-10h-1v2h-1v-6h-1v76h-1v-18h-1v5h-1v42h-1v-42h-1v-28h-1v-19h-1v-3h-1v-4h-1v5h-1v-7h-1v4h-1v8h-1Z" fill="#274036"/></svg>
<svg class="b" style="left:0;top:0;" width="2821" height="230" viewBox="0 0 2821 230"><path d="M506.6 179.6L507.6 179.6L508.6 179.7L509.6 179.6L510.6 179.5L511.6 179.6L512.6 179.4L513.6 179.6L514.6 179.4L515.6 176.2L516.6 174.7L517.6 176.9L518.6 176.6L519.6 177.0L520.6 180.0L521.6 180.1L522.6 179.9L523.6 180.1L524.6 179.9L525.6 179.9L526.6 180.0L527.6 180.0L528.6 177.8L529.6 177.6L530.6 177.5L531.6 177.1L532.6 177.1L533.6 177.1L534.6 177.1L535.6 176.8L536.6 176.8L537.6 176.8L538.6 176.9L539.6 176.8L540.6 176.8L541.6 176.4L542.6 176.7L543.6 176.3L544.6 176.5L545.6 176.1L546.6 176.5L547.6 176.3L548.6 175.8L549.6 176.0L550.6 176.3L551.6 176.4L552.6 175.7L553.6 176.2L554.6 176.3L555.6 176.2L556.6 176.0L557.6 176.1L558.6 176.0L559.6 176.4L560.6 176.2L561.6 175.9L562.6 176.0L563.6 176.9L564.6 177.0L565.6 177.0L566.6 177.1L567.6 176.7L568.6 176.8L569.6 176.4L570.6 176.8L571.6 176.3L572.6 176.8L573.6 176.7L574.6 176.2L575.6 176.4L576.6 176.6L577.6 176.3L578.6 176.6L579.6 176.6L580.6 176.3L581.6 176.9L582.6 176.4L583.6 176.5L584.6 176.5L585.6 176.5L586.6 176.7L587.6 176.5L588.6 176.7L589.6 176.5L590.6 176.2L591.6 176.3L592.6 175.8L593.6 176.3L594.6 175.7L595.6 175.9L596.6 176.1L597.6 176.2L598.6 175.8L599.6 175.6L600.6 175.6L601.6 175.7L602.6 175.9L603.6 175.5L604.6 175.9L605.6 175.9L606.6 176.0L607.6 176.0L608.6 175.9L609.6 175.6L610.6 175.7L611.6 177.0L612.6 180.5L613.6 180.5L614.6 180.5L615.6 180.4L616.6 180.4L617.6 180.4L618.6 180.4L619.6 180.3L620.6 180.3L621.6 180.4L622.6 180.4L623.6 180.4L624.6 180.4L625.6 180.5L626.6 180.5L627.6 180.5L628.6 179.7L629.6 176.7L630.6 176.9L631.6 176.8L632.6 176.6L633.6 176.8L634.6 176.8L635.6 176.6L636.6 176.2L637.6 176.2L638.6 176.2L639.6 176.3L640.6 176.4L641.6 176.1L642.6 176.2L643.6 176.4L644.6 176.3L645.6 175.7L646.6 176.0L647.6 176.1L648.6 176.2L649.6 175.9L650.6 175.7L651.6 175.9L652.6 176.1L653.6 176.1L654.6 175.9L655.6 175.9L656.6 176.1L657.6 176.1L658.6 175.7L659.6 175.6L660.6 176.2L661.6 175.9L662.6 175.5L663.6 175.6L664.6 175.5L665.6 175.6L666.6 175.8L667.6 176.0L668.6 175.8L669.6 176.0L670.6 176.1L671.6 176.0L672.6 176.3L673.6 176.7L674.6 176.8L675.6 177.4L676.6 177.1L677.6 176.5L678.6 176.3L679.6 175.8L680.6 176.3L681.6 175.6L682.6 176.0L683.6 176.2L684.6 175.9L685.6 176.0L686.6 176.1L687.6 175.9L688.6 175.9L689.6 175.9L690.6 175.5L691.6 175.5L692.6 175.4L693.6 175.7L694.6 175.9L695.6 175.5L696.6 175.7L697.6 175.3L698.6 175.7L699.6 175.7L700.6 175.5L701.6 175.7L702.6 175.9L703.6 175.7L704.6 175.4L705.6 175.7L706.6 175.7L707.6 175.4L708.6 175.7L709.6 175.8L710.6 175.7L711.6 175.9L712.6 175.4L713.6 175.7L714.6 175.4L715.6 175.7L716.6 175.8L717.6 175.9L718.6 175.7L719.6 175.5L720.6 175.4L721.6 175.8L722.6 175.8L723.6 175.5L724.6 175.4L725.6 176.0L726.6 180.8L727.6 180.8L728.6 180.8L729.6 180.8L730.6 180.8L731.6 180.8L732.6 180.8L733.6 180.1L734.6 179.7L735.6 180.3L736.6 177.7L737.6 176.5L738.6 176.1L739.6 176.4L740.6 175.7L741.6 176.2L742.6 176.0L743.6 175.7L744.6 176.0L745.6 175.4L746.6 175.2L747.6 175.1L748.6 175.4L749.6 178.3L750.6 180.8L751.6 180.8L752.6 180.8L753.6 180.8L754.6 180.8L755.6 180.8L756.6 180.3L757.6 179.9L758.6 179.8L759.6 179.8L760.6 180.1L761.6 180.6L762.6 180.8L763.6 180.8L764.6 180.8L765.6 180.8L766.6 180.8L767.6 180.8L768.6 180.5L769.6 180.6L770.6 176.1L771.6 176.1L772.6 180.6L773.6 180.5L774.6 180.8L775.6 180.8L776.6 180.8L777.6 179.9L778.6 178.8L779.6 178.7L780.6 178.6L781.6 178.6L782.6 173.5L783.6 173.5L784.6 179.5L785.6 179.6L786.6 179.5L787.6 179.7L788.6 179.6L789.6 179.5L790.6 179.7L791.6 179.7L792.6 179.4L793.6 176.3L794.6 174.7L795.6 176.9L796.6 176.7L797.6 176.8L798.6 180.0L799.6 180.0L800.6 180.0L801.6 180.1L802.6 179.9L803.6 180.0L804.6 180.0L805.6 179.7L806.6 177.8L807.6 177.7L808.6 177.6L809.6 177.5L810.6 177.0L811.6 177.0L812.6 176.9L813.6 176.8L814.6 176.5L815.6 176.5L816.6 176.5L817.6 176.4L818.6 176.5L819.6 176.1L820.6 176.7L821.6 176.0L822.6 176.4L823.6 175.9L824.6 175.8L825.6 175.8L826.6 176.1L827.6 175.8L828.6 175.9L829.6 175.8L830.6 176.4L831.6 176.4L832.6 176.2L833.6 175.8L834.6 175.7L835.6 176.3L836.6 175.9L837.6 176.1L838.6 175.8L839.6 176.0L840.6 176.5L841.6 177.0L842.6 176.9L843.6 177.2L844.6 176.9L845.6 176.9L846.6 176.8L847.6 176.9L848.6 176.6L849.6 176.6L850.6 176.3L851.6 176.9L852.6 176.8L853.6 176.8L854.6 176.8L855.6 176.5L856.6 176.3L857.6 176.6L858.6 176.8L859.6 176.7L860.6 176.5L861.6 176.7L862.6 177.0L863.6 176.5L864.6 176.9L865.6 177.0L866.6 177.1L867.6 176.4L868.6 176.0L869.6 175.9L870.6 176.1L871.6 175.6L872.6 176.0L873.6 175.6L874.6 175.6L875.6 175.5L876.6 175.9L877.6 175.7L878.6 175.4L879.6 175.6L880.6 175.9L881.6 175.4L882.6 175.6L883.6 175.6L884.6 175.9L885.6 175.4L886.6 175.9L887.6 175.6L888.6 175.5L889.6 180.5L890.6 180.6L891.6 180.5L892.6 180.5L893.6 180.5L894.6 180.4L895.6 180.3L896.6 180.3L897.6 180.3L898.6 180.4L899.6 180.4L900.6 180.4L901.6 180.4L902.6 180.5L903.6 180.5L904.6 180.4L905.6 180.5L906.6 176.9L907.6 177.0L908.6 176.9L909.6 176.8L910.6 176.7L911.6 176.4L912.6 176.6L913.6 176.1L914.6 176.2L915.6 176.5L916.6 176.1L917.6 176.1L918.6 176.1L919.6 176.0L920.6 176.2L921.6 176.5L922.6 176.4L923.6 176.2L924.6 176.4L925.6 175.9L926.6 176.2L927.6 175.6L928.6 175.8L929.6 175.7L930.6 175.9L931.6 176.2L932.6 175.7L933.6 175.8L934.6 175.8L935.6 176.1L936.6 175.6L937.6 175.5L938.6 175.8L939.6 175.6L940.6 175.7L941.6 175.7L942.6 175.6L943.6 176.2L944.6 176.0L945.6 176.2L946.6 176.2L947.6 176.1L948.6 176.1L949.6 176.1L950.6 176.6L951.6 176.6L952.6 177.2L953.6 177.1L954.6 176.8L955.6 176.5L956.6 176.3L957.6 176.1L958.6 175.7L959.6 175.6L960.6 175.9L961.6 176.0L962.6 175.9L963.6 175.4L964.6 176.1L965.6 175.9L966.6 175.4L967.6 175.5L968.6 175.7L969.6 175.6L970.6 175.5L971.6 175.9L972.6 175.4L973.6 175.6L974.6 176.0L975.6 175.3L976.6 175.6L977.6 176.0L978.6 175.3L979.6 175.3L980.6 175.6L981.6 175.6L982.6 175.3L983.6 176.0L984.6 175.3L985.6 175.4L986.6 175.8L987.6 175.3L988.6 175.8L989.6 175.4L990.6 176.0L991.6 175.5L992.6 175.8L993.6 175.8L994.6 175.4L995.6 175.8L996.6 175.3L997.6 175.9L998.6 175.6L999.6 175.6L1000.6 175.6L1001.6 175.5L1002.6 175.3L1003.6 175.6L1004.6 180.8L1005.6 180.8L1006.6 180.8L1007.6 180.8L1008.6 180.8L1009.6 180.8L1010.6 180.8L1011.6 180.0L1012.6 179.7L1013.6 180.7L1014.6 177.8L1015.6 175.9L1016.6 175.8L1017.6 175.9L1018.6 176.3L1019.6 176.3L1020.6 175.6L1021.6 175.8L1022.6 175.9L1023.6 175.2L1024.6 174.9L1025.6 175.0L1026.6 175.5L1027.6 179.7L1028.6 180.8L1029.6 180.8L1030.6 180.8L1031.6 180.8L1032.6 180.8L1033.6 180.7L1034.6 180.1L1035.6 179.6L1036.6 179.7L1037.6 179.8L1038.6 180.2L1039.6 180.8L1040.6 180.8L1041.6 180.8L1042.6 180.8L1043.6 180.8L1044.6 180.8L1045.6 180.8L1046.6 180.6L1047.6 180.6L1048.6 176.1L1049.6 180.6L1050.6 180.5L1051.6 180.5L1052.6 180.8L1053.6 180.8L1054.6 180.8L1055.6 178.8L1056.6 178.8L1057.6 178.5L1058.6 178.6L1059.6 178.4L1060.6 173.5L1061.6 178.1L1062.6 179.6L1063.6 179.5L1064.6 179.6L1065.6 179.5L1066.6 179.6L1067.6 179.5L1068.6 179.6L1069.6 179.5L1070.6 176.6L1071.6 176.4L1072.6 174.7L1073.6 176.9L1074.6 176.8L1075.6 176.8L1076.6 180.0L1077.6 180.0L1078.6 180.0L1079.6 180.0L1080.6 179.9L1081.6 180.1L1082.6 179.9L1083.6 177.9L1084.6 177.7L1085.6 177.7L1086.6 177.5L1087.6 177.3L1088.6 177.0L1089.6 176.8L1090.6 176.8L1091.6 176.9L1092.6 176.6L1093.6 176.6L1094.6 176.8L1095.6 176.6L1096.6 176.5L1097.6 176.3L1098.6 176.7L1099.6 176.3L1100.6 176.6L1101.6 176.3L1102.6 176.1L1103.6 176.3L1104.6 176.1L1105.6 175.8L1106.6 176.3L1107.6 175.9L1108.6 176.3L1109.6 176.2L1110.6 175.8L1111.6 176.0L1112.6 175.9L1113.6 176.0L1114.6 175.9L1115.6 176.3L1116.6 176.4L1117.6 175.8L1118.6 176.5L1119.6 177.0L1120.6 177.6L1121.6 177.1L1122.6 176.7L1123.6 177.1L1124.6 176.7L1125.6 176.5L1126.6 176.5L1127.6 176.3L1128.6 176.6L1129.6 176.8L1130.6 176.8L1131.6 176.8L1132.6 176.8L1133.6 176.5L1134.6 176.9L1135.6 176.3L1136.6 176.8L1137.6 176.9L1138.6 176.4L1139.6 176.5L1140.6 176.9L1141.6 177.0L1142.6 176.6L1143.6 176.8L1144.6 176.5L1145.6 176.3L1146.6 176.5L1147.6 176.1L1148.6 175.8L1149.6 175.9L1150.6 175.6L1151.6 176.3L1152.6 175.7L1153.6 176.2L1154.6 175.8L1155.6 176.1L1156.6 175.9L1157.6 176.1L1158.6 175.6L1159.6 175.9L1160.6 176.1L1161.6 175.8L1162.6 175.4L1163.6 175.4L1164.6 175.6L1165.6 175.5L1166.6 175.7L1167.6 180.5L1168.6 180.5L1169.6 180.5L1170.6 180.4L1171.6 180.4L1172.6 180.4L1173.6 180.3L1174.6 180.4L1175.6 180.3L1176.6 180.3L1177.6 180.4L1178.6 180.4L1179.6 180.4L1180.6 180.4L1181.6 180.5L1182.6 180.5L1183.6 180.5L1184.6 177.1L1185.6 177.0L1186.6 176.8L1187.6 176.5L1188.6 176.2L1189.6 176.7L1190.6 176.2L1191.6 176.3L1192.6 176.2L1193.6 176.5L1194.6 176.2L1195.6 175.9L1196.6 176.4L1197.6 176.2L1198.6 175.9L1199.6 176.1L1200.6 175.8L1201.6 175.9L1202.6 175.7L1203.6 175.6L1204.6 176.1L1205.6 175.8L1206.6 175.8L1207.6 175.6L1208.6 175.8L1209.6 175.8L1210.6 176.1L1211.6 175.8L1212.6 175.7L1213.6 175.6L1214.6 175.9L1215.6 176.0L1216.6 176.1L1217.6 175.4L1218.6 176.1L1219.6 176.2L1220.6 175.8L1221.6 175.7L1222.6 176.0L1223.6 175.8L1224.6 176.2L1225.6 176.1L1226.6 175.8L1227.6 176.4L1228.6 176.2L1229.6 176.6L1230.6 176.9L1231.6 177.3L1232.6 177.0L1233.6 176.2L1234.6 176.2L1235.6 176.4L1236.6 176.2L1237.6 175.7L1238.6 175.8L1239.6 175.7L1240.6 175.5L1241.6 175.4L1242.6 175.8L1243.6 175.9L1244.6 175.6L1245.6 175.6L1246.6 175.4L1247.6 175.4L1248.6 175.8L1249.6 175.3L1250.6 175.6L1251.6 175.4L1252.6 176.0L1253.6 175.3L1254.6 175.5L1255.6 175.3L1256.6 175.7L1257.6 175.8L1258.6 175.4L1259.6 175.4L1260.6 175.3L1261.6 175.3L1262.6 175.6L1263.6 175.7L1264.6 175.6L1265.6 175.5L1266.6 175.9L1267.6 176.0L1268.6 175.6L1269.6 175.5L1270.6 175.9L1271.6 175.4L1272.6 175.3L1273.6 175.4L1274.6 175.8L1275.6 175.7L1276.6 175.6L1277.6 175.9L1278.6 175.9L1279.6 175.8L1280.6 175.9L1281.6 179.4L1282.6 180.8L1283.6 180.8L1284.6 180.8L1285.6 180.8L1286.6 180.8L1287.6 180.8L1288.6 180.8L1289.6 179.6L1290.6 179.5L1291.6 180.8L1292.6 177.3L1293.6 176.0L1294.6 176.1L1295.6 176.0L1296.6 176.2L1297.6 176.2L1298.6 176.3L1299.6 175.7L1300.6 175.8L1301.6 175.3L1302.6 175.2L1303.6 174.9L1304.6 176.1L1305.6 180.5L1306.6 180.8L1307.6 180.8L1308.6 180.8L1309.6 180.8L1310.6 180.8L1311.6 180.5L1312.6 180.1L1313.6 179.7L1314.6 179.8L1315.6 179.9L1316.6 180.4L1317.6 180.8L1318.6 180.8L1319.6 180.8L1320.6 180.8L1321.6 180.8L1322.6 180.8L1323.6 180.8L1324.6 180.6L1325.6 180.5L1326.6 176.1L1327.6 180.5L1328.6 180.6L1329.6 180.6L1330.6 180.8L1331.6 180.8L1332.6 180.8L1333.6 178.7L1334.6 178.7L1335.6 178.4L1336.6 178.3L1337.6 178.3L1338.6 173.5L1339.6 178.4L1340.6 179.6L1341.6 179.5L1342.6 179.6L1343.6 179.7L1344.6 179.5L1345.6 179.5L1346.6 179.7L1347.6 179.6L1348.6 176.5L1349.6 174.7L1350.6 176.5L1351.6 177.0L1352.6 176.9L1353.6 178.3L1354.6 180.0L1355.6 179.9L1356.6 180.0L1357.6 180.1L1358.6 180.0L1359.6 179.9L1360.6 180.1L1361.6 177.6L1362.6 177.6L1363.6 177.5L1364.6 177.3L1365.6 177.5L1366.6 177.0L1367.6 177.3L1368.6 177.1L1369.6 177.2L1370.6 177.1L1371.6 176.6L1372.6 176.8L1373.6 176.7L1374.6 176.4L1375.6 176.6L1376.6 176.3L1377.6 176.1L1378.6 176.1L1379.6 176.1L1380.6 175.9L1381.6 176.4L1382.6 176.4L1383.6 176.4L1384.6 175.7L1385.6 176.2L1386.6 175.9L1387.6 175.8L1388.6 175.6L1389.6 175.9L1390.6 176.3L1391.6 176.2L1392.6 175.8L1393.6 175.7L1394.6 176.4L1395.6 176.0L1396.6 176.8L1397.6 177.0L1398.6 177.2L1399.6 177.2L1400.6 176.9L1401.6 177.0L1402.6 176.7L1403.6 176.8L1404.6 176.4L1405.6 176.4L1406.6 176.4L1407.6 176.3L1408.6 176.4L1409.6 176.3L1410.6 176.2L1411.6 176.4L1412.6 176.3L1413.6 176.4L1414.6 176.4L1415.6 176.9L1416.6 176.3L1417.6 176.4L1418.6 176.7L1419.6 176.5L1420.6 176.8L1421.6 176.7L1422.6 177.0L1423.6 176.5L1424.6 176.5L1425.6 176.1L1426.6 176.0L1427.6 176.1L1428.6 175.9L1429.6 176.1L1430.6 175.7L1431.6 176.2L1432.6 175.4L1433.6 175.9L1434.6 176.0L1435.6 176.1L1436.6 175.7L1437.6 175.7L1438.6 175.6L1439.6 175.6L1440.6 175.7L1441.6 175.9L1442.6 175.9L1443.6 176.2L1444.6 175.6L1445.6 180.5L1446.6 180.4L1447.6 180.4L1448.6 180.4L1449.6 180.4L1450.6 180.3L1451.6 180.4L1452.6 180.3L1453.6 180.4L1454.6 180.3L1455.6 180.4L1456.6 180.3L1457.6 180.4L1458.6 180.5L1459.6 180.5L1460.6 180.5L1461.6 180.5L1462.6 176.5L1463.6 176.9L1464.6 176.8L1465.6 176.5L1466.6 176.3L1467.6 176.2L1468.6 176.5L1469.6 176.2L1470.6 176.5L1471.6 176.3L1472.6 176.6L1473.6 175.9L1474.6 176.1L1475.6 175.8L1476.6 176.5L1477.6 176.1L1478.6 176.4L1479.6 176.2L1480.6 176.0L1481.6 176.0L1482.6 175.8L1483.6 175.6L1484.6 176.2L1485.6 176.2L1486.6 175.7L1487.6 176.1L1488.6 176.2L1489.6 176.2L1490.6 176.0L1491.6 176.2L1492.6 175.4L1493.6 175.7L1494.6 176.1L1495.6 176.2L1496.6 175.7L1497.6 175.9L1498.6 175.9L1499.6 175.6L1500.6 175.7L1501.6 175.8L1502.6 175.7L1503.6 176.1L1504.6 176.4L1505.6 176.2L1506.6 176.5L1507.6 176.7L1508.6 176.9L1509.6 177.1L1510.6 176.8L1511.6 176.6L1512.6 176.4L1513.6 176.0L1514.6 175.8L1515.6 175.8L1516.6 175.6L1517.6 175.8L1518.6 175.5L1519.6 175.7L1520.6 175.5L1521.6 175.9L1522.6 175.6L1523.6 175.9L1524.6 175.5L1525.6 175.7L1526.6 175.6L1527.6 175.5L1528.6 175.4L1529.6 176.0L1530.6 176.0L1531.6 175.3L1532.6 175.7L1533.6 175.7L1534.6 175.7L1535.6 175.7L1536.6 175.3L1537.6 175.7L1538.6 176.0L1539.6 175.8L1540.6 175.7L1541.6 175.9L1542.6 175.4L1543.6 176.0L1544.6 175.3L1545.6 175.6L1546.6 176.0L1547.6 176.0L1548.6 176.0L1549.6 175.4L1550.6 176.0L1551.6 175.7L1552.6 175.7L1553.6 175.7L1554.6 175.7L1555.6 175.6L1556.6 175.8L1557.6 175.6L1558.6 175.7L1559.6 180.8L1560.6 180.8L1561.6 180.8L1562.6 180.8L1563.6 180.8L1564.6 180.8L1565.6 180.8L1566.6 180.5L1567.6 179.6L1568.6 179.8L1569.6 179.6L1570.6 176.8L1571.6 176.3L1572.6 175.9L1573.6 176.3L1574.6 176.1L1575.6 176.0L1576.6 175.7L1577.6 176.0L1578.6 175.2L1579.6 175.0L1580.6 175.4L1581.6 175.4L1582.6 176.1L1583.6 180.8L1584.6 180.8L1585.6 180.8L1586.6 180.8L1587.6 180.8L1588.6 180.8L1589.6 180.5L1590.6 179.9L1591.6 179.7L1592.6 179.7L1593.6 179.9L1594.6 180.5L1595.6 180.8L1596.6 180.8L1597.6 180.8L1598.6 180.8L1599.6 180.8L1600.6 180.8L1601.6 180.8L1602.6 180.5L1603.6 180.6L1604.6 176.1L1605.6 180.5L1606.6 180.6L1607.6 180.7L1608.6 180.8L1609.6 180.8L1610.6 180.8L1611.6 178.7L1612.6 178.5L1613.6 178.5L1614.6 178.5L1615.6 178.5L1616.6 173.5L1617.6 178.3L1618.6 179.6L1619.6 179.7L1620.6 179.6L1621.6 179.7L1622.6 179.6L1623.6 179.5L1624.6 179.5L1625.6 179.6L1626.6 176.1L1627.6 174.7L1628.6 176.3L1629.6 176.6L1630.6 176.9L1631.6 179.8L1632.6 180.0L1633.6 180.1L1634.6 180.0L1635.6 180.0L1636.6 179.9L1637.6 179.9L1638.6 180.0L1639.6 177.6L1640.6 177.7L1641.6 177.5L1642.6 177.4L1643.6 177.2L1644.6 177.1L1645.6 177.1L1646.6 177.1L1647.6 176.9L1648.6 176.7L1649.6 176.9L1650.6 176.8L1651.6 176.5L1652.6 176.7L1653.6 176.6L1654.6 176.4L1655.6 176.2L1656.6 176.5L1657.6 176.0L1658.6 176.3L1659.6 176.1L1660.6 176.0L1661.6 175.9L1662.6 176.3L1663.6 176.2L1664.6 176.1L1665.6 176.2L1666.6 175.7L1667.6 176.0L1668.6 176.3L1669.6 175.7L1670.6 175.8L1671.6 175.9L1672.6 176.0L1673.6 176.2L1674.6 176.6L1675.6 177.1L1676.6 177.3L1677.6 176.8L1678.6 176.9L1679.6 176.9L1680.6 176.7L1681.6 176.4L1682.6 176.5L1683.6 176.5L1684.6 176.8L1685.6 176.2L1686.6 176.6L1687.6 176.6L1688.6 176.8L1689.6 176.6L1690.6 176.8L1691.6 176.7L1692.6 176.3L1693.6 176.5L1694.6 176.9L1695.6 176.9L1696.6 176.6L1697.6 176.6L1698.6 177.0L1699.6 176.6L1700.6 176.7L1701.6 176.5L1702.6 176.2L1703.6 175.7L1704.6 176.3L1705.6 176.1L1706.6 175.6L1707.6 176.0L1708.6 175.8L1709.6 175.5L1710.6 175.6L1711.6 176.0L1712.6 176.0L1713.6 176.1L1714.6 175.6L1715.6 175.7L1716.6 175.7L1717.6 175.5L1718.6 175.6L1719.6 176.2L1720.6 175.8L1721.6 176.0L1722.6 176.3L1723.6 180.5L1724.6 180.5L1725.6 180.4L1726.6 180.4L1727.6 180.4L1728.6 180.4L1729.6 180.3L1730.6 180.4L1731.6 180.2L1732.6 180.3L1733.6 180.4L1734.6 180.4L1735.6 180.5L1736.6 180.5L1737.6 180.5L1738.6 180.5L1739.6 180.3L1740.6 176.8L1741.6 176.9L1742.6 176.8L1743.6 176.5L1744.6 176.6L1745.6 176.6L1746.6 176.5L1747.6 176.6L1748.6 176.4L1749.6 176.0L1750.6 176.4L1751.6 176.6L1752.6 176.5L1753.6 176.4L1754.6 176.0L1755.6 175.9L1756.6 176.2L1757.6 176.4L1758.6 175.7L1759.6 175.9L1760.6 175.9L1761.6 175.8L1762.6 175.7L1763.6 175.9L1764.6 175.6L1765.6 176.0L1766.6 176.0L1767.6 176.1L1768.6 175.7L1769.6 176.0L1770.6 176.0L1771.6 175.7L1772.6 175.4L1773.6 175.9L1774.6 175.5L1775.6 175.8L1776.6 175.6L1777.6 176.0L1778.6 175.9L1779.6 175.6L1780.6 175.9L1781.6 176.1L1782.6 175.8L1783.6 176.4L1784.6 176.2L1785.6 176.9L1786.6 177.4L1787.6 177.5L1788.6 176.7L1789.6 176.5L1790.6 175.7L1791.6 175.9L1792.6 176.0L1793.6 175.7L1794.6 175.8L1795.6 176.1L1796.6 175.3L1797.6 175.8L1798.6 175.8L1799.6 175.5L1800.6 175.5L1801.6 175.4L1802.6 175.9L1803.6 175.9L1804.6 175.9L1805.6 175.6L1806.6 175.7L1807.6 175.8L1808.6 176.0L1809.6 175.6L1810.6 175.3L1811.6 175.3L1812.6 175.5L1813.6 175.9L1814.6 175.3L1815.6 175.9L1816.6 175.5L1817.6 175.3L1818.6 175.9L1819.6 176.0L1820.6 175.4L1821.6 175.9L1822.6 175.7L1823.6 175.9L1824.6 175.9L1825.6 175.5L1826.6 175.9L1827.6 175.6L1828.6 175.9L1829.6 175.5L1830.6 175.8L1831.6 175.8L1832.6 175.9L1833.6 175.7L1834.6 175.5L1835.6 175.9L1836.6 175.6L1837.6 180.8L1838.6 180.8L1839.6 180.8L1840.6 180.8L1841.6 180.8L1842.6 180.8L1843.6 180.8L1844.6 180.2L1845.6 179.5L1846.6 180.2L1847.6 178.0L1848.6 176.9L1849.6 176.5L1850.6 176.1L1851.6 175.7L1852.6 176.0L1853.6 175.9L1854.6 175.4L1855.6 175.3L1856.6 175.1L1857.6 175.2L1858.6 174.9L1859.6 175.6L1860.6 178.1L1861.6 180.8L1862.6 180.8L1863.6 180.8L1864.6 180.8L1865.6 180.8L1866.6 180.8L1867.6 180.4L1868.6 179.9L1869.6 179.8L1870.6 179.8L1871.6 180.1L1872.6 180.7L1873.6 180.8L1874.6 180.8L1875.6 180.8L1876.6 180.8L1877.6 180.8L1878.6 180.8L1879.6 180.6L1880.6 180.5L1881.6 176.1L1882.6 176.1L1883.6 180.6L1884.6 180.6L1885.6 180.8L1886.6 180.8L1887.6 180.8L1888.6 180.2L1889.6 178.7L1890.6 178.8L1891.6 178.6L1892.6 178.6L1893.6 173.5L1894.6 173.5L1895.6 179.6L1896.6 179.7L1897.6 179.5L1898.6 179.5L1899.6 179.5L1900.6 179.6L1901.6 179.5L1902.6 179.5L1903.6 179.6L1904.6 176.1L1905.6 174.7L1906.6 176.8L1907.6 177.0L1908.6 176.7L1909.6 180.0L1910.6 180.0L1911.6 180.1L1912.6 180.0L1913.6 179.9L1914.6 180.0L1915.6 180.1L1916.6 180.0L1917.6 177.8L1918.6 177.7L1919.6 177.6L1920.6 177.5L1921.6 177.0L1922.6 177.2L1923.6 176.8L1924.6 177.0L1925.6 177.1L1926.6 176.9L1927.6 176.5L1928.6 176.3L1929.6 176.5L1930.6 176.4L1931.6 176.7L1932.6 176.1L1933.6 176.1L1934.6 176.1L1935.6 176.5L1936.6 175.8L1937.6 176.3L1938.6 176.3L1939.6 176.0L1940.6 175.9L1941.6 176.0L1942.6 176.2L1943.6 176.2L1944.6 176.4L1945.6 176.1L1946.6 175.9L1947.6 176.1L1948.6 175.9L1949.6 176.0L1950.6 175.9L1951.6 176.4L1952.6 176.5L1953.6 177.0L1954.6 177.4L1955.6 176.9L1956.6 176.9L1957.6 176.6L1958.6 176.5L1959.6 176.5L1960.6 176.4L1961.6 176.8L1962.6 176.4L1963.6 176.7L1964.6 176.3L1965.6 176.8L1966.6 176.7L1967.6 176.7L1968.6 176.5L1969.6 176.7L1970.6 176.5L1971.6 176.8L1972.6 176.9L1973.6 176.7L1974.6 176.7L1975.6 176.5L1976.6 176.7L1977.6 176.5L1978.6 176.9L1979.6 176.6L1980.6 175.9L1981.6 176.4L1982.6 176.1L1983.6 175.8L1984.6 175.6L1985.6 175.7L1986.6 175.8L1987.6 175.7L1988.6 175.5L1989.6 175.5L1990.6 176.0L1991.6 175.4L1992.6 175.9L1993.6 175.8L1994.6 175.4L1995.6 176.1L1996.6 175.4L1997.6 176.1L1998.6 175.4L1999.6 176.2L2000.6 179.6L2001.6 180.6L2002.6 180.5L2003.6 180.5L2004.6 180.4L2005.6 180.4L2006.6 180.4L2007.6 180.2L2008.6 180.4L2009.6 180.4L2010.6 180.4L2011.6 180.4L2012.6 180.4L2013.6 180.4L2014.6 180.5L2015.6 180.5L2016.6 180.5L2017.6 177.1L2018.6 176.7L2019.6 176.9L2020.6 176.4L2021.6 176.9L2022.6 176.2L2023.6 176.5L2024.6 176.3L2025.6 176.6L2026.6 176.5L2027.6 176.5L2028.6 176.2L2029.6 176.1L2030.6 176.5L2031.6 176.2L2032.6 175.8L2033.6 176.2L2034.6 175.8L2035.6 175.7L2036.6 175.8L2037.6 175.6L2038.6 175.6L2039.6 176.3L2040.6 176.2L2041.6 175.6L2042.6 175.7L2043.6 175.8L2044.6 175.9L2045.6 176.0L2046.6 176.1L2047.6 175.5L2048.6 175.9L2049.6 175.4L2050.6 176.1L2051.6 175.6L2052.6 175.5L2053.6 175.6L2054.6 175.9L2055.6 176.2L2056.6 175.6L2057.6 175.7L2058.6 176.2L2059.6 175.7L2060.6 176.1L2061.6 176.3L2062.6 176.7L2063.6 176.6L2064.6 177.4L2065.6 177.0L2066.6 176.4L2067.6 176.2L2068.6 175.9L2069.6 175.8L2070.6 175.6L2071.6 175.6L2072.6 175.5L2073.6 175.6L2074.6 176.0L2075.6 176.0L2076.6 175.6L2077.6 175.4L2078.6 175.5L2079.6 175.6L2080.6 175.4L2081.6 175.6L2082.6 175.8L2083.6 175.7L2084.6 175.6L2085.6 175.9L2086.6 175.8L2087.6 175.8L2088.6 176.0L2089.6 175.7L2090.6 176.0L2091.6 175.8L2092.6 175.7L2093.6 175.8L2094.6 175.7L2095.6 175.7L2096.6 175.5L2097.6 175.9L2098.6 175.9L2099.6 175.4L2100.6 175.9L2101.6 175.8L2102.6 175.6L2103.6 176.0L2104.6 175.7L2105.6 175.9L2106.6 175.9L2107.6 175.6L2108.6 175.4L2109.6 175.3L2110.6 175.4L2111.6 176.0L2112.6 175.4L2113.6 175.8L2114.6 175.5L2115.6 180.8L2116.6 180.8L2117.6 180.8L2118.6 180.8L2119.6 180.8L2120.6 180.8L2121.6 180.8L2122.6 179.9L2123.6 179.5L2124.6 180.7L2125.6 177.4L2126.6 176.6L2127.6 175.9L2128.6 176.4L2129.6 176.0L2130.6 176.3L2131.6 175.6L2132.6 176.0L2133.6 175.4L2134.6 175.0L2135.6 175.0L2136.6 175.2L2137.6 175.2L2138.6 179.6L2139.6 180.8L2140.6 180.8L2141.6 180.8L2142.6 180.8L2143.6 180.8L2144.6 180.7L2145.6 180.1L2146.6 179.8L2147.6 179.8L2148.6 179.8L2149.6 180.1L2150.6 180.8L2151.6 180.8L2152.6 180.8L2153.6 180.8L2154.6 180.8L2155.6 180.8L2156.6 180.8L2157.6 180.5L2158.6 180.6L2159.6 176.1L2160.6 180.5L2161.6 180.5L2162.6 180.6L2163.6 180.8L2164.6 180.8L2165.6 180.8L2166.6 178.7L2167.6 178.8L2168.6 178.6L2169.6 178.5L2170.6 178.5L2171.6 173.5L2172.6 178.5L2172.6 185.2L2171.6 188.4L2170.6 184.6L2169.6 184.4L2168.6 184.2L2167.6 184.2L2166.6 183.9L2165.6 182.0L2164.6 182.0L2163.6 182.0L2162.6 182.0L2161.6 182.0L2160.6 182.0L2159.6 187.1L2158.6 182.0L2157.6 182.0L2156.6 182.0L2155.6 182.0L2154.6 182.0L2153.6 182.0L2152.6 182.0L2151.6 182.0L2150.6 182.2L2149.6 182.7L2148.6 183.0L2147.6 182.9L2146.6 182.9L2145.6 182.6L2144.6 182.1L2143.6 182.0L2142.6 182.0L2141.6 182.0L2140.6 182.0L2139.6 182.0L2138.6 183.2L2137.6 187.3L2136.6 187.7L2135.6 187.3L2134.6 186.7L2133.6 187.2L2132.6 186.8L2131.6 186.5L2130.6 187.0L2129.6 186.5L2128.6 186.8L2127.6 186.4L2126.6 186.2L2125.6 185.1L2124.6 182.2L2123.6 182.4L2122.6 182.3L2121.6 182.0L2120.6 182.0L2119.6 182.0L2118.6 182.0L2117.6 182.0L2116.6 182.0L2115.6 182.0L2114.6 186.6L2113.6 187.0L2112.6 186.9L2111.6 187.0L2110.6 187.2L2109.6 187.3L2108.6 187.4L2107.6 187.2L2106.6 187.1L2105.6 187.4L2104.6 187.3L2103.6 187.4L2102.6 186.9L2101.6 187.3L2100.6 186.7L2099.6 187.1L2098.6 187.0L2097.6 187.4L2096.6 187.2L2095.6 187.4L2094.6 187.2L2093.6 187.1L2092.6 187.2L2091.6 187.1L2090.6 187.6L2089.6 187.6L2088.6 187.5L2087.6 187.0L2086.6 187.1L2085.6 187.4L2084.6 187.0L2083.6 186.9L2082.6 187.2L2081.6 187.6L2080.6 187.4L2079.6 187.1L2078.6 187.1L2077.6 187.5L2076.6 186.8L2075.6 187.1L2074.6 186.7L2073.6 186.8L2072.6 187.2L2071.6 187.2L2070.6 187.3L2069.6 186.7L2068.6 186.6L2067.6 187.1L2066.6 186.1L2065.6 185.9L2064.6 185.9L2063.6 186.2L2062.6 186.6L2061.6 186.5L2060.6 186.4L2059.6 186.8L2058.6 186.5L2057.6 186.7L2056.6 186.6L2055.6 186.5L2054.6 186.6L2053.6 187.2L2052.6 187.4L2051.6 187.2L2050.6 187.0L2049.6 186.9L2048.6 187.4L2047.6 187.6L2046.6 187.6L2045.6 187.3L2044.6 187.2L2043.6 187.7L2042.6 187.5L2041.6 187.2L2040.6 187.3L2039.6 187.3L2038.6 187.0L2037.6 187.3L2036.6 186.8L2035.6 186.8L2034.6 186.7L2033.6 186.9L2032.6 187.2L2031.6 187.1L2030.6 187.0L2029.6 187.1L2028.6 186.8L2027.6 186.9L2026.6 186.6L2025.6 186.5L2024.6 186.4L2023.6 186.1L2022.6 186.6L2021.6 186.0L2020.6 186.4L2019.6 186.0L2018.6 186.1L2017.6 185.1L2016.6 182.3L2015.6 182.3L2014.6 182.2L2013.6 182.3L2012.6 182.3L2011.6 182.4L2010.6 182.5L2009.6 182.5L2008.6 182.4L2007.6 182.5L2006.6 182.4L2005.6 182.4L2004.6 182.3L2003.6 182.3L2002.6 182.2L2001.6 182.2L2000.6 183.1L1999.6 186.7L1998.6 187.0L1997.6 186.8L1996.6 186.7L1995.6 186.6L1994.6 186.7L1993.6 187.1L1992.6 186.7L1991.6 187.2L1990.6 187.0L1989.6 186.5L1988.6 187.0L1987.6 186.7L1986.6 187.0L1985.6 186.7L1984.6 186.3L1983.6 186.5L1982.6 186.8L1981.6 186.6L1980.6 186.3L1979.6 186.5L1978.6 186.5L1977.6 186.3L1976.6 186.5L1975.6 186.1L1974.6 185.9L1973.6 186.5L1972.6 186.0L1971.6 186.2L1970.6 186.1L1969.6 186.5L1968.6 186.0L1967.6 186.4L1966.6 186.6L1965.6 186.2L1964.6 186.5L1963.6 186.4L1962.6 186.1L1961.6 185.9L1960.6 186.4L1959.6 186.5L1958.6 186.0L1957.6 186.3L1956.6 185.7L1955.6 186.1L1954.6 185.6L1953.6 185.4L1952.6 186.3L1951.6 186.1L1950.6 186.8L1949.6 186.7L1948.6 187.0L1947.6 187.2L1946.6 186.9L1945.6 187.0L1944.6 187.3L1943.6 187.0L1942.6 187.0L1941.6 186.5L1940.6 186.5L1939.6 186.9L1938.6 186.5L1937.6 186.9L1936.6 186.6L1935.6 186.5L1934.6 186.2L1933.6 186.4L1932.6 186.4L1931.6 186.5L1930.6 185.9L1929.6 186.3L1928.6 185.9L1927.6 185.8L1926.6 186.0L1925.6 186.0L1924.6 186.0L1923.6 185.7L1922.6 185.8L1921.6 185.7L1920.6 185.6L1919.6 185.6L1918.6 185.7L1917.6 185.6L1916.6 182.9L1915.6 182.9L1914.6 182.8L1913.6 182.9L1912.6 182.9L1911.6 182.8L1910.6 182.8L1909.6 182.9L1908.6 185.9L1907.6 186.2L1906.6 185.9L1905.6 187.4L1904.6 186.3L1903.6 183.2L1902.6 183.1L1901.6 183.2L1900.6 183.1L1899.6 183.1L1898.6 183.1L1897.6 183.3L1896.6 183.2L1895.6 183.1L1894.6 188.4L1893.6 188.4L1892.6 184.7L1891.6 184.6L1890.6 184.3L1889.6 184.2L1888.6 182.6L1887.6 182.0L1886.6 182.0L1885.6 182.0L1884.6 182.0L1883.6 182.0L1882.6 187.1L1881.6 187.1L1880.6 182.0L1879.6 182.0L1878.6 182.0L1877.6 182.0L1876.6 182.0L1875.6 182.0L1874.6 182.0L1873.6 182.0L1872.6 182.3L1871.6 182.8L1870.6 183.1L1869.6 183.0L1868.6 182.8L1867.6 182.6L1866.6 182.0L1865.6 182.0L1864.6 182.0L1863.6 182.0L1862.6 182.0L1861.6 182.0L1860.6 184.7L1859.6 187.5L1858.6 187.7L1857.6 186.9L1856.6 187.1L1855.6 186.8L1854.6 186.9L1853.6 186.4L1852.6 186.8L1851.6 186.9L1850.6 186.8L1849.6 186.8L1848.6 186.2L1847.6 184.8L1846.6 182.2L1845.6 182.3L1844.6 182.1L1843.6 182.0L1842.6 182.0L1841.6 182.0L1840.6 182.0L1839.6 182.0L1838.6 182.0L1837.6 182.0L1836.6 187.2L1835.6 187.3L1834.6 187.1L1833.6 187.0L1832.6 187.0L1831.6 187.0L1830.6 187.2L1829.6 186.9L1828.6 186.7L1827.6 187.4L1826.6 187.1L1825.6 186.9L1824.6 187.0L1823.6 186.8L1822.6 187.5L1821.6 186.8L1820.6 187.4L1819.6 186.7L1818.6 187.1L1817.6 187.0L1816.6 187.1L1815.6 186.9L1814.6 187.3L1813.6 187.0L1812.6 186.8L1811.6 186.9L1810.6 187.2L1809.6 186.8L1808.6 186.9L1807.6 186.8L1806.6 187.0L1805.6 187.4L1804.6 187.4L1803.6 187.1L1802.6 187.4L1801.6 186.9L1800.6 187.1L1799.6 187.2L1798.6 186.9L1797.6 187.2L1796.6 187.3L1795.6 186.8L1794.6 186.9L1793.6 187.0L1792.6 187.2L1791.6 187.1L1790.6 186.7L1789.6 186.9L1788.6 186.5L1787.6 186.3L1786.6 185.8L1785.6 186.3L1784.6 186.0L1783.6 186.8L1782.6 186.2L1781.6 186.4L1780.6 187.1L1779.6 187.1L1778.6 187.1L1777.6 187.2L1776.6 187.0L1775.6 187.1L1774.6 187.0L1773.6 187.3L1772.6 187.3L1771.6 186.9L1770.6 186.9L1769.6 187.3L1768.6 187.7L1767.6 187.1L1766.6 187.4L1765.6 187.6L1764.6 187.3L1763.6 187.5L1762.6 187.1L1761.6 186.8L1760.6 187.4L1759.6 186.9L1758.6 187.0L1757.6 187.1L1756.6 186.8L1755.6 187.1L1754.6 186.7L1753.6 186.7L1752.6 187.0L1751.6 186.5L1750.6 186.8L1749.6 186.2L1748.6 186.8L1747.6 186.4L1746.6 186.2L1745.6 186.2L1744.6 186.4L1743.6 186.2L1742.6 186.2L1741.6 186.2L1740.6 186.2L1739.6 182.4L1738.6 182.2L1737.6 182.3L1736.6 182.2L1735.6 182.3L1734.6 182.3L1733.6 182.4L1732.6 182.4L1731.6 182.5L1730.6 182.5L1729.6 182.5L1728.6 182.3L1727.6 182.3L1726.6 182.4L1725.6 182.2L1724.6 182.2L1723.6 182.2L1722.6 186.3L1721.6 187.1L1720.6 187.1L1719.6 186.7L1718.6 187.2L1717.6 187.1L1716.6 186.8L1715.6 186.8L1714.6 186.6L1713.6 186.7L1712.6 186.8L1711.6 187.2L1710.6 186.5L1709.6 186.5L1708.6 186.7L1707.6 186.5L1706.6 187.0L1705.6 186.8L1704.6 186.9L1703.6 186.2L1702.6 186.2L1701.6 186.2L1700.6 186.3L1699.6 185.9L1698.6 186.2L1697.6 186.0L1696.6 186.1L1695.6 186.3L1694.6 186.0L1693.6 186.4L1692.6 186.4L1691.6 186.2L1690.6 186.2L1689.6 186.3L1688.6 186.6L1687.6 186.0L1686.6 186.2L1685.6 186.6L1684.6 186.1L1683.6 185.9L1682.6 186.1L1681.6 185.8L1680.6 186.3L1679.6 185.7L1678.6 186.2L1677.6 186.0L1676.6 185.6L1675.6 185.8L1674.6 186.4L1673.6 186.5L1672.6 186.6L1671.6 186.7L1670.6 186.9L1669.6 187.0L1668.6 187.0L1667.6 186.7L1666.6 186.9L1665.6 186.7L1664.6 187.1L1663.6 186.5L1662.6 186.6L1661.6 186.6L1660.6 186.3L1659.6 186.3L1658.6 186.7L1657.6 186.5L1656.6 186.2L1655.6 186.4L1654.6 186.3L1653.6 185.8L1652.6 185.9L1651.6 186.0L1650.6 186.0L1649.6 186.1L1648.6 185.8L1647.6 186.0L1646.6 185.6L1645.6 185.8L1644.6 185.7L1643.6 186.0L1642.6 185.8L1641.6 185.5L1640.6 185.6L1639.6 185.4L1638.6 182.8L1637.6 182.9L1636.6 182.8L1635.6 182.8L1634.6 182.7L1633.6 182.8L1632.6 182.9L1631.6 183.1L1630.6 186.0L1629.6 186.0L1628.6 186.0L1627.6 187.4L1626.6 186.4L1625.6 183.2L1624.6 183.1L1623.6 183.1L1622.6 183.1L1621.6 183.1L1620.6 183.1L1619.6 183.1L1618.6 183.2L1617.6 185.3L1616.6 188.4L1615.6 184.6L1614.6 184.6L1613.6 184.4L1612.6 184.3L1611.6 184.1L1610.6 182.0L1609.6 182.0L1608.6 182.0L1607.6 182.0L1606.6 182.0L1605.6 182.0L1604.6 187.1L1603.6 182.0L1602.6 182.0L1601.6 182.0L1600.6 182.0L1599.6 182.0L1598.6 182.0L1597.6 182.0L1596.6 182.0L1595.6 182.0L1594.6 182.5L1593.6 182.9L1592.6 183.1L1591.6 183.0L1590.6 182.8L1589.6 182.4L1588.6 182.0L1587.6 182.0L1586.6 182.0L1585.6 182.0L1584.6 182.0L1583.6 182.0L1582.6 186.4L1581.6 187.5L1580.6 187.5L1579.6 187.2L1578.6 186.6L1577.6 186.8L1576.6 187.0L1575.6 186.8L1574.6 187.0L1573.6 186.7L1572.6 186.8L1571.6 186.3L1570.6 185.7L1569.6 183.2L1568.6 182.3L1567.6 182.3L1566.6 182.1L1565.6 182.0L1564.6 182.0L1563.6 182.0L1562.6 182.0L1561.6 182.0L1560.6 182.0L1559.6 182.0L1558.6 186.6L1557.6 186.7L1556.6 187.1L1555.6 187.0L1554.6 187.2L1553.6 187.3L1552.6 186.8L1551.6 187.0L1550.6 186.9L1549.6 186.8L1548.6 187.2L1547.6 186.9L1546.6 186.8L1545.6 187.0L1544.6 187.4L1543.6 187.5L1542.6 187.0L1541.6 187.0L1540.6 186.9L1539.6 187.3L1538.6 186.8L1537.6 187.1L1536.6 187.5L1535.6 187.1L1534.6 187.5L1533.6 187.6L1532.6 187.2L1531.6 187.3L1530.6 187.5L1529.6 187.3L1528.6 187.4L1527.6 187.4L1526.6 186.9L1525.6 187.6L1524.6 186.9L1523.6 187.0L1522.6 186.9L1521.6 187.1L1520.6 186.8L1519.6 187.0L1518.6 187.4L1517.6 187.0L1516.6 186.6L1515.6 186.9L1514.6 186.5L1513.6 186.9L1512.6 186.5L1511.6 186.9L1510.6 186.5L1509.6 186.0L1508.6 186.0L1507.6 186.1L1506.6 186.6L1505.6 186.8L1504.6 186.6L1503.6 186.8L1502.6 186.9L1501.6 186.9L1500.6 186.8L1499.6 186.6L1498.6 186.6L1497.6 187.4L1496.6 186.8L1495.6 187.4L1494.6 187.4L1493.6 187.5L1492.6 187.1L1491.6 187.7L1490.6 187.5L1489.6 187.4L1488.6 187.1L1487.6 187.0L1486.6 187.1L1485.6 187.0L1484.6 187.3L1483.6 187.0L1482.6 187.4L1481.6 187.2L1480.6 187.3L1479.6 186.7L1478.6 186.6L1477.6 186.9L1476.6 187.2L1475.6 186.8L1474.6 186.8L1473.6 187.1L1472.6 186.5L1471.6 186.8L1470.6 186.2L1469.6 186.8L1468.6 186.4L1467.6 186.5L1466.6 186.0L1465.6 186.0L1464.6 186.3L1463.6 186.1L1462.6 186.2L1461.6 182.2L1460.6 182.2L1459.6 182.2L1458.6 182.3L1457.6 182.3L1456.6 182.4L1455.6 182.4L1454.6 182.5L1453.6 182.4L1452.6 182.5L1451.6 182.5L1450.6 182.3L1449.6 182.4L1448.6 182.3L1447.6 182.3L1446.6 182.2L1445.6 182.2L1444.6 187.0L1443.6 186.7L1442.6 187.0L1441.6 187.2L1440.6 187.0L1439.6 186.9L1438.6 187.1L1437.6 187.1L1436.6 186.8L1435.6 186.7L1434.6 186.6L1433.6 186.8L1432.6 187.1L1431.6 186.5L1430.6 187.1L1429.6 186.8L1428.6 186.6L1427.6 186.6L1426.6 186.3L1425.6 186.4L1424.6 186.7L1423.6 186.1L1422.6 186.2L1421.6 186.0L1420.6 186.5L1419.6 185.9L1418.6 186.4L1417.6 186.4L1416.6 186.3L1415.6 186.5L1414.6 186.1L1413.6 186.5L1412.6 186.5L1411.6 186.4L1410.6 186.5L1409.6 186.2L1408.6 186.6L1407.6 186.2L1406.6 186.5L1405.6 186.0L1404.6 186.4L1403.6 185.8L1402.6 186.1L1401.6 186.1L1400.6 185.9L1399.6 185.6L1398.6 185.2L1397.6 185.6L1396.6 185.9L1395.6 186.8L1394.6 186.6L1393.6 186.5L1392.6 186.6L1391.6 186.9L1390.6 186.8L1389.6 187.3L1388.6 187.2L1387.6 187.1L1386.6 186.6L1385.6 187.1L1384.6 186.9L1383.6 186.6L1382.6 186.5L1381.6 186.3L1380.6 186.2L1379.6 186.5L1378.6 186.1L1377.6 186.5L1376.6 186.1L1375.6 186.1L1374.6 186.4L1373.6 186.0L1372.6 186.1L1371.6 186.1L1370.6 185.9L1369.6 185.7L1368.6 185.9L1367.6 185.7L1366.6 185.9L1365.6 185.4L1364.6 186.0L1363.6 185.5L1362.6 185.7L1361.6 185.3L1360.6 182.8L1359.6 182.9L1358.6 182.8L1357.6 182.9L1356.6 182.8L1355.6 182.7L1354.6 182.9L1353.6 184.5L1352.6 185.8L1351.6 185.7L1350.6 186.4L1349.6 187.4L1348.6 186.4L1347.6 183.1L1346.6 183.1L1345.6 183.2L1344.6 183.2L1343.6 183.1L1342.6 183.1L1341.6 183.0L1340.6 183.1L1339.6 185.2L1338.6 188.4L1337.6 184.6L1336.6 184.5L1335.6 184.4L1334.6 184.1L1333.6 184.2L1332.6 182.0L1331.6 182.0L1330.6 182.0L1329.6 182.0L1328.6 182.0L1327.6 182.0L1326.6 187.1L1325.6 182.0L1324.6 182.0L1323.6 182.0L1322.6 182.0L1321.6 182.0L1320.6 182.0L1319.6 182.0L1318.6 182.0L1317.6 182.0L1316.6 182.5L1315.6 183.0L1314.6 183.0L1313.6 183.0L1312.6 182.6L1311.6 182.4L1310.6 182.0L1309.6 182.0L1308.6 182.0L1307.6 182.0L1306.6 182.0L1305.6 182.2L1304.6 186.5L1303.6 187.4L1302.6 187.2L1301.6 186.8L1300.6 187.0L1299.6 187.1L1298.6 186.5L1297.6 186.4L1296.6 187.0L1295.6 186.7L1294.6 186.3L1293.6 186.6L1292.6 185.2L1291.6 182.3L1290.6 182.4L1289.6 182.3L1288.6 182.0L1287.6 182.0L1286.6 182.0L1285.6 182.0L1284.6 182.0L1283.6 182.0L1282.6 182.0L1281.6 183.3L1280.6 187.3L1279.6 186.9L1278.6 187.3L1277.6 186.7L1276.6 187.3L1275.6 187.0L1274.6 187.3L1273.6 186.7L1272.6 187.3L1271.6 187.0L1270.6 187.1L1269.6 187.4L1268.6 186.7L1267.6 186.8L1266.6 186.9L1265.6 187.3L1264.6 187.5L1263.6 186.8L1262.6 187.0L1261.6 187.1L1260.6 186.8L1259.6 187.2L1258.6 187.1L1257.6 187.2L1256.6 187.1L1255.6 187.3L1254.6 186.8L1253.6 187.1L1252.6 187.2L1251.6 187.1L1250.6 187.6L1249.6 187.5L1248.6 187.5L1247.6 187.1L1246.6 186.9L1245.6 187.5L1244.6 187.5L1243.6 187.0L1242.6 187.2L1241.6 187.5L1240.6 187.1L1239.6 187.4L1238.6 187.0L1237.6 187.1L1236.6 187.1L1235.6 186.8L1234.6 186.6L1233.6 186.7L1232.6 186.3L1231.6 186.0L1230.6 186.2L1229.6 186.5L1228.6 186.7L1227.6 186.2L1226.6 186.9L1225.6 186.4L1224.6 187.0L1223.6 186.9L1222.6 186.6L1221.6 186.7L1220.6 187.2L1219.6 186.8L1218.6 186.7L1217.6 187.2L1216.6 187.0L1215.6 187.3L1214.6 187.6L1213.6 187.1L1212.6 187.3L1211.6 187.1L1210.6 187.4L1209.6 187.0L1208.6 187.6L1207.6 186.9L1206.6 187.5L1205.6 187.4L1204.6 186.9L1203.6 186.6L1202.6 187.0L1201.6 187.2L1200.6 187.3L1199.6 186.6L1198.6 186.9L1197.6 186.5L1196.6 186.7L1195.6 186.9L1194.6 186.6L1193.6 186.8L1192.6 186.2L1191.6 186.6L1190.6 186.5L1189.6 186.0L1188.6 186.3L1187.6 185.9L1186.6 186.3L1185.6 186.2L1184.6 185.8L1183.6 182.2L1182.6 182.2L1181.6 182.3L1180.6 182.4L1179.6 182.4L1178.6 182.3L1177.6 182.4L1176.6 182.4L1175.6 182.4L1174.6 182.4L1173.6 182.4L1172.6 182.4L1171.6 182.4L1170.6 182.3L1169.6 182.3L1168.6 182.2L1167.6 182.1L1166.6 187.2L1165.6 186.9L1164.6 187.1L1163.6 186.6L1162.6 186.6L1161.6 186.6L1160.6 186.7L1159.6 187.2L1158.6 186.5L1157.6 187.2L1156.6 186.6L1155.6 186.7L1154.6 186.9L1153.6 186.4L1152.6 186.4L1151.6 186.8L1150.6 186.8L1149.6 186.8L1148.6 186.5L1147.6 186.8L1146.6 186.6L1145.6 186.6L1144.6 185.9L1143.6 186.0L1142.6 186.1L1141.6 186.1L1140.6 186.1L1139.6 186.4L1138.6 186.1L1137.6 186.3L1136.6 186.6L1135.6 186.7L1134.6 186.2L1133.6 186.5L1132.6 186.7L1131.6 186.6L1130.6 186.3L1129.6 186.2L1128.6 186.2L1127.6 186.1L1126.6 186.2L1125.6 186.3L1124.6 185.9L1123.6 185.9L1122.6 186.1L1121.6 186.0L1120.6 185.2L1119.6 185.8L1118.6 186.0L1117.6 186.8L1116.6 187.1L1115.6 187.0L1114.6 186.9L1113.6 187.2L1112.6 186.6L1111.6 187.2L1110.6 186.8L1109.6 186.9L1108.6 186.9L1107.6 186.6L1106.6 186.9L1105.6 186.4L1104.6 186.3L1103.6 186.7L1102.6 186.7L1101.6 186.1L1100.6 186.2L1099.6 186.0L1098.6 186.5L1097.6 186.1L1096.6 186.0L1095.6 186.3L1094.6 185.8L1093.6 185.6L1092.6 186.0L1091.6 185.8L1090.6 185.7L1089.6 186.0L1088.6 185.6L1087.6 185.6L1086.6 185.5L1085.6 185.4L1084.6 185.7L1083.6 185.1L1082.6 182.8L1081.6 182.8L1080.6 182.9L1079.6 182.8L1078.6 182.9L1077.6 182.7L1076.6 182.8L1075.6 185.7L1074.6 186.1L1073.6 185.8L1072.6 187.4L1071.6 186.0L1070.6 186.0L1069.6 183.2L1068.6 183.2L1067.6 183.1L1066.6 183.2L1065.6 183.2L1064.6 183.1L1063.6 183.2L1062.6 183.3L1061.6 185.2L1060.6 188.4L1059.6 184.4L1058.6 184.4L1057.6 184.2L1056.6 184.2L1055.6 184.0L1054.6 182.0L1053.6 182.0L1052.6 182.0L1051.6 182.0L1050.6 182.0L1049.6 182.0L1048.6 187.1L1047.6 182.0L1046.6 182.0L1045.6 182.0L1044.6 182.0L1043.6 182.0L1042.6 182.0L1041.6 182.0L1040.6 182.0L1039.6 182.2L1038.6 182.7L1037.6 183.1L1036.6 183.1L1035.6 183.0L1034.6 182.6L1033.6 182.2L1032.6 182.0L1031.6 182.0L1030.6 182.0L1029.6 182.0L1028.6 182.0L1027.6 182.9L1026.6 186.8L1025.6 187.2L1024.6 187.6L1023.6 187.4L1022.6 187.3L1021.6 186.6L1020.6 186.8L1019.6 186.9L1018.6 186.9L1017.6 186.6L1016.6 186.7L1015.6 186.2L1014.6 185.0L1013.6 182.3L1012.6 182.4L1011.6 182.3L1010.6 182.0L1009.6 182.0L1008.6 182.0L1007.6 182.0L1006.6 182.0L1005.6 182.0L1004.6 182.0L1003.6 187.3L1002.6 187.0L1001.6 187.0L1000.6 186.8L999.6 187.0L998.6 187.4L997.6 187.2L996.6 187.1L995.6 187.4L994.6 187.2L993.6 187.2L992.6 187.2L991.6 186.9L990.6 186.9L989.6 187.1L988.6 186.9L987.6 187.3L986.6 187.3L985.6 187.1L984.6 187.0L983.6 187.1L982.6 187.1L981.6 187.0L980.6 187.0L979.6 187.1L978.6 187.1L977.6 187.2L976.6 187.1L975.6 187.0L974.6 187.5L973.6 186.8L972.6 187.3L971.6 187.4L970.6 187.4L969.6 186.9L968.6 187.5L967.6 187.5L966.6 187.3L965.6 187.3L964.6 186.9L963.6 186.9L962.6 187.4L961.6 187.2L960.6 187.1L959.6 187.1L958.6 187.2L957.6 186.6L956.6 186.6L955.6 186.1L954.6 185.9L953.6 186.2L952.6 186.0L951.6 186.1L950.6 186.7L949.6 186.5L948.6 186.5L947.6 187.1L946.6 186.4L945.6 186.5L944.6 186.8L943.6 187.1L942.6 186.6L941.6 187.0L940.6 187.1L939.6 187.3L938.6 187.2L937.6 187.6L936.6 187.0L935.6 187.2L934.6 187.7L933.6 187.0L932.6 187.2L931.6 187.4L930.6 187.2L929.6 187.1L928.6 187.3L927.6 187.4L926.6 187.3L925.6 187.1L924.6 187.3L923.6 186.6L922.6 187.2L921.6 186.7L920.6 187.1L919.6 186.9L918.6 186.6L917.6 186.8L916.6 186.7L915.6 186.4L914.6 186.2L913.6 186.7L912.6 186.5L911.6 186.2L910.6 185.9L909.6 186.1L908.6 185.8L907.6 185.8L906.6 186.0L905.6 182.2L904.6 182.2L903.6 182.3L902.6 182.3L901.6 182.3L900.6 182.4L899.6 182.5L898.6 182.5L897.6 182.5L896.6 182.5L895.6 182.4L894.6 182.4L893.6 182.4L892.6 182.3L891.6 182.2L890.6 182.2L889.6 182.2L888.6 187.1L887.6 186.7L886.6 187.0L885.6 187.1L884.6 187.1L883.6 187.1L882.6 186.7L881.6 187.2L880.6 186.5L879.6 186.8L878.6 186.7L877.6 186.9L876.6 186.7L875.6 186.5L874.6 186.5L873.6 186.3L872.6 186.5L871.6 186.8L870.6 186.1L869.6 186.4L868.6 186.3L867.6 186.1L866.6 186.4L865.6 186.4L864.6 186.0L863.6 186.1L862.6 186.5L861.6 186.5L860.6 186.3L859.6 186.0L858.6 186.4L857.6 186.4L856.6 186.1L855.6 186.0L854.6 186.1L853.6 186.5L852.6 186.5L851.6 186.0L850.6 185.9L849.6 186.3L848.6 185.9L847.6 186.4L846.6 185.9L845.6 185.7L844.6 186.1L843.6 185.3L842.6 185.5L841.6 186.0L840.6 186.1L839.6 186.6L838.6 186.6L837.6 186.5L836.6 186.9L835.6 186.9L834.6 187.0L833.6 187.0L832.6 186.9L831.6 187.1L830.6 186.7L829.6 186.5L828.6 186.5L827.6 186.4L826.6 186.8L825.6 186.6L824.6 186.6L823.6 186.2L822.6 186.6L821.6 186.4L820.6 185.9L819.6 185.9L818.6 186.4L817.6 186.0L816.6 186.3L815.6 185.7L814.6 185.9L813.6 186.0L812.6 186.0L811.6 185.8L810.6 185.5L809.6 185.5L808.6 185.8L807.6 185.4L806.6 185.8L805.6 183.4L804.6 182.7L803.6 182.8L802.6 182.8L801.6 182.7L800.6 182.7L799.6 182.8L798.6 182.9L797.6 185.7L796.6 185.9L795.6 185.8L794.6 187.4L793.6 185.8L792.6 183.1L791.6 183.2L790.6 183.1L789.6 183.3L788.6 183.2L787.6 183.2L786.6 183.3L785.6 183.1L784.6 183.1L783.6 188.4L782.6 188.4L781.6 184.5L780.6 184.6L779.6 184.4L778.6 184.3L777.6 183.0L776.6 182.0L775.6 182.0L774.6 182.0L773.6 182.0L772.6 182.0L771.6 187.1L770.6 187.1L769.6 182.0L768.6 182.0L767.6 182.0L766.6 182.0L765.6 182.0L764.6 182.0L763.6 182.0L762.6 182.0L761.6 182.4L760.6 182.8L759.6 183.1L758.6 183.1L757.6 182.8L756.6 182.5L755.6 182.0L754.6 182.0L753.6 182.0L752.6 182.0L751.6 182.0L750.6 182.0L749.6 184.3L748.6 186.9L747.6 187.8L746.6 187.5L745.6 187.4L744.6 187.3L743.6 187.0L742.6 186.8L741.6 187.0L740.6 186.6L739.6 186.4L738.6 186.3L737.6 186.0L736.6 184.6L735.6 182.3L734.6 182.4L733.6 182.2L732.6 182.0L731.6 182.0L730.6 182.0L729.6 182.0L728.6 182.0L727.6 182.0L726.6 182.0L725.6 187.1L724.6 187.0L723.6 186.7L722.6 187.1L721.6 187.1L720.6 187.4L719.6 187.0L718.6 187.3L717.6 187.3L716.6 187.2L715.6 187.2L714.6 187.0L713.6 187.2L712.6 187.2L711.6 186.9L710.6 187.5L709.6 187.1L708.6 187.0L707.6 187.5L706.6 187.2L705.6 187.0L704.6 187.2L703.6 187.4L702.6 187.5L701.6 187.5L700.6 187.5L699.6 186.8L698.6 187.1L697.6 187.1L696.6 187.5L695.6 187.2L694.6 186.9L693.6 187.4L692.6 187.1L691.6 187.3L690.6 187.5L689.6 187.3L688.6 187.1L687.6 187.5L686.6 186.8L685.6 186.8L684.6 186.9L683.6 186.7L682.6 187.1L681.6 186.7L680.6 187.2L679.6 186.6L678.6 186.9L677.6 186.6L676.6 186.4L675.6 186.0L674.6 185.8L673.6 186.6L672.6 186.2L671.6 186.5L670.6 186.9L669.6 186.9L668.6 186.6L667.6 186.8L666.6 187.2L665.6 187.1L664.6 187.2L663.6 186.7L662.6 187.1L661.6 186.9L660.6 187.4L659.6 187.5L658.6 187.4L657.6 187.2L656.6 187.3L655.6 187.1L654.6 187.6L653.6 187.5L652.6 186.9L651.6 187.2L650.6 187.4L649.6 187.1L648.6 187.4L647.6 186.7L646.6 186.9L645.6 187.2L644.6 186.9L643.6 186.6L642.6 186.9L641.6 186.8L640.6 186.6L639.6 186.6L638.6 187.0L637.6 186.4L636.6 186.8L635.6 186.5L634.6 186.4L633.6 186.6L632.6 186.2L631.6 186.2L630.6 185.8L629.6 185.9L628.6 183.1L627.6 182.2L626.6 182.3L625.6 182.3L624.6 182.3L623.6 182.3L622.6 182.4L621.6 182.5L620.6 182.5L619.6 182.5L618.6 182.5L617.6 182.4L616.6 182.3L615.6 182.4L614.6 182.3L613.6 182.2L612.6 182.2L611.6 185.5L610.6 187.2L609.6 187.0L608.6 187.2L607.6 187.3L606.6 187.2L605.6 186.9L604.6 187.2L603.6 186.8L602.6 186.6L601.6 186.7L600.6 186.9L599.6 186.9L598.6 187.0L597.6 186.8L596.6 186.6L595.6 186.8L594.6 186.5L593.6 186.4L592.6 186.4L591.6 186.7L590.6 186.4L589.6 186.6L588.6 186.1L587.6 186.3L586.6 186.2L585.6 186.0L584.6 186.0L583.6 186.2L582.6 186.6L581.6 186.3L580.6 186.5L579.6 186.4L578.6 186.7L577.6 186.7L576.6 186.3L575.6 186.1L574.6 186.2L573.6 186.0L572.6 186.3L571.6 186.4L570.6 186.2L569.6 186.0L568.6 186.1L567.6 185.8L566.6 185.8L565.6 185.7L564.6 185.9L563.6 186.2L562.6 186.4L561.6 186.6L560.6 186.6L559.6 186.7L558.6 187.1L557.6 187.2L556.6 187.1L555.6 187.1L554.6 186.7L553.6 187.2L552.6 187.2L551.6 186.9L550.6 187.0L549.6 186.7L548.6 186.2L547.6 186.2L546.6 186.4L545.6 186.7L544.6 186.4L543.6 186.1L542.6 185.9L541.6 185.8L540.6 185.8L539.6 186.1L538.6 185.6L537.6 185.6L536.6 185.8L535.6 186.0L534.6 186.0L533.6 185.6L532.6 185.6L531.6 185.4L530.6 185.7L529.6 185.5L528.6 185.7L527.6 182.7L526.6 182.9L525.6 182.9L524.6 182.9L523.6 182.9L522.6 182.9L521.6 182.8L520.6 182.9L519.6 185.7L518.6 186.1L517.6 186.3L516.6 187.4L515.6 186.2L514.6 183.2L513.6 183.1L512.6 183.2L511.6 183.1L510.6 183.1L509.6 183.1L508.6 183.1L507.6 183.1L506.6 183.0Z" fill="#3a5046"/><path d="M506.6 200.7L507.6 200.8L508.6 200.7L509.6 200.8L510.6 200.9L511.6 200.8L512.6 200.7L513.6 200.8L514.6 200.8L515.6 197.4L516.6 196.5L517.6 197.9L518.6 198.0L519.6 198.3L520.6 201.1L521.6 201.2L522.6 201.2L523.6 201.1L524.6 201.3L525.6 201.1L526.6 201.1L527.6 201.1L528.6 199.0L529.6 198.5L530.6 198.7L531.6 198.7L532.6 198.4L533.6 198.4L534.6 198.2L535.6 198.3L536.6 198.0L537.6 197.7L538.6 198.0L539.6 198.1L540.6 198.0L541.6 197.6L542.6 197.8L543.6 197.2L544.6 197.7L545.6 197.7L546.6 197.7L547.6 197.2L548.6 197.2L549.6 197.6L550.6 197.5L551.6 197.6L552.6 196.9L553.6 197.6L554.6 197.1L555.6 197.4L556.6 197.6L557.6 197.0L558.6 197.0L559.6 197.1L560.6 197.2L561.6 197.3L562.6 197.7L563.6 198.1L564.6 198.0L565.6 198.3L566.6 198.0L567.6 198.1L568.6 197.9L569.6 198.0L570.6 198.1L571.6 197.8L572.6 197.8L573.6 197.7L574.6 197.4L575.6 197.9L576.6 197.5L577.6 197.6L578.6 197.5L579.6 197.8L580.6 198.0L581.6 197.7L582.6 197.9L583.6 197.7L584.6 198.1L585.6 197.8L586.6 198.1L587.6 198.2L588.6 198.0L589.6 197.8L590.6 197.8L591.6 197.1L592.6 196.9L593.6 197.6L594.6 196.9L595.6 197.4L596.6 197.4L597.6 197.1L598.6 197.3L599.6 197.0L600.6 196.8L601.6 196.8L602.6 197.0L603.6 197.1L604.6 196.8L605.6 196.7L606.6 196.7L607.6 196.6L608.6 197.1L609.6 196.6L610.6 196.9L611.6 198.3L612.6 201.7L613.6 201.7L614.6 201.7L615.6 201.6L616.6 201.6L617.6 201.5L618.6 201.5L619.6 201.4L620.6 201.5L621.6 201.6L622.6 201.6L623.6 201.6L624.6 201.6L625.6 201.6L626.6 201.7L627.6 201.7L628.6 200.8L629.6 198.1L630.6 197.9L631.6 197.6L632.6 197.9L633.6 197.7L634.6 197.5L635.6 197.5L636.6 197.9L637.6 197.8L638.6 197.3L639.6 197.2L640.6 197.3L641.6 197.5L642.6 197.6L643.6 197.4L644.6 197.5L645.6 197.6L646.6 197.2L647.6 197.2L648.6 197.2L649.6 196.8L650.6 196.9L651.6 196.8L652.6 196.9L653.6 197.4L654.6 197.1L655.6 196.7L656.6 197.2L657.6 197.3L658.6 197.1L659.6 196.7L660.6 197.2L661.6 196.8L662.6 197.1L663.6 196.9L664.6 196.9L665.6 197.0L666.6 197.3L667.6 196.9L668.6 197.1L669.6 197.3L670.6 197.0L671.6 197.5L672.6 197.0L673.6 197.5L674.6 198.2L675.6 198.4L676.6 198.3L677.6 197.8L678.6 197.7L679.6 196.9L680.6 196.9L681.6 196.9L682.6 196.7L683.6 196.8L684.6 196.8L685.6 196.8L686.6 197.2L687.6 197.0L688.6 196.8L689.6 196.9L690.6 196.5L691.6 197.0L692.6 196.9L693.6 196.5L694.6 197.1L695.6 196.6L696.6 196.9L697.6 196.7L698.6 196.7L699.6 196.8L700.6 196.8L701.6 197.2L702.6 196.7L703.6 197.0L704.6 196.8L705.6 196.7L706.6 197.1L707.6 196.8L708.6 196.7L709.6 196.9L710.6 196.8L711.6 197.1L712.6 197.2L713.6 196.7L714.6 196.5L715.6 196.7L716.6 197.0L717.6 196.9L718.6 197.2L719.6 196.5L720.6 196.6L721.6 197.1L722.6 196.8L723.6 196.4L724.6 196.7L725.6 197.2L726.6 202.0L727.6 202.0L728.6 202.0L729.6 202.0L730.6 202.0L731.6 202.0L732.6 202.0L733.6 201.3L734.6 200.9L735.6 201.5L736.6 199.0L737.6 197.9L738.6 197.1L739.6 197.5L740.6 197.5L741.6 196.9L742.6 197.0L743.6 196.9L744.6 197.0L745.6 196.3L746.6 196.4L747.6 195.8L748.6 196.6L749.6 199.7L750.6 202.0L751.6 202.0L752.6 202.0L753.6 202.0L754.6 202.0L755.6 202.0L756.6 201.5L757.6 200.9L758.6 200.9L759.6 201.1L760.6 201.4L761.6 201.8L762.6 202.0L763.6 202.0L764.6 202.0L765.6 202.0L766.6 202.0L767.6 202.0L768.6 201.7L769.6 201.7L770.6 197.4L771.6 197.4L772.6 201.8L773.6 201.8L774.6 202.0L775.6 202.0L776.6 202.0L777.6 201.0L778.6 199.7L779.6 199.7L780.6 199.9L781.6 199.6L782.6 195.8L783.6 195.8L784.6 200.9L785.6 200.7L786.6 200.8L787.6 200.7L788.6 200.9L789.6 200.7L790.6 200.7L791.6 200.7L792.6 200.9L793.6 197.5L794.6 196.5L795.6 197.7L796.6 198.0L797.6 198.2L798.6 201.1L799.6 201.1L800.6 201.2L801.6 201.3L802.6 201.1L803.6 201.2L804.6 201.2L805.6 200.8L806.6 198.8L807.6 198.5L808.6 198.7L809.6 198.3L810.6 198.5L811.6 198.3L812.6 198.2L813.6 198.4L814.6 198.3L815.6 197.9L816.6 198.1L817.6 198.1L818.6 197.4L819.6 197.5L820.6 197.3L821.6 197.8L822.6 197.2L823.6 197.7L824.6 197.3L825.6 197.6L826.6 197.5L827.6 197.4L828.6 197.4L829.6 196.9L830.6 197.4L831.6 197.3L832.6 197.1L833.6 197.1L834.6 197.3L835.6 197.0L836.6 197.1L837.6 197.4L838.6 197.4L839.6 197.6L840.6 197.7L841.6 198.0L842.6 198.5L843.6 198.3L844.6 197.8L845.6 198.0L846.6 198.2L847.6 198.2L848.6 197.9L849.6 198.1L850.6 198.0L851.6 198.0L852.6 197.6L853.6 197.8L854.6 198.1L855.6 197.9L856.6 197.4L857.6 197.8L858.6 197.5L859.6 197.8L860.6 197.6L861.6 197.6L862.6 197.9L863.6 197.8L864.6 198.2L865.6 197.7L866.6 197.9L867.6 197.7L868.6 197.4L869.6 197.3L870.6 197.0L871.6 196.8L872.6 197.2L873.6 196.8L874.6 196.7L875.6 197.4L876.6 196.8L877.6 197.0L878.6 197.2L879.6 197.2L880.6 197.2L881.6 196.7L882.6 197.0L883.6 197.4L884.6 196.7L885.6 197.0L886.6 196.7L887.6 196.8L888.6 197.2L889.6 201.7L890.6 201.8L891.6 201.6L892.6 201.6L893.6 201.7L894.6 201.6L895.6 201.6L896.6 201.5L897.6 201.4L898.6 201.5L899.6 201.5L900.6 201.6L901.6 201.6L902.6 201.7L903.6 201.7L904.6 201.7L905.6 201.7L906.6 198.2L907.6 197.9L908.6 198.1L909.6 197.5L910.6 197.7L911.6 197.9L912.6 197.7L913.6 197.5L914.6 197.9L915.6 197.2L916.6 197.6L917.6 197.5L918.6 197.5L919.6 197.1L920.6 197.5L921.6 197.3L922.6 196.9L923.6 197.3L924.6 197.6L925.6 197.2L926.6 197.2L927.6 197.2L928.6 196.9L929.6 197.4L930.6 197.4L931.6 197.1L932.6 197.1L933.6 197.0L934.6 197.3L935.6 197.3L936.6 197.1L937.6 197.3L938.6 197.0L939.6 197.2L940.6 197.1L941.6 197.3L942.6 197.2L943.6 197.2L944.6 197.3L945.6 196.7L946.6 197.1L947.6 196.9L948.6 197.5L949.6 197.1L950.6 197.5L951.6 198.0L952.6 197.9L953.6 198.3L954.6 198.0L955.6 197.9L956.6 197.8L957.6 197.2L958.6 197.5L959.6 197.0L960.6 196.7L961.6 196.9L962.6 197.3L963.6 197.1L964.6 196.7L965.6 196.9L966.6 196.5L967.6 196.7L968.6 196.6L969.6 196.8L970.6 197.0L971.6 196.9L972.6 196.5L973.6 197.3L974.6 197.1L975.6 196.9L976.6 196.5L977.6 197.2L978.6 196.5L979.6 197.0L980.6 196.6L981.6 196.9L982.6 196.8L983.6 196.9L984.6 197.1L985.6 196.5L986.6 197.2L987.6 196.5L988.6 196.6L989.6 197.0L990.6 196.7L991.6 197.1L992.6 196.5L993.6 196.7L994.6 197.0L995.6 196.9L996.6 196.7L997.6 196.7L998.6 196.8L999.6 196.4L1000.6 196.9L1001.6 196.6L1002.6 197.0L1003.6 197.3L1004.6 202.0L1005.6 202.0L1006.6 202.0L1007.6 202.0L1008.6 202.0L1009.6 202.0L1010.6 202.0L1011.6 201.1L1012.6 200.9L1013.6 202.0L1014.6 198.6L1015.6 197.7L1016.6 197.1L1017.6 197.5L1018.6 197.5L1019.6 197.3L1020.6 197.4L1021.6 197.2L1022.6 196.7L1023.6 196.8L1024.6 196.8L1025.6 196.2L1026.6 196.8L1027.6 201.0L1028.6 202.0L1029.6 202.0L1030.6 202.0L1031.6 202.0L1032.6 202.0L1033.6 201.9L1034.6 201.4L1035.6 200.9L1036.6 201.0L1037.6 201.0L1038.6 201.4L1039.6 202.0L1040.6 202.0L1041.6 202.0L1042.6 202.0L1043.6 202.0L1044.6 202.0L1045.6 202.0L1046.6 201.7L1047.6 201.7L1048.6 197.4L1049.6 201.7L1050.6 201.7L1051.6 201.7L1052.6 202.0L1053.6 202.0L1054.6 202.0L1055.6 200.0L1056.6 199.7L1057.6 199.9L1058.6 199.8L1059.6 199.7L1060.6 195.8L1061.6 199.6L1062.6 200.7L1063.6 200.9L1064.6 200.7L1065.6 200.7L1066.6 200.7L1067.6 200.6L1068.6 200.8L1069.6 200.9L1070.6 197.4L1071.6 197.8L1072.6 196.5L1073.6 197.7L1074.6 198.0L1075.6 198.3L1076.6 201.1L1077.6 201.2L1078.6 201.2L1079.6 201.2L1080.6 201.2L1081.6 201.2L1082.6 201.1L1083.6 199.2L1084.6 198.9L1085.6 198.5L1086.6 198.8L1087.6 198.4L1088.6 198.2L1089.6 198.3L1090.6 198.1L1091.6 197.9L1092.6 198.1L1093.6 197.7L1094.6 197.8L1095.6 197.4L1096.6 197.9L1097.6 197.6L1098.6 197.6L1099.6 197.8L1100.6 197.7L1101.6 197.3L1102.6 197.3L1103.6 197.0L1104.6 197.0L1105.6 197.5L1106.6 197.5L1107.6 197.0L1108.6 197.4L1109.6 197.4L1110.6 197.3L1111.6 197.3L1112.6 197.2L1113.6 197.0L1114.6 197.3L1115.6 196.9L1116.6 197.4L1117.6 197.3L1118.6 197.6L1119.6 198.2L1120.6 198.3L1121.6 198.5L1122.6 197.9L1123.6 198.2L1124.6 198.3L1125.6 198.0L1126.6 198.1L1127.6 197.8L1128.6 197.6L1129.6 197.6L1130.6 197.9L1131.6 198.0L1132.6 197.9L1133.6 197.9L1134.6 197.8L1135.6 197.5L1136.6 198.0L1137.6 197.6L1138.6 197.6L1139.6 198.0L1140.6 197.8L1141.6 197.7L1142.6 198.1L1143.6 197.7L1144.6 197.9L1145.6 197.6L1146.6 197.6L1147.6 197.6L1148.6 197.3L1149.6 196.8L1150.6 197.2L1151.6 197.1L1152.6 196.8L1153.6 196.9L1154.6 196.7L1155.6 197.0L1156.6 196.8L1157.6 196.9L1158.6 197.2L1159.6 196.6L1160.6 196.9L1161.6 196.9L1162.6 197.1L1163.6 196.8L1164.6 196.6L1165.6 197.3L1166.6 197.3L1167.6 201.7L1168.6 201.7L1169.6 201.6L1170.6 201.6L1171.6 201.7L1172.6 201.6L1173.6 201.5L1174.6 201.5L1175.6 201.5L1176.6 201.6L1177.6 201.5L1178.6 201.7L1179.6 201.7L1180.6 201.6L1181.6 201.6L1182.6 201.6L1183.6 201.8L1184.6 197.9L1185.6 197.6L1186.6 198.0L1187.6 197.5L1188.6 197.6L1189.6 197.6L1190.6 197.9L1191.6 197.8L1192.6 197.4L1193.6 197.6L1194.6 197.6L1195.6 197.1L1196.6 197.3L1197.6 197.2L1198.6 197.1L1199.6 197.1L1200.6 197.2L1201.6 196.9L1202.6 197.0L1203.6 197.1L1204.6 197.4L1205.6 196.8L1206.6 196.9L1207.6 196.8L1208.6 197.0L1209.6 197.3L1210.6 196.7L1211.6 197.1L1212.6 197.3L1213.6 196.8L1214.6 197.2L1215.6 196.7L1216.6 196.7L1217.6 196.6L1218.6 197.3L1219.6 196.8L1220.6 197.3L1221.6 197.0L1222.6 197.3L1223.6 197.1L1224.6 197.2L1225.6 197.4L1226.6 197.5L1227.6 197.0L1228.6 197.8L1229.6 197.6L1230.6 198.1L1231.6 198.8L1232.6 198.3L1233.6 197.5L1234.6 197.1L1235.6 196.9L1236.6 196.9L1237.6 197.0L1238.6 197.3L1239.6 196.9L1240.6 197.3L1241.6 196.9L1242.6 196.6L1243.6 196.6L1244.6 196.9L1245.6 197.1L1246.6 196.6L1247.6 197.2L1248.6 196.6L1249.6 196.5L1250.6 196.6L1251.6 196.9L1252.6 197.1L1253.6 196.8L1254.6 196.5L1255.6 196.8L1256.6 197.1L1257.6 196.8L1258.6 197.0L1259.6 196.9L1260.6 196.8L1261.6 197.0L1262.6 196.5L1263.6 196.8L1264.6 197.2L1265.6 196.6L1266.6 196.7L1267.6 197.2L1268.6 197.2L1269.6 196.7L1270.6 196.6L1271.6 196.9L1272.6 197.0L1273.6 196.8L1274.6 196.7L1275.6 197.2L1276.6 196.4L1277.6 197.0L1278.6 197.0L1279.6 196.8L1280.6 196.7L1281.6 200.7L1282.6 202.0L1283.6 202.0L1284.6 202.0L1285.6 202.0L1286.6 202.0L1287.6 202.0L1288.6 202.0L1289.6 200.9L1290.6 200.9L1291.6 202.0L1292.6 198.4L1293.6 197.2L1294.6 197.3L1295.6 197.3L1296.6 197.3L1297.6 197.5L1298.6 197.0L1299.6 196.7L1300.6 196.5L1301.6 196.3L1302.6 196.0L1303.6 195.9L1304.6 197.0L1305.6 201.7L1306.6 202.0L1307.6 202.0L1308.6 202.0L1309.6 202.0L1310.6 202.0L1311.6 201.7L1312.6 201.2L1313.6 201.0L1314.6 201.0L1315.6 201.1L1316.6 201.6L1317.6 202.0L1318.6 202.0L1319.6 202.0L1320.6 202.0L1321.6 202.0L1322.6 202.0L1323.6 202.0L1324.6 201.8L1325.6 201.8L1326.6 197.4L1327.6 201.8L1328.6 201.8L1329.6 201.7L1330.6 202.0L1331.6 202.0L1332.6 202.0L1333.6 200.0L1334.6 199.7L1335.6 199.8L1336.6 199.8L1337.6 199.7L1338.6 195.8L1339.6 199.3L1340.6 200.8L1341.6 200.8L1342.6 200.7L1343.6 200.7L1344.6 200.8L1345.6 200.7L1346.6 200.7L1347.6 200.7L1348.6 197.5L1349.6 196.5L1350.6 197.7L1351.6 198.0L1352.6 198.0L1353.6 199.4L1354.6 201.3L1355.6 201.2L1356.6 201.1L1357.6 201.2L1358.6 201.3L1359.6 201.1L1360.6 201.2L1361.6 198.6L1362.6 198.6L1363.6 198.7L1364.6 198.8L1365.6 198.3L1366.6 198.2L1367.6 198.3L1368.6 198.5L1369.6 197.8L1370.6 198.2L1371.6 198.1L1372.6 197.9L1373.6 197.5L1374.6 197.7L1375.6 197.5L1376.6 197.5L1377.6 197.9L1378.6 197.6L1379.6 197.1L1380.6 197.1L1381.6 197.3L1382.6 197.4L1383.6 196.9L1384.6 196.9L1385.6 197.4L1386.6 197.2L1387.6 197.4L1388.6 197.0L1389.6 196.9L1390.6 197.4L1391.6 197.4L1392.6 197.5L1393.6 197.1L1394.6 197.1L1395.6 197.1L1396.6 197.6L1397.6 198.2L1398.6 198.4L1399.6 198.5L1400.6 198.3L1401.6 198.1L1402.6 198.2L1403.6 198.0L1404.6 197.8L1405.6 197.7L1406.6 197.6L1407.6 197.5L1408.6 197.5L1409.6 197.7L1410.6 197.5L1411.6 197.7L1412.6 197.5L1413.6 197.4L1414.6 198.0L1415.6 197.5L1416.6 197.6L1417.6 198.0L1418.6 197.9L1419.6 198.0L1420.6 198.3L1421.6 197.9L1422.6 197.8L1423.6 197.9L1424.6 197.7L1425.6 197.4L1426.6 197.5L1427.6 197.0L1428.6 197.4L1429.6 197.0L1430.6 197.0L1431.6 197.2L1432.6 196.8L1433.6 197.0L1434.6 196.9L1435.6 197.1L1436.6 197.2L1437.6 196.7L1438.6 197.1L1439.6 196.7L1440.6 197.3L1441.6 196.7L1442.6 196.9L1443.6 197.3L1444.6 196.9L1445.6 201.7L1446.6 201.7L1447.6 201.6L1448.6 201.7L1449.6 201.6L1450.6 201.5L1451.6 201.5L1452.6 201.5L1453.6 201.5L1454.6 201.6L1455.6 201.5L1456.6 201.6L1457.6 201.6L1458.6 201.6L1459.6 201.7L1460.6 201.7L1461.6 201.8L1462.6 197.7L1463.6 197.9L1464.6 197.6L1465.6 197.7L1466.6 197.7L1467.6 197.9L1468.6 197.5L1469.6 197.8L1470.6 197.7L1471.6 197.8L1472.6 197.8L1473.6 197.2L1474.6 197.2L1475.6 197.6L1476.6 197.6L1477.6 197.5L1478.6 197.3L1479.6 197.5L1480.6 197.3L1481.6 196.9L1482.6 197.2L1483.6 197.0L1484.6 197.3L1485.6 196.9L1486.6 197.4L1487.6 196.7L1488.6 196.9L1489.6 197.4L1490.6 197.4L1491.6 196.7L1492.6 197.2L1493.6 196.7L1494.6 197.1L1495.6 197.1L1496.6 197.0L1497.6 197.0L1498.6 196.8L1499.6 196.8L1500.6 197.0L1501.6 197.1L1502.6 196.9L1503.6 197.1L1504.6 197.4L1505.6 197.5L1506.6 197.3L1507.6 197.9L1508.6 198.6L1509.6 198.7L1510.6 198.3L1511.6 197.4L1512.6 197.5L1513.6 196.8L1514.6 196.9L1515.6 197.3L1516.6 197.2L1517.6 197.1L1518.6 197.1L1519.6 196.5L1520.6 197.0L1521.6 196.9L1522.6 196.9L1523.6 196.9L1524.6 197.0L1525.6 196.5L1526.6 197.0L1527.6 196.6L1528.6 196.8L1529.6 197.2L1530.6 196.7L1531.6 196.7L1532.6 196.7L1533.6 196.6L1534.6 196.5L1535.6 196.7L1536.6 197.0L1537.6 196.6L1538.6 196.9L1539.6 196.5L1540.6 196.7L1541.6 196.5L1542.6 197.0L1543.6 197.0L1544.6 197.2L1545.6 196.6L1546.6 196.7L1547.6 196.6L1548.6 196.5L1549.6 196.9L1550.6 196.7L1551.6 197.2L1552.6 197.1L1553.6 197.2L1554.6 196.7L1555.6 196.7L1556.6 196.5L1557.6 196.6L1558.6 197.1L1559.6 202.0L1560.6 202.0L1561.6 202.0L1562.6 202.0L1563.6 202.0L1564.6 202.0L1565.6 202.0L1566.6 201.7L1567.6 200.8L1568.6 200.8L1569.6 200.9L1570.6 198.0L1571.6 197.1L1572.6 197.5L1573.6 197.5L1574.6 197.5L1575.6 197.3L1576.6 197.1L1577.6 197.0L1578.6 196.3L1579.6 196.6L1580.6 196.0L1581.6 196.4L1582.6 197.5L1583.6 202.0L1584.6 202.0L1585.6 202.0L1586.6 202.0L1587.6 202.0L1588.6 202.0L1589.6 201.6L1590.6 201.2L1591.6 200.9L1592.6 201.0L1593.6 201.2L1594.6 201.7L1595.6 202.0L1596.6 202.0L1597.6 202.0L1598.6 202.0L1599.6 202.0L1600.6 202.0L1601.6 202.0L1602.6 201.7L1603.6 201.8L1604.6 197.4L1605.6 201.7L1606.6 201.8L1607.6 201.9L1608.6 202.0L1609.6 202.0L1610.6 202.0L1611.6 200.1L1612.6 199.8L1613.6 199.7L1614.6 199.9L1615.6 199.8L1616.6 195.8L1617.6 199.6L1618.6 200.9L1619.6 200.8L1620.6 200.7L1621.6 200.9L1622.6 200.9L1623.6 200.8L1624.6 200.7L1625.6 200.8L1626.6 197.4L1627.6 196.5L1628.6 197.8L1629.6 197.7L1630.6 198.1L1631.6 201.0L1632.6 201.2L1633.6 201.3L1634.6 201.2L1635.6 201.3L1636.6 201.1L1637.6 201.3L1638.6 201.1L1639.6 199.0L1640.6 198.8L1641.6 198.5L1642.6 198.6L1643.6 198.2L1644.6 198.6L1645.6 198.1L1646.6 197.9L1647.6 198.0L1648.6 197.9L1649.6 198.2L1650.6 197.6L1651.6 198.0L1652.6 197.4L1653.6 197.4L1654.6 197.7L1655.6 197.4L1656.6 197.2L1657.6 197.4L1658.6 197.1L1659.6 197.0L1660.6 197.6L1661.6 197.1L1662.6 197.6L1663.6 197.3L1664.6 197.3L1665.6 196.9L1666.6 197.0L1667.6 197.3L1668.6 197.5L1669.6 197.0L1670.6 197.2L1671.6 197.2L1672.6 197.0L1673.6 197.2L1674.6 198.0L1675.6 198.1L1676.6 198.2L1677.6 198.3L1678.6 197.9L1679.6 198.3L1680.6 198.2L1681.6 197.6L1682.6 198.2L1683.6 197.6L1684.6 197.8L1685.6 197.8L1686.6 198.1L1687.6 197.6L1688.6 197.8L1689.6 197.5L1690.6 197.4L1691.6 197.9L1692.6 197.6L1693.6 198.1L1694.6 197.6L1695.6 197.9L1696.6 198.0L1697.6 197.7L1698.6 197.9L1699.6 198.2L1700.6 197.8L1701.6 197.5L1702.6 197.1L1703.6 197.5L1704.6 196.9L1705.6 197.0L1706.6 197.0L1707.6 196.9L1708.6 197.3L1709.6 197.4L1710.6 197.4L1711.6 197.1L1712.6 197.0L1713.6 197.1L1714.6 197.0L1715.6 196.8L1716.6 196.7L1717.6 197.2L1718.6 196.8L1719.6 197.0L1720.6 196.6L1721.6 197.0L1722.6 197.7L1723.6 201.7L1724.6 201.7L1725.6 201.6L1726.6 201.6L1727.6 201.6L1728.6 201.5L1729.6 201.6L1730.6 201.4L1731.6 201.5L1732.6 201.6L1733.6 201.6L1734.6 201.6L1735.6 201.7L1736.6 201.6L1737.6 201.6L1738.6 201.7L1739.6 201.4L1740.6 198.2L1741.6 198.1L1742.6 198.0L1743.6 197.6L1744.6 197.9L1745.6 197.6L1746.6 197.6L1747.6 197.4L1748.6 197.5L1749.6 197.3L1750.6 197.4L1751.6 197.6L1752.6 197.6L1753.6 197.3L1754.6 197.1L1755.6 197.2L1756.6 197.2L1757.6 197.0L1758.6 196.9L1759.6 196.8L1760.6 197.1L1761.6 196.8L1762.6 196.8L1763.6 196.7L1764.6 197.2L1765.6 197.4L1766.6 196.8L1767.6 197.1L1768.6 197.4L1769.6 197.0L1770.6 197.4L1771.6 196.8L1772.6 197.4L1773.6 197.2L1774.6 197.4L1775.6 196.8L1776.6 197.3L1777.6 197.3L1778.6 197.3L1779.6 197.2L1780.6 197.0L1781.6 197.3L1782.6 197.0L1783.6 197.4L1784.6 197.7L1785.6 198.0L1786.6 198.7L1787.6 198.7L1788.6 197.8L1789.6 197.7L1790.6 197.0L1791.6 197.4L1792.6 197.4L1793.6 197.1L1794.6 197.2L1795.6 197.0L1796.6 196.7L1797.6 196.8L1798.6 196.6L1799.6 196.7L1800.6 197.0L1801.6 196.9L1802.6 197.2L1803.6 197.2L1804.6 196.7L1805.6 196.5L1806.6 197.2L1807.6 196.5L1808.6 197.1L1809.6 196.5L1810.6 197.1L1811.6 196.5L1812.6 196.9L1813.6 197.1L1814.6 196.9L1815.6 196.7L1816.6 196.9L1817.6 197.1L1818.6 196.7L1819.6 196.9L1820.6 196.6L1821.6 196.6L1822.6 197.0L1823.6 197.2L1824.6 196.7L1825.6 197.0L1826.6 197.1L1827.6 196.5L1828.6 196.8L1829.6 196.8L1830.6 196.5L1831.6 196.7L1832.6 196.8L1833.6 196.8L1834.6 196.9L1835.6 196.9L1836.6 196.9L1837.6 202.0L1838.6 202.0L1839.6 202.0L1840.6 202.0L1841.6 202.0L1842.6 202.0L1843.6 202.0L1844.6 201.5L1845.6 200.8L1846.6 201.4L1847.6 198.9L1848.6 198.0L1849.6 197.2L1850.6 197.3L1851.6 197.2L1852.6 197.5L1853.6 197.1L1854.6 197.3L1855.6 197.0L1856.6 196.3L1857.6 196.8L1858.6 195.9L1859.6 196.7L1860.6 199.0L1861.6 202.0L1862.6 202.0L1863.6 202.0L1864.6 202.0L1865.6 202.0L1866.6 202.0L1867.6 201.6L1868.6 201.2L1869.6 201.0L1870.6 201.1L1871.6 201.3L1872.6 201.9L1873.6 202.0L1874.6 202.0L1875.6 202.0L1876.6 202.0L1877.6 202.0L1878.6 202.0L1879.6 201.8L1880.6 201.8L1881.6 197.4L1882.6 197.4L1883.6 201.8L1884.6 201.7L1885.6 202.0L1886.6 202.0L1887.6 202.0L1888.6 201.4L1889.6 199.9L1890.6 199.8L1891.6 199.6L1892.6 199.5L1893.6 195.8L1894.6 195.8L1895.6 200.9L1896.6 200.8L1897.6 200.7L1898.6 200.7L1899.6 200.7L1900.6 200.7L1901.6 200.7L1902.6 200.8L1903.6 200.7L1904.6 197.5L1905.6 196.5L1906.6 197.9L1907.6 198.0L1908.6 198.3L1909.6 201.2L1910.6 201.2L1911.6 201.2L1912.6 201.1L1913.6 201.2L1914.6 201.3L1915.6 201.1L1916.6 201.1L1917.6 198.9L1918.6 198.7L1919.6 198.8L1920.6 198.4L1921.6 198.5L1922.6 198.3L1923.6 198.0L1924.6 198.0L1925.6 198.3L1926.6 197.9L1927.6 197.6L1928.6 197.6L1929.6 198.0L1930.6 197.5L1931.6 197.5L1932.6 197.4L1933.6 197.3L1934.6 197.4L1935.6 197.0L1936.6 197.5L1937.6 197.5L1938.6 197.5L1939.6 197.1L1940.6 197.0L1941.6 196.9L1942.6 197.5L1943.6 197.6L1944.6 197.1L1945.6 196.8L1946.6 197.5L1947.6 197.2L1948.6 197.4L1949.6 197.0L1950.6 197.0L1951.6 197.2L1952.6 198.2L1953.6 198.3L1954.6 198.3L1955.6 197.8L1956.6 198.2L1957.6 198.2L1958.6 197.7L1959.6 197.6L1960.6 198.1L1961.6 198.1L1962.6 197.6L1963.6 197.4L1964.6 197.5L1965.6 197.8L1966.6 198.0L1967.6 197.8L1968.6 197.6L1969.6 197.5L1970.6 197.8L1971.6 197.9L1972.6 197.9L1973.6 197.9L1974.6 197.6L1975.6 198.1L1976.6 198.2L1977.6 197.8L1978.6 197.9L1979.6 197.9L1980.6 197.2L1981.6 196.9L1982.6 197.2L1983.6 197.5L1984.6 197.3L1985.6 197.4L1986.6 197.2L1987.6 197.4L1988.6 197.1L1989.6 197.2L1990.6 197.0L1991.6 196.6L1992.6 196.6L1993.6 196.6L1994.6 196.7L1995.6 196.9L1996.6 196.8L1997.6 197.1L1998.6 196.6L1999.6 197.2L2000.6 201.0L2001.6 201.7L2002.6 201.6L2003.6 201.6L2004.6 201.7L2005.6 201.5L2006.6 201.5L2007.6 201.5L2008.6 201.4L2009.6 201.5L2010.6 201.5L2011.6 201.6L2012.6 201.6L2013.6 201.6L2014.6 201.6L2015.6 201.7L2016.6 201.7L2017.6 198.6L2018.6 197.7L2019.6 197.6L2020.6 198.0L2021.6 197.5L2022.6 197.4L2023.6 197.6L2024.6 197.5L2025.6 197.4L2026.6 197.3L2027.6 197.3L2028.6 197.8L2029.6 197.1L2030.6 197.7L2031.6 197.1L2032.6 197.4L2033.6 197.2L2034.6 197.2L2035.6 197.4L2036.6 197.5L2037.6 197.0L2038.6 197.3L2039.6 196.9L2040.6 196.9L2041.6 197.5L2042.6 197.2L2043.6 196.9L2044.6 197.3L2045.6 196.9L2046.6 197.2L2047.6 196.8L2048.6 197.3L2049.6 197.0L2050.6 197.0L2051.6 197.1L2052.6 197.1L2053.6 197.3L2054.6 197.0L2055.6 197.4L2056.6 197.0L2057.6 197.1L2058.6 197.0L2059.6 196.9L2060.6 197.7L2061.6 197.3L2062.6 197.6L2063.6 197.9L2064.6 198.3L2065.6 198.1L2066.6 198.0L2067.6 197.4L2068.6 197.5L2069.6 197.3L2070.6 197.0L2071.6 196.9L2072.6 197.3L2073.6 196.7L2074.6 196.5L2075.6 197.0L2076.6 196.8L2077.6 196.7L2078.6 197.0L2079.6 197.1L2080.6 196.5L2081.6 196.7L2082.6 197.2L2083.6 196.8L2084.6 196.8L2085.6 197.3L2086.6 197.1L2087.6 196.5L2088.6 196.9L2089.6 196.7L2090.6 196.8L2091.6 197.2L2092.6 196.9L2093.6 197.0L2094.6 197.0L2095.6 196.7L2096.6 197.0L2097.6 196.6L2098.6 196.7L2099.6 196.7L2100.6 197.0L2101.6 196.7L2102.6 196.7L2103.6 197.2L2104.6 197.1L2105.6 197.1L2106.6 196.6L2107.6 197.0L2108.6 196.5L2109.6 197.0L2110.6 196.9L2111.6 196.4L2112.6 196.6L2113.6 196.6L2114.6 196.9L2115.6 202.0L2116.6 202.0L2117.6 202.0L2118.6 202.0L2119.6 202.0L2120.6 202.0L2121.6 202.0L2122.6 201.2L2123.6 200.9L2124.6 202.0L2125.6 199.0L2126.6 197.1L2127.6 197.3L2128.6 197.2L2129.6 197.0L2130.6 197.5L2131.6 197.2L2132.6 196.9L2133.6 197.0L2134.6 196.2L2135.6 196.0L2136.6 195.8L2137.6 196.6L2138.6 200.7L2139.6 202.0L2140.6 202.0L2141.6 202.0L2142.6 202.0L2143.6 202.0L2144.6 202.0L2145.6 201.3L2146.6 200.8L2147.6 200.9L2148.6 201.0L2149.6 201.5L2150.6 202.0L2151.6 202.0L2152.6 202.0L2153.6 202.0L2154.6 202.0L2155.6 202.0L2156.6 202.0L2157.6 201.7L2158.6 201.8L2159.6 197.4L2160.6 201.8L2161.6 201.7L2162.6 201.7L2163.6 202.0L2164.6 202.0L2165.6 202.0L2166.6 199.8L2167.6 199.9L2168.6 199.8L2169.6 199.7L2170.6 199.7L2171.6 195.8L2172.6 199.4L2172.6 206.4L2171.6 209.3L2170.6 205.9L2169.6 205.6L2168.6 205.7L2167.6 205.3L2166.6 205.5L2165.6 203.2L2164.6 203.2L2163.6 203.2L2162.6 203.2L2161.6 203.2L2160.6 203.2L2159.6 208.4L2158.6 203.2L2157.6 203.2L2156.6 203.2L2155.6 203.2L2154.6 203.2L2153.6 203.2L2152.6 203.2L2151.6 203.2L2150.6 203.4L2149.6 203.9L2148.6 204.3L2147.6 204.2L2146.6 204.0L2145.6 203.7L2144.6 203.4L2143.6 203.2L2142.6 203.2L2141.6 203.2L2140.6 203.2L2139.6 203.2L2138.6 204.4L2137.6 208.3L2136.6 208.5L2135.6 208.2L2134.6 208.7L2133.6 208.4L2132.6 208.2L2131.6 207.7L2130.6 207.6L2129.6 207.9L2128.6 207.8L2127.6 207.8L2126.6 207.8L2125.6 206.0L2124.6 203.4L2123.6 203.6L2122.6 203.5L2121.6 203.2L2120.6 203.2L2119.6 203.2L2118.6 203.2L2117.6 203.2L2116.6 203.2L2115.6 203.2L2114.6 207.9L2113.6 208.4L2112.6 208.2L2111.6 207.9L2110.6 208.2L2109.6 208.3L2108.6 208.5L2107.6 208.0L2106.6 208.6L2105.6 208.6L2104.6 207.9L2103.6 208.2L2102.6 208.4L2101.6 208.0L2100.6 208.0L2099.6 208.5L2098.6 208.4L2097.6 208.4L2096.6 208.5L2095.6 208.5L2094.6 208.1L2093.6 208.3L2092.6 208.4L2091.6 208.5L2090.6 208.3L2089.6 208.3L2088.6 208.8L2087.6 208.1L2086.6 208.7L2085.6 208.5L2084.6 208.5L2083.6 208.3L2082.6 208.4L2081.6 208.1L2080.6 208.8L2079.6 208.3L2078.6 208.6L2077.6 208.7L2076.6 208.4L2075.6 208.0L2074.6 208.4L2073.6 208.1L2072.6 208.1L2071.6 208.2L2070.6 208.2L2069.6 207.7L2068.6 208.3L2067.6 207.7L2066.6 207.5L2065.6 207.1L2064.6 207.4L2063.6 207.4L2062.6 207.3L2061.6 207.8L2060.6 207.7L2059.6 207.8L2058.6 208.1L2057.6 208.4L2056.6 207.7L2055.6 208.4L2054.6 208.5L2053.6 208.1L2052.6 208.5L2051.6 208.6L2050.6 208.5L2049.6 208.7L2048.6 208.1L2047.6 208.6L2046.6 208.2L2045.6 208.3L2044.6 208.2L2043.6 208.4L2042.6 208.1L2041.6 208.1L2040.6 208.7L2039.6 208.2L2038.6 208.3L2037.6 208.0L2036.6 208.5L2035.6 208.0L2034.6 208.5L2033.6 208.4L2032.6 208.3L2031.6 207.7L2030.6 208.4L2029.6 207.8L2028.6 207.5L2027.6 207.9L2026.6 207.8L2025.6 208.0L2024.6 207.6L2023.6 207.6L2022.6 207.2L2021.6 207.2L2020.6 207.6L2019.6 207.1L2018.6 207.4L2017.6 206.4L2016.6 203.4L2015.6 203.4L2014.6 203.5L2013.6 203.5L2012.6 203.6L2011.6 203.5L2010.6 203.6L2009.6 203.6L2008.6 203.7L2007.6 203.6L2006.6 203.7L2005.6 203.6L2004.6 203.6L2003.6 203.5L2002.6 203.5L2001.6 203.4L2000.6 204.2L1999.6 208.0L1998.6 208.4L1997.6 208.1L1996.6 207.7L1995.6 208.0L1994.6 207.9L1993.6 208.5L1992.6 208.1L1991.6 207.8L1990.6 207.8L1989.6 208.0L1988.6 207.9L1987.6 208.2L1986.6 208.0L1985.6 208.1L1984.6 207.7L1983.6 207.7L1982.6 208.0L1981.6 207.7L1980.6 207.6L1979.6 207.5L1978.6 207.3L1977.6 207.2L1976.6 207.5L1975.6 207.6L1974.6 207.4L1973.6 207.3L1972.6 207.5L1971.6 207.2L1970.6 207.4L1969.6 207.7L1968.6 207.8L1967.6 207.3L1966.6 207.3L1965.6 207.3L1964.6 207.2L1963.6 207.2L1962.6 207.2L1961.6 207.1L1960.6 207.3L1959.6 207.0L1958.6 207.3L1957.6 207.3L1956.6 207.3L1955.6 207.2L1954.6 206.8L1953.6 206.4L1952.6 207.0L1951.6 207.7L1950.6 208.2L1949.6 207.7L1948.6 207.7L1947.6 208.3L1946.6 207.8L1945.6 208.5L1944.6 208.0L1943.6 208.4L1942.6 208.2L1941.6 207.8L1940.6 208.2L1939.6 208.1L1938.6 208.1L1937.6 207.5L1936.6 207.8L1935.6 208.0L1934.6 207.8L1933.6 207.8L1932.6 207.6L1931.6 207.3L1930.6 207.3L1929.6 207.4L1928.6 207.5L1927.6 207.5L1926.6 207.2L1925.6 207.2L1924.6 206.8L1923.6 206.9L1922.6 207.3L1921.6 206.7L1920.6 207.1L1919.6 207.0L1918.6 207.0L1917.6 206.9L1916.6 204.1L1915.6 204.1L1914.6 204.0L1913.6 204.0L1912.6 204.0L1911.6 203.9L1910.6 204.1L1909.6 204.1L1908.6 207.1L1907.6 207.0L1906.6 207.5L1905.6 208.5L1904.6 207.3L1903.6 204.5L1902.6 204.4L1901.6 204.4L1900.6 204.5L1899.6 204.4L1898.6 204.2L1897.6 204.3L1896.6 204.2L1895.6 204.4L1894.6 209.3L1893.6 209.3L1892.6 205.6L1891.6 205.7L1890.6 205.7L1889.6 205.2L1888.6 203.8L1887.6 203.2L1886.6 203.2L1885.6 203.2L1884.6 203.2L1883.6 203.2L1882.6 208.4L1881.6 208.4L1880.6 203.2L1879.6 203.2L1878.6 203.2L1877.6 203.2L1876.6 203.2L1875.6 203.2L1874.6 203.2L1873.6 203.2L1872.6 203.6L1871.6 204.1L1870.6 204.2L1869.6 204.1L1868.6 204.0L1867.6 203.7L1866.6 203.2L1865.6 203.2L1864.6 203.2L1863.6 203.2L1862.6 203.2L1861.6 203.2L1860.6 205.9L1859.6 208.8L1858.6 208.4L1857.6 208.1L1856.6 208.0L1855.6 208.2L1854.6 208.2L1853.6 207.8L1852.6 207.9L1851.6 208.0L1850.6 207.9L1849.6 208.0L1848.6 207.3L1847.6 205.6L1846.6 203.5L1845.6 203.6L1844.6 203.4L1843.6 203.2L1842.6 203.2L1841.6 203.2L1840.6 203.2L1839.6 203.2L1838.6 203.2L1837.6 203.2L1836.6 208.3L1835.6 208.5L1834.6 208.0L1833.6 207.9L1832.6 208.5L1831.6 208.6L1830.6 208.2L1829.6 207.9L1828.6 208.3L1827.6 208.6L1826.6 208.0L1825.6 208.2L1824.6 208.2L1823.6 208.0L1822.6 208.2L1821.6 208.6L1820.6 208.4L1819.6 208.3L1818.6 208.3L1817.6 208.6L1816.6 208.5L1815.6 208.2L1814.6 208.2L1813.6 208.4L1812.6 208.1L1811.6 208.5L1810.6 208.8L1809.6 208.0L1808.6 208.1L1807.6 208.1L1806.6 208.4L1805.6 208.6L1804.6 208.2L1803.6 208.3L1802.6 208.4L1801.6 208.1L1800.6 208.8L1799.6 208.7L1798.6 208.5L1797.6 208.3L1796.6 208.0L1795.6 207.9L1794.6 208.2L1793.6 208.2L1792.6 208.3L1791.6 207.7L1790.6 208.1L1789.6 207.6L1788.6 207.5L1787.6 207.0L1786.6 207.1L1785.6 207.2L1784.6 207.3L1783.6 207.9L1782.6 207.6L1781.6 208.1L1780.6 208.3L1779.6 207.6L1778.6 208.3L1777.6 208.5L1776.6 207.8L1775.6 208.6L1774.6 208.1L1773.6 208.4L1772.6 208.6L1771.6 208.2L1770.6 208.9L1769.6 208.4L1768.6 208.3L1767.6 208.5L1766.6 208.6L1765.6 208.5L1764.6 208.5L1763.6 208.6L1762.6 208.6L1761.6 208.5L1760.6 208.3L1759.6 208.4L1758.6 208.5L1757.6 208.1L1756.6 207.9L1755.6 208.4L1754.6 208.2L1753.6 208.1L1752.6 208.3L1751.6 208.0L1750.6 208.2L1749.6 208.2L1748.6 207.5L1747.6 207.5L1746.6 207.5L1745.6 207.2L1744.6 207.2L1743.6 207.6L1742.6 207.3L1741.6 207.4L1740.6 207.3L1739.6 203.6L1738.6 203.4L1737.6 203.4L1736.6 203.4L1735.6 203.5L1734.6 203.5L1733.6 203.6L1732.6 203.7L1731.6 203.6L1730.6 203.7L1729.6 203.6L1728.6 203.6L1727.6 203.6L1726.6 203.5L1725.6 203.5L1724.6 203.4L1723.6 203.4L1722.6 207.8L1721.6 207.7L1720.6 208.1L1719.6 208.4L1718.6 208.1L1717.6 208.3L1716.6 208.4L1715.6 208.3L1714.6 208.2L1713.6 208.3L1712.6 208.0L1711.6 208.3L1710.6 207.6L1709.6 208.1L1708.6 207.8L1707.6 208.2L1706.6 207.9L1705.6 207.5L1704.6 207.7L1703.6 207.7L1702.6 207.4L1701.6 207.6L1700.6 207.4L1699.6 207.5L1698.6 207.6L1697.6 207.7L1696.6 207.4L1695.6 207.2L1694.6 207.5L1693.6 207.4L1692.6 207.5L1691.6 207.3L1690.6 207.4L1689.6 207.5L1688.6 207.2L1687.6 207.4L1686.6 207.6L1685.6 207.8L1684.6 207.6L1683.6 207.2L1682.6 207.4L1681.6 207.0L1680.6 207.1L1679.6 207.2L1678.6 207.2L1677.6 206.9L1676.6 206.5L1675.6 206.8L1674.6 207.0L1673.6 207.5L1672.6 208.3L1671.6 208.0L1670.6 208.2L1669.6 208.3L1668.6 208.0L1667.6 208.4L1666.6 208.4L1665.6 207.9L1664.6 208.3L1663.6 207.9L1662.6 208.0L1661.6 207.9L1660.6 207.7L1659.6 207.8L1658.6 207.4L1657.6 207.3L1656.6 207.6L1655.6 207.6L1654.6 207.2L1653.6 207.0L1652.6 207.2L1651.6 207.5L1650.6 207.2L1649.6 207.4L1648.6 206.8L1647.6 207.0L1646.6 207.0L1645.6 206.9L1644.6 207.1L1643.6 207.0L1642.6 206.9L1641.6 207.1L1640.6 206.8L1639.6 206.6L1638.6 204.0L1637.6 204.0L1636.6 204.1L1635.6 204.0L1634.6 204.0L1633.6 204.0L1632.6 204.0L1631.6 204.4L1630.6 207.4L1629.6 207.1L1628.6 207.0L1627.6 208.5L1626.6 207.4L1625.6 204.4L1624.6 204.5L1623.6 204.4L1622.6 204.3L1621.6 204.4L1620.6 204.3L1619.6 204.4L1618.6 204.4L1617.6 206.4L1616.6 209.3L1615.6 205.9L1614.6 205.8L1613.6 205.7L1612.6 205.4L1611.6 205.5L1610.6 203.2L1609.6 203.2L1608.6 203.2L1607.6 203.2L1606.6 203.2L1605.6 203.2L1604.6 208.4L1603.6 203.2L1602.6 203.2L1601.6 203.2L1600.6 203.2L1599.6 203.2L1598.6 203.2L1597.6 203.2L1596.6 203.2L1595.6 203.2L1594.6 203.7L1593.6 204.2L1592.6 204.3L1591.6 204.1L1590.6 203.9L1589.6 203.7L1588.6 203.2L1587.6 203.2L1586.6 203.2L1585.6 203.2L1584.6 203.2L1583.6 203.2L1582.6 207.6L1581.6 208.7L1580.6 208.6L1579.6 208.0L1578.6 208.2L1577.6 208.2L1576.6 208.1L1575.6 207.6L1574.6 207.7L1573.6 207.6L1572.6 208.0L1571.6 207.9L1570.6 206.9L1569.6 204.4L1568.6 203.5L1567.6 203.5L1566.6 203.2L1565.6 203.2L1564.6 203.2L1563.6 203.2L1562.6 203.2L1561.6 203.2L1560.6 203.2L1559.6 203.2L1558.6 208.4L1557.6 208.6L1556.6 208.4L1555.6 208.1L1554.6 208.1L1553.6 208.1L1552.6 208.5L1551.6 208.0L1550.6 208.2L1549.6 208.4L1548.6 208.4L1547.6 208.0L1546.6 208.2L1545.6 208.1L1544.6 208.1L1543.6 208.2L1542.6 208.2L1541.6 208.3L1540.6 208.7L1539.6 208.6L1538.6 208.5L1537.6 208.4L1536.6 208.1L1535.6 208.5L1534.6 208.1L1533.6 208.3L1532.6 208.4L1531.6 208.6L1530.6 208.5L1529.6 208.2L1528.6 208.8L1527.6 208.1L1526.6 208.2L1525.6 208.7L1524.6 208.7L1523.6 208.3L1522.6 208.3L1521.6 208.2L1520.6 208.5L1519.6 208.6L1518.6 208.2L1517.6 208.0L1516.6 208.0L1515.6 208.3L1514.6 207.7L1513.6 208.2L1512.6 208.4L1511.6 208.0L1510.6 207.4L1509.6 207.2L1508.6 207.3L1507.6 207.1L1506.6 207.9L1505.6 207.4L1504.6 207.6L1503.6 208.2L1502.6 208.0L1501.6 208.3L1500.6 208.3L1499.6 207.9L1498.6 208.0L1497.6 207.8L1496.6 208.4L1495.6 208.5L1494.6 208.3L1493.6 208.8L1492.6 208.3L1491.6 208.6L1490.6 208.8L1489.6 208.5L1488.6 208.9L1487.6 208.7L1486.6 208.4L1485.6 208.8L1484.6 208.6L1483.6 208.3L1482.6 208.3L1481.6 208.5L1480.6 208.1L1479.6 208.3L1478.6 208.0L1477.6 207.9L1476.6 208.4L1475.6 208.4L1474.6 207.9L1473.6 208.1L1472.6 207.5L1471.6 208.0L1470.6 207.4L1469.6 207.4L1468.6 207.4L1467.6 207.6L1466.6 207.2L1465.6 207.2L1464.6 207.3L1463.6 207.2L1462.6 207.1L1461.6 203.4L1460.6 203.4L1459.6 203.5L1458.6 203.5L1457.6 203.5L1456.6 203.5L1455.6 203.6L1454.6 203.7L1453.6 203.6L1452.6 203.6L1451.6 203.6L1450.6 203.6L1449.6 203.5L1448.6 203.5L1447.6 203.5L1446.6 203.4L1445.6 203.4L1444.6 207.6L1443.6 208.0L1442.6 208.1L1441.6 208.0L1440.6 207.9L1439.6 208.3L1438.6 208.1L1437.6 208.2L1436.6 208.2L1435.6 208.3L1434.6 208.0L1433.6 208.0L1432.6 208.2L1431.6 208.0L1430.6 208.2L1429.6 208.0L1428.6 207.7L1427.6 207.6L1426.6 207.5L1425.6 207.4L1424.6 207.5L1423.6 207.6L1422.6 207.2L1421.6 207.6L1420.6 207.6L1419.6 207.7L1418.6 207.8L1417.6 207.8L1416.6 207.6L1415.6 207.2L1414.6 207.5L1413.6 207.6L1412.6 207.7L1411.6 207.6L1410.6 207.2L1409.6 207.4L1408.6 207.6L1407.6 207.3L1406.6 207.4L1405.6 207.3L1404.6 207.6L1403.6 207.5L1402.6 207.4L1401.6 207.2L1400.6 207.3L1399.6 207.0L1398.6 206.4L1397.6 206.8L1396.6 207.7L1395.6 207.9L1394.6 207.8L1393.6 208.0L1392.6 208.5L1391.6 208.2L1390.6 208.3L1389.6 208.4L1388.6 208.0L1387.6 208.3L1386.6 207.9L1385.6 208.1L1384.6 208.3L1383.6 208.2L1382.6 207.9L1381.6 207.6L1380.6 207.6L1379.6 207.5L1378.6 207.2L1377.6 207.7L1376.6 207.5L1375.6 207.2L1374.6 207.4L1373.6 207.4L1372.6 207.3L1371.6 207.4L1370.6 206.9L1369.6 206.9L1368.6 207.2L1367.6 206.9L1366.6 206.7L1365.6 207.1L1364.6 206.8L1363.6 206.8L1362.6 207.0L1361.6 206.6L1360.6 204.0L1359.6 204.0L1358.6 203.9L1357.6 203.9L1356.6 204.0L1355.6 204.1L1354.6 204.0L1353.6 205.7L1352.6 207.3L1351.6 207.2L1350.6 207.4L1349.6 208.5L1348.6 207.1L1347.6 204.4L1346.6 204.4L1345.6 204.5L1344.6 204.3L1343.6 204.3L1342.6 204.5L1341.6 204.4L1340.6 204.4L1339.6 206.3L1338.6 209.3L1337.6 205.7L1336.6 205.9L1335.6 205.7L1334.6 205.4L1333.6 205.5L1332.6 203.2L1331.6 203.2L1330.6 203.2L1329.6 203.2L1328.6 203.2L1327.6 203.2L1326.6 208.4L1325.6 203.2L1324.6 203.2L1323.6 203.2L1322.6 203.2L1321.6 203.2L1320.6 203.2L1319.6 203.2L1318.6 203.2L1317.6 203.2L1316.6 203.8L1315.6 204.3L1314.6 204.3L1313.6 204.2L1312.6 203.8L1311.6 203.5L1310.6 203.2L1309.6 203.2L1308.6 203.2L1307.6 203.2L1306.6 203.2L1305.6 203.4L1304.6 208.4L1303.6 208.9L1302.6 208.4L1301.6 208.3L1300.6 208.3L1299.6 208.4L1298.6 207.7L1297.6 208.2L1296.6 207.8L1295.6 207.7L1294.6 207.6L1293.6 207.9L1292.6 206.5L1291.6 203.4L1290.6 203.6L1289.6 203.5L1288.6 203.2L1287.6 203.2L1286.6 203.2L1285.6 203.2L1284.6 203.2L1283.6 203.2L1282.6 203.2L1281.6 204.7L1280.6 208.0L1279.6 208.3L1278.6 208.0L1277.6 208.1L1276.6 208.6L1275.6 208.4L1274.6 208.4L1273.6 208.0L1272.6 208.5L1271.6 208.2L1270.6 208.7L1269.6 208.0L1268.6 208.4L1267.6 208.3L1266.6 208.0L1265.6 208.4L1264.6 208.4L1263.6 208.0L1262.6 208.1L1261.6 208.6L1260.6 208.0L1259.6 208.7L1258.6 208.2L1257.6 208.5L1256.6 208.7L1255.6 208.4L1254.6 208.8L1253.6 208.4L1252.6 208.5L1251.6 208.1L1250.6 208.5L1249.6 208.0L1248.6 208.4L1247.6 208.3L1246.6 208.2L1245.6 208.8L1244.6 208.2L1243.6 208.3L1242.6 208.5L1241.6 208.2L1240.6 208.6L1239.6 208.4L1238.6 208.4L1237.6 208.5L1236.6 208.4L1235.6 208.2L1234.6 208.0L1233.6 208.0L1232.6 207.7L1231.6 206.9L1230.6 207.1L1229.6 207.7L1228.6 207.7L1227.6 208.0L1226.6 207.6L1225.6 207.8L1224.6 207.7L1223.6 207.9L1222.6 208.4L1221.6 208.5L1220.6 207.9L1219.6 208.3L1218.6 208.4L1217.6 208.4L1216.6 208.3L1215.6 208.7L1214.6 208.7L1213.6 208.7L1212.6 208.5L1211.6 208.5L1210.6 208.7L1209.6 208.8L1208.6 208.3L1207.6 208.5L1206.6 208.2L1205.6 208.6L1204.6 208.5L1203.6 208.0L1202.6 208.5L1201.6 208.3L1200.6 208.4L1199.6 207.9L1198.6 208.3L1197.6 208.0L1196.6 208.2L1195.6 207.9L1194.6 207.6L1193.6 207.7L1192.6 207.9L1191.6 207.6L1190.6 207.9L1189.6 207.5L1188.6 207.3L1187.6 207.5L1186.6 207.3L1185.6 207.2L1184.6 206.9L1183.6 203.4L1182.6 203.4L1181.6 203.5L1180.6 203.5L1179.6 203.5L1178.6 203.6L1177.6 203.6L1176.6 203.6L1175.6 203.7L1174.6 203.7L1173.6 203.6L1172.6 203.6L1171.6 203.5L1170.6 203.5L1169.6 203.4L1168.6 203.4L1167.6 203.4L1166.6 207.9L1165.6 208.3L1164.6 208.2L1163.6 208.4L1162.6 208.0L1161.6 208.4L1160.6 207.8L1159.6 208.4L1158.6 208.2L1157.6 207.9L1156.6 207.9L1155.6 207.9L1154.6 207.8L1153.6 207.8L1152.6 207.6L1151.6 207.6L1150.6 207.5L1149.6 207.6L1148.6 208.0L1147.6 207.9L1146.6 207.3L1145.6 207.7L1144.6 207.5L1143.6 207.6L1142.6 207.7L1141.6 207.5L1140.6 207.2L1139.6 207.5L1138.6 207.6L1137.6 207.7L1136.6 207.6L1135.6 207.2L1134.6 207.3L1133.6 207.7L1132.6 207.2L1131.6 207.6L1130.6 207.3L1129.6 207.7L1128.6 207.4L1127.6 207.4L1126.6 207.4L1125.6 207.2L1124.6 207.0L1123.6 207.4L1122.6 207.3L1121.6 206.8L1120.6 206.7L1119.6 207.3L1118.6 207.6L1117.6 207.8L1116.6 207.9L1115.6 208.4L1114.6 208.0L1113.6 208.4L1112.6 208.2L1111.6 208.3L1110.6 208.4L1109.6 207.9L1108.6 207.8L1107.6 208.4L1106.6 208.1L1105.6 208.2L1104.6 207.6L1103.6 207.4L1102.6 207.5L1101.6 207.5L1100.6 207.4L1099.6 207.7L1098.6 207.5L1097.6 207.5L1096.6 207.5L1095.6 207.4L1094.6 207.0L1093.6 207.2L1092.6 206.9L1091.6 206.8L1090.6 207.0L1089.6 207.1L1088.6 206.6L1087.6 207.0L1086.6 206.6L1085.6 207.1L1084.6 206.6L1083.6 206.8L1082.6 204.0L1081.6 204.0L1080.6 204.0L1079.6 204.0L1078.6 204.0L1077.6 204.0L1076.6 204.0L1075.6 207.1L1074.6 207.1L1073.6 207.2L1072.6 208.5L1071.6 207.6L1070.6 206.9L1069.6 204.3L1068.6 204.4L1067.6 204.3L1066.6 204.5L1065.6 204.3L1064.6 204.5L1063.6 204.2L1062.6 204.4L1061.6 206.5L1060.6 209.3L1059.6 205.7L1058.6 205.9L1057.6 205.7L1056.6 205.3L1055.6 205.2L1054.6 203.2L1053.6 203.2L1052.6 203.2L1051.6 203.2L1050.6 203.2L1049.6 203.2L1048.6 208.4L1047.6 203.2L1046.6 203.2L1045.6 203.2L1044.6 203.2L1043.6 203.2L1042.6 203.2L1041.6 203.2L1040.6 203.2L1039.6 203.4L1038.6 203.9L1037.6 204.3L1036.6 204.1L1035.6 204.0L1034.6 203.7L1033.6 203.4L1032.6 203.2L1031.6 203.2L1030.6 203.2L1029.6 203.2L1028.6 203.2L1027.6 204.2L1026.6 208.0L1025.6 208.8L1024.6 208.6L1023.6 208.1L1022.6 208.2L1021.6 207.8L1020.6 208.3L1019.6 208.0L1018.6 207.8L1017.6 207.7L1016.6 207.6L1015.6 207.9L1014.6 206.2L1013.6 203.4L1012.6 203.6L1011.6 203.5L1010.6 203.2L1009.6 203.2L1008.6 203.2L1007.6 203.2L1006.6 203.2L1005.6 203.2L1004.6 203.2L1003.6 208.3L1002.6 208.4L1001.6 207.9L1000.6 208.3L999.6 208.6L998.6 207.9L997.6 208.3L996.6 208.3L995.6 208.2L994.6 208.2L993.6 207.9L992.6 208.5L991.6 208.2L990.6 207.9L989.6 208.3L988.6 208.4L987.6 208.2L986.6 208.6L985.6 208.3L984.6 208.5L983.6 208.5L982.6 208.5L981.6 208.4L980.6 208.0L979.6 208.0L978.6 208.1L977.6 208.5L976.6 208.4L975.6 208.0L974.6 208.2L973.6 208.7L972.6 208.4L971.6 208.1L970.6 208.5L969.6 208.6L968.6 208.2L967.6 208.8L966.6 208.6L965.6 208.3L964.6 208.7L963.6 208.4L962.6 208.2L961.6 208.3L960.6 208.2L959.6 208.4L958.6 207.9L957.6 207.7L956.6 208.1L955.6 207.5L954.6 207.6L953.6 207.3L952.6 207.3L951.6 207.2L950.6 207.5L949.6 207.4L948.6 207.5L947.6 208.1L946.6 207.7L945.6 208.4L944.6 207.9L943.6 208.3L942.6 208.5L941.6 208.6L940.6 208.5L939.6 208.3L938.6 208.5L937.6 208.3L936.6 208.8L935.6 208.7L934.6 208.4L933.6 208.6L932.6 208.1L931.6 208.5L930.6 208.5L929.6 208.4L928.6 208.1L927.6 208.3L926.6 208.5L925.6 208.0L924.6 208.1L923.6 207.9L922.6 208.3L921.6 207.8L920.6 207.7L919.6 207.9L918.6 207.8L917.6 208.1L916.6 207.8L915.6 207.6L914.6 207.5L913.6 207.5L912.6 207.4L911.6 207.5L910.6 207.3L909.6 207.1L908.6 207.1L907.6 207.2L906.6 207.3L905.6 203.4L904.6 203.4L903.6 203.5L902.6 203.5L901.6 203.5L900.6 203.6L899.6 203.6L898.6 203.6L897.6 203.7L896.6 203.7L895.6 203.6L894.6 203.5L893.6 203.6L892.6 203.5L891.6 203.5L890.6 203.4L889.6 203.3L888.6 207.7L887.6 208.4L886.6 208.5L885.6 208.4L884.6 208.4L883.6 207.8L882.6 207.7L881.6 208.1L880.6 208.2L879.6 208.0L878.6 207.9L877.6 207.8L876.6 208.2L875.6 208.2L874.6 208.0L873.6 207.7L872.6 208.1L871.6 207.7L870.6 208.1L869.6 207.9L868.6 207.8L867.6 207.4L866.6 207.1L865.6 207.7L864.6 207.4L863.6 207.3L862.6 207.5L861.6 207.2L860.6 207.8L859.6 207.7L858.6 207.6L857.6 207.3L856.6 207.2L855.6 207.4L854.6 207.5L853.6 207.5L852.6 207.3L851.6 207.7L850.6 207.5L849.6 207.6L848.6 207.3L847.6 207.2L846.6 207.3L845.6 207.3L844.6 207.0L843.6 206.7L842.6 206.8L841.6 207.3L840.6 207.5L839.6 207.6L838.6 208.1L837.6 207.8L836.6 208.0L835.6 208.3L834.6 208.4L833.6 208.0L832.6 208.0L831.6 207.9L830.6 208.4L829.6 207.6L828.6 207.6L827.6 208.1L826.6 207.5L825.6 207.6L824.6 207.9L823.6 207.4L822.6 207.4L821.6 207.6L820.6 207.1L819.6 207.6L818.6 207.2L817.6 207.5L816.6 207.0L815.6 207.2L814.6 206.9L813.6 207.2L812.6 207.0L811.6 207.3L810.6 206.8L809.6 206.6L808.6 206.8L807.6 206.9L806.6 206.6L805.6 204.4L804.6 203.9L803.6 204.1L802.6 204.0L801.6 203.9L800.6 204.1L799.6 204.1L798.6 204.0L797.6 207.4L796.6 206.9L795.6 207.1L794.6 208.5L793.6 207.2L792.6 204.3L791.6 204.3L790.6 204.5L789.6 204.5L788.6 204.4L787.6 204.4L786.6 204.4L785.6 204.4L784.6 204.3L783.6 209.3L782.6 209.3L781.6 205.8L780.6 205.6L779.6 205.5L778.6 205.4L777.6 204.3L776.6 203.2L775.6 203.2L774.6 203.2L773.6 203.2L772.6 203.2L771.6 208.4L770.6 208.4L769.6 203.2L768.6 203.2L767.6 203.2L766.6 203.2L765.6 203.2L764.6 203.2L763.6 203.2L762.6 203.2L761.6 203.6L760.6 204.0L759.6 204.2L758.6 204.2L757.6 204.1L756.6 203.8L755.6 203.2L754.6 203.2L753.6 203.2L752.6 203.2L751.6 203.2L750.6 203.2L749.6 205.6L748.6 208.2L747.6 208.7L746.6 208.6L745.6 208.6L744.6 208.3L743.6 208.1L742.6 207.8L741.6 208.1L740.6 207.9L739.6 207.9L738.6 207.5L737.6 207.3L736.6 206.1L735.6 203.5L734.6 203.6L733.6 203.3L732.6 203.2L731.6 203.2L730.6 203.2L729.6 203.2L728.6 203.2L727.6 203.2L726.6 203.2L725.6 208.5L724.6 208.3L723.6 208.2L722.6 208.3L721.6 208.2L720.6 208.3L719.6 208.4L718.6 207.9L717.6 208.5L716.6 208.6L715.6 208.2L714.6 208.3L713.6 208.7L712.6 208.6L711.6 208.5L710.6 208.3L709.6 208.6L708.6 208.4L707.6 208.4L706.6 208.2L705.6 208.0L704.6 208.1L703.6 208.3L702.6 208.5L701.6 208.7L700.6 208.2L699.6 208.1L698.6 208.1L697.6 208.1L696.6 208.0L695.6 208.7L694.6 208.7L693.6 208.7L692.6 208.3L691.6 208.3L690.6 208.8L689.6 208.4L688.6 208.1L687.6 208.3L686.6 208.3L685.6 208.2L684.6 207.9L683.6 207.8L682.6 208.3L681.6 208.1L680.6 208.0L679.6 207.7L678.6 207.6L677.6 207.4L676.6 207.3L675.6 207.3L674.6 207.1L673.6 207.3L672.6 207.4L671.6 207.8L670.6 208.0L669.6 207.8L668.6 208.0L667.6 207.8L666.6 207.9L665.6 208.5L664.6 207.8L663.6 208.2L662.6 208.1L661.6 208.2L660.6 208.3L659.6 208.1L658.6 208.6L657.6 208.9L656.6 208.7L655.6 208.2L654.6 208.1L653.6 208.1L652.6 208.7L651.6 208.6L650.6 208.0L649.6 208.0L648.6 208.3L647.6 208.6L646.6 208.3L645.6 207.8L644.6 208.1L643.6 208.4L642.6 207.9L641.6 208.0L640.6 208.1L639.6 207.9L638.6 208.1L637.6 207.8L636.6 207.4L635.6 207.7L634.6 207.3L633.6 207.5L632.6 207.4L631.6 207.0L630.6 207.5L629.6 206.9L628.6 204.2L627.6 203.4L626.6 203.5L625.6 203.5L624.6 203.5L623.6 203.5L622.6 203.6L621.6 203.5L620.6 203.7L619.6 203.6L618.6 203.7L617.6 203.6L616.6 203.5L615.6 203.5L614.6 203.5L613.6 203.5L612.6 203.4L611.6 206.8L610.6 208.1L609.6 208.1L608.6 208.3L607.6 208.1L606.6 208.3L605.6 208.2L604.6 207.9L603.6 208.4L602.6 208.2L601.6 208.2L600.6 207.8L599.6 207.9L598.6 207.8L597.6 208.1L596.6 208.0L595.6 207.5L594.6 207.7L593.6 207.6L592.6 207.6L591.6 207.4L590.6 207.3L589.6 207.6L588.6 207.5L587.6 207.7L586.6 207.2L585.6 207.5L584.6 207.7L583.6 207.5L582.6 207.8L581.6 207.8L580.6 207.6L579.6 207.5L578.6 207.4L577.6 207.8L576.6 207.8L575.6 207.5L574.6 207.6L573.6 207.3L572.6 207.3L571.6 207.5L570.6 207.4L569.6 207.0L568.6 207.2L567.6 207.4L566.6 207.1L565.6 207.0L564.6 206.9L563.6 207.2L562.6 207.7L561.6 208.1L560.6 207.7L559.6 208.1L558.6 207.9L557.6 208.2L556.6 208.2L555.6 208.1L554.6 208.4L553.6 207.9L552.6 208.1L551.6 208.1L550.6 207.5L549.6 207.9L548.6 207.4L547.6 207.6L546.6 207.5L545.6 207.2L544.6 207.5L543.6 207.2L542.6 207.5L541.6 207.6L540.6 207.5L539.6 207.5L538.6 207.5L537.6 207.4L536.6 206.8L535.6 207.3L534.6 206.9L533.6 206.8L532.6 207.0L531.6 206.8L530.6 206.6L529.6 206.7L528.6 207.0L527.6 204.0L526.6 204.0L525.6 204.0L524.6 204.0L523.6 203.9L522.6 204.0L521.6 203.9L520.6 204.1L519.6 206.8L518.6 207.4L517.6 207.1L516.6 208.5L515.6 207.5L514.6 204.3L513.6 204.5L512.6 204.5L511.6 204.4L510.6 204.4L509.6 204.4L508.6 204.5L507.6 204.3L506.6 204.4Z" fill="#3a5046"/></svg>
<div class="b" style="left:500.6px;top:173.8px;width:10.4px;height:36.8px;background:#555;border:2px solid #6c6c6c;box-sizing:border-box;border-radius:4px;"></div>
<div class="b" style="left:505.0px;top:177px;width:1.4px;height:30.4px;background:#6c6c6c;"></div>
<div class="b" style="left:2167.6px;top:173.8px;width:10.4px;height:36.8px;background:#555;border:2px solid #6c6c6c;box-sizing:border-box;border-radius:4px;"></div>
<div class="b" style="left:2172.0px;top:177px;width:1.4px;height:30.4px;background:#6c6c6c;"></div>
<div class="b" style="left:505.4px;top:490.8px;width:1668.8px;height:1.3px;background:rgba(18,32,26,0.85);"></div>
<div class="b" style="left:505.4px;top:919.7px;width:1668.8px;height:1.3px;background:rgba(18,32,26,0.85);"></div>
<div class="b" style="left:505.4px;top:704.8px;width:1780px;height:1.5px;background:#4d4d4d;"></div>
<div class="b" style="left:505.3px;top:278px;width:1.9px;height:860px;background:#cf0000;"></div>
<svg class="b" style="left:497.8px;top:258px;" width="16.4" height="18" viewBox="0 0 16.4 18"><path d="M0 0H16.4V8.6L8.2 17.4L0 8.6Z" fill="#2d8ceb"/><rect x="7.6" y="12" width="1.2" height="6" fill="#9cc8f5"/></svg>
<div class="b" style="left:1245.2px;top:430px;width:187px;height:38.8px;background:rgba(30,32,31,0.80);"></div>
<div class="b" style="left:1245.2px;top:431.6px;width:12.8px;height:35.6px;background:rgba(110,110,110,0.55);"></div>
<svg class="b" style="left:1248.8px;top:442.2px;" width="6" height="15.4" viewBox="0 0 6 15.4"><rect x="0" y="0" width="2.2" height="15" fill="#d0d0d0"/><rect x="3.4" y="0" width="2.2" height="15" fill="#d0d0d0"/><rect x="0" y="0.00" width="2.2" height="1.5" fill="#161616"/><rect x="3.4" y="0.00" width="2.2" height="1.5" fill="#161616"/><rect x="0" y="2.15" width="2.2" height="1.5" fill="#161616"/><rect x="3.4" y="2.15" width="2.2" height="1.5" fill="#161616"/><rect x="0" y="4.30" width="2.2" height="1.5" fill="#161616"/><rect x="3.4" y="4.30" width="2.2" height="1.5" fill="#161616"/><rect x="0" y="6.45" width="2.2" height="1.5" fill="#161616"/><rect x="3.4" y="6.45" width="2.2" height="1.5" fill="#161616"/><rect x="0" y="8.60" width="2.2" height="1.5" fill="#161616"/><rect x="3.4" y="8.60" width="2.2" height="1.5" fill="#161616"/><rect x="0" y="10.75" width="2.2" height="1.5" fill="#161616"/><rect x="3.4" y="10.75" width="2.2" height="1.5" fill="#161616"/><rect x="0" y="12.90" width="2.2" height="1.5" fill="#161616"/><rect x="3.4" y="12.90" width="2.2" height="1.5" fill="#161616"/></svg>
<svg class="b" style="left:1261.8px;top:436.6px;" width="24" height="21" viewBox="0 0 24 21"><rect x="0.00" y="18.4" width="1.5" height="2.6" fill="#b8b8b8"/><rect x="3.06" y="15.8" width="1.5" height="5.2" fill="#b8b8b8"/><rect x="6.12" y="13.2" width="1.5" height="7.8" fill="#b8b8b8"/><rect x="9.18" y="10.5" width="1.5" height="10.5" fill="#b8b8b8"/><rect x="12.24" y="7.9" width="1.5" height="13.1" fill="#b8b8b8"/><rect x="15.30" y="5.3" width="1.5" height="15.7" fill="#b8b8b8"/><rect x="18.36" y="2.7" width="1.5" height="18.3" fill="#b8b8b8"/><rect x="21.42" y="0.1" width="1.5" height="20.9" fill="#b8b8b8"/></svg>
<svg class="b" style="left:1291.6px;top:435px;" width="28.4" height="28.4" viewBox="0 0 28.4 28.4"><circle cx="14.2" cy="14.2" r="12" fill="none" stroke="#9a9a9a" stroke-width="2.3"/><rect x="13.1" y="2" width="2.3" height="12.4" fill="#9a9a9a"/></svg>
<div class="b" style="left:1404px;top:435.8px;width:1px;height:28.2px;background:#555;"></div>
<svg class="b" style="left:1413px;top:444px;" width="13.4" height="13.4" viewBox="0 0 13.4 13.4"><path d="M8.2 0.6C10.6 -0.4 13.6 2.6 12.8 5L10.6 7.2L9.4 6.6L8 8L8.4 11L2.4 5L5.4 5.4L6.8 4L6.2 2.8Z" fill="#c0c0c0"/><path d="M5.8 7.6L0.4 13" stroke="#c0c0c0" stroke-width="1.5"/></svg>
<span class="t" style="top:15.00px;font-size:12.5px;color:#9999ff;font-weight:700;left:17.60px;transform:scaleX(0.8757);">Au</span>
<span class="t" style="top:14.00px;font-size:18px;color:#000;left:43.50px;transform:scaleX(1.0280);">Adobe Audition</span>
<span class="t" style="top:53.00px;font-size:17px;color:#000;left:13.80px;transform:scaleX(0.9122);">File</span>
<span class="t" style="top:53.00px;font-size:17px;color:#000;left:61.50px;transform:scaleX(1.0138);">Edit</span>
<span class="t" style="top:53.00px;font-size:17px;color:#000;left:113.60px;transform:scaleX(1.0641);">Multitrack</span>
<span class="t" style="top:53.00px;font-size:17px;color:#000;left:212.80px;transform:scaleX(1.0308);">Clip</span>
<span class="t" style="top:53.00px;font-size:17px;color:#000;left:265.30px;transform:scaleX(0.9970);">Effects</span>
<span class="t" style="top:53.00px;font-size:17px;color:#000;left:339.00px;">Favorites</span>
<span class="t" style="top:53.00px;font-size:17px;color:#000;left:431.00px;transform:scaleX(1.0124);">View</span>
<span class="t" style="top:53.00px;font-size:17px;color:#000;left:490.00px;transform:scaleX(1.0915);">Window</span>
<span class="t" style="top:53.00px;font-size:17px;color:#000;left:578.00px;transform:scaleX(1.0438);">Help</span>
<span class="t" style="top:87.00px;font-size:17px;color:#2d8ceb;-webkit-text-stroke:0.55px #2d8ceb;left:67.60px;transform:scaleX(0.9580);">Waveform</span>
<span class="t" style="top:87.00px;font-size:17px;color:#8c8c8c;-webkit-text-stroke:0.55px #8c8c8c;left:204.80px;transform:scaleX(1.0037);">Multitrack</span>
<span class="t" style="top:87.00px;font-size:17px;color:#2d8ceb;-webkit-text-stroke:0.55px #2d8ceb;left:1974.70px;transform:scaleX(0.9689);">Default</span>
<span class="t" style="top:87.00px;font-size:17px;color:#a7a7a7;-webkit-text-stroke:0.22px #a7a7a7;left:2092.50px;transform:scaleX(0.9926);">Edit Audio to Video</span>
<span class="t" style="top:87.00px;font-size:17px;color:#a7a7a7;-webkit-text-stroke:0.22px #a7a7a7;left:2299.40px;transform:scaleX(0.9707);">Radio Production</span>
<span class="t" style="top:90.00px;font-size:16.5px;color:#a7a7a7;-webkit-text-stroke:0.22px #a7a7a7;left:2564.00px;transform:scaleX(0.9911);">Search Help</span>
<span class="t" style="top:130.00px;font-size:16.5px;color:#d2d2d2;-webkit-text-stroke:0.22px #d2d2d2;left:22.40px;transform:scaleX(0.9356);">Files</span>
<span class="t" style="top:130.00px;font-size:16.5px;color:#a7a7a7;-webkit-text-stroke:0.22px #a7a7a7;left:117.00px;transform:scaleX(0.9726);">Favorites</span>
<span class="t" style="top:209.00px;font-size:16px;color:#a7a7a7;-webkit-text-stroke:0.22px #a7a7a7;left:19.00px;transform:scaleX(1.0120);">Name</span>
<span class="t" style="top:209.00px;font-size:16px;color:#a7a7a7;-webkit-text-stroke:0.22px #a7a7a7;left:290.00px;transform:scaleX(0.9833);">Status</span>
<span class="t" style="top:209.00px;font-size:16px;color:#a7a7a7;-webkit-text-stroke:0.22px #a7a7a7;left:352.30px;transform:scaleX(1.0416);">Duration</span>
<span class="t" style="top:240.00px;font-size:17px;color:#2d8ceb;-webkit-text-stroke:0.22px #2d8ceb;left:89.40px;transform:scaleX(0.9539);">_TestSong.wav *</span>
<span class="t" style="top:240.00px;font-size:16.5px;color:#2d8ceb;-webkit-text-stroke:0.22px #2d8ceb;left:368.00px;transform:scaleX(0.9672);">41:41.759</span>
<span class="t" style="top:508.00px;font-size:16.5px;color:#d2d2d2;-webkit-text-stroke:0.22px #d2d2d2;left:22.60px;transform:scaleX(0.9905);">Media Browser</span>
<span class="t" style="top:508.00px;font-size:16.5px;color:#a7a7a7;-webkit-text-stroke:0.22px #a7a7a7;left:193.30px;transform:scaleX(0.9358);">Effects Rack</span>
<span class="t" style="top:508.00px;font-size:16.5px;color:#a7a7a7;-webkit-text-stroke:0.22px #a7a7a7;left:340.50px;transform:scaleX(0.9816);">Markers</span>
<span class="t" style="top:550.00px;font-size:16.5px;color:#a7a7a7;-webkit-text-stroke:0.22px #a7a7a7;left:135.90px;transform:scaleX(0.9742);">Contents:</span>
<span class="t" style="top:550.00px;font-size:17px;color:#d0d0d0;-webkit-text-stroke:0.22px #d0d0d0;left:224.50px;transform:scaleX(0.9342);">Drives</span>
<span class="t" style="top:589.00px;font-size:16.5px;color:#a7a7a7;-webkit-text-stroke:0.22px #a7a7a7;left:82.30px;transform:scaleX(0.9836);clip-path:inset(-5px 9.15px -5px 0);">Drives</span>
<span class="t" style="top:617.00px;font-size:16.5px;color:#a7a7a7;-webkit-text-stroke:0.22px #a7a7a7;left:114.60px;clip-path:inset(-5px 99.82px -5px 0);">ARCHIVE (A:)</span>
<span class="t" style="top:645.00px;font-size:16.5px;color:#a7a7a7;-webkit-text-stroke:0.22px #a7a7a7;left:114.60px;clip-path:inset(-5px 11.80px -5px 0);">C:</span>
<span class="t" style="top:673.00px;font-size:16.5px;color:#a7a7a7;-webkit-text-stroke:0.22px #a7a7a7;left:114.60px;clip-path:inset(-5px 73.24px -5px 0);">FILES (D:)</span>
<span class="t" style="top:701.00px;font-size:16.5px;color:#a7a7a7;-webkit-text-stroke:0.22px #a7a7a7;left:114.60px;clip-path:inset(-5px 120.96px -5px 0);">Home_Video (V:)</span>
<span class="t" style="top:730.00px;font-size:16.5px;color:#a7a7a7;-webkit-text-stroke:0.22px #a7a7a7;left:114.60px;clip-path:inset(-5px 74.16px -5px 0);">King-1 (E:)</span>
<span class="t" style="top:759.00px;font-size:16.5px;color:#a7a7a7;-webkit-text-stroke:0.22px #a7a7a7;left:114.60px;clip-path:inset(-5px 81.47px -5px 0);">Movies (M:)</span>
<span class="t" style="top:787.00px;font-size:16.5px;color:#a7a7a7;-webkit-text-stroke:0.22px #a7a7a7;left:114.60px;clip-path:inset(-5px 78.77px -5px 0);">Photo3 (K:)</span>
<span class="t" style="top:817.00px;font-size:16.5px;color:#a7a7a7;-webkit-text-stroke:0.22px #a7a7a7;left:81.50px;transform:scaleX(0.9469);clip-path:inset(-5px 29.78px -5px 0);">Shortcuts</span>
<span class="t" style="top:590.00px;font-size:16px;color:#a7a7a7;-webkit-text-stroke:0.22px #a7a7a7;left:142.60px;">Name</span>
<span class="t" style="top:590.00px;font-size:16px;color:#a7a7a7;-webkit-text-stroke:0.22px #a7a7a7;left:443.60px;transform:scaleX(0.9920);clip-path:inset(-5px 22.98px -5px 0);">Duration</span>
<span class="t" style="top:620.00px;font-size:17px;color:#a7a7a7;-webkit-text-stroke:0.22px #a7a7a7;left:203.30px;transform:scaleX(0.9063);">ARCHIVE (A:)</span>
<span class="t" style="top:648.00px;font-size:17px;color:#a7a7a7;-webkit-text-stroke:0.22px #a7a7a7;left:203.30px;transform:scaleX(0.8000);">C:</span>
<span class="t" style="top:676.00px;font-size:17px;color:#a7a7a7;-webkit-text-stroke:0.22px #a7a7a7;left:203.30px;transform:scaleX(0.9029);">FILES (D:)</span>
<span class="t" style="top:705.00px;font-size:17px;color:#a7a7a7;-webkit-text-stroke:0.22px #a7a7a7;left:203.30px;transform:scaleX(0.9934);">Home_Video (V:)</span>
<span class="t" style="top:733.00px;font-size:17px;color:#a7a7a7;-webkit-text-stroke:0.22px #a7a7a7;left:203.30px;transform:scaleX(0.9600);">King-1 (E:)</span>
<span class="t" style="top:762.00px;font-size:17px;color:#a7a7a7;-webkit-text-stroke:0.22px #a7a7a7;left:203.30px;transform:scaleX(0.9912);">Movies (M:)</span>
<span class="t" style="top:790.00px;font-size:17px;color:#a7a7a7;-webkit-text-stroke:0.22px #a7a7a7;left:203.30px;transform:scaleX(0.9767);">Photo3 (K:)</span>
<span class="t" style="top:1108.00px;font-size:16.5px;color:#d2d2d2;-webkit-text-stroke:0.22px #d2d2d2;left:22.10px;transform:scaleX(1.0069);">History</span>
<span class="t" style="top:1108.00px;font-size:16.5px;color:#a7a7a7;-webkit-text-stroke:0.22px #a7a7a7;left:134.90px;transform:scaleX(0.9975);">Video</span>
<span class="t" style="top:1153.00px;font-size:16.5px;color:#a7a7a7;-webkit-text-stroke:0.22px #a7a7a7;left:74.60px;transform:scaleX(0.9560);">Open</span>
<span class="t" style="top:1179.00px;font-size:19px;color:#c8c8c8;font-style:italic;-webkit-text-stroke:0.22px #c8c8c8;left:45.40px;transform:scaleX(1.0825);">fx</span>
<span class="t" style="top:1182.00px;font-size:16.5px;color:#9a9a9a;-webkit-text-stroke:0.5px #9a9a9a;left:74.80px;transform:scaleX(1.0312);">Center Channel Extractor</span>
<span class="t" style="top:1330.00px;font-size:16.5px;color:#a7a7a7;-webkit-text-stroke:0.22px #a7a7a7;left:12.00px;transform:scaleX(0.9903);">1 Undo</span>
<span class="t" style="top:130.00px;font-size:16.5px;color:#d2d2d2;-webkit-text-stroke:0.22px #d2d2d2;left:511.00px;transform:scaleX(0.9875);">Editor: _TestSong.wav *</span>
<span class="t" style="top:130.00px;font-size:16.5px;color:#a7a7a7;-webkit-text-stroke:0.22px #a7a7a7;left:746.50px;transform:scaleX(1.0163);">Mixer</span>
<span class="t" style="top:246.00px;font-size:15.5px;color:#688679;-webkit-text-stroke:0.22px #688679;left:510.80px;transform:scaleX(1.0035);">hms</span>
<span class="t" style="top:246.00px;font-size:15.5px;color:#93ac9f;-webkit-text-stroke:0.2px #93ac9f;left:691.30px;transform:scaleX(1.0274);">5:00</span>
<span class="t" style="top:246.00px;font-size:15.5px;color:#93ac9f;-webkit-text-stroke:0.2px #93ac9f;left:886.70px;transform:scaleX(1.0310);">10:00</span>
<span class="t" style="top:246.00px;font-size:15.5px;color:#93ac9f;-webkit-text-stroke:0.2px #93ac9f;left:1086.60px;transform:scaleX(1.0310);">15:00</span>
<span class="t" style="top:246.00px;font-size:15.5px;color:#93ac9f;-webkit-text-stroke:0.2px #93ac9f;left:1286.50px;transform:scaleX(1.0310);">20:00</span>
<span class="t" style="top:246.00px;font-size:15.5px;color:#93ac9f;-webkit-text-stroke:0.2px #93ac9f;left:1486.40px;transform:scaleX(1.0310);">25:00</span>
<span class="t" style="top:246.00px;font-size:15.5px;color:#93ac9f;-webkit-text-stroke:0.2px #93ac9f;left:1686.30px;transform:scaleX(1.0310);">30:00</span>
<span class="t" style="top:246.00px;font-size:15.5px;color:#93ac9f;-webkit-text-stroke:0.2px #93ac9f;left:1886.20px;transform:scaleX(1.0310);">35:00</span>
<span class="t" style="top:246.00px;font-size:15.5px;color:#93ac9f;-webkit-text-stroke:0.2px #93ac9f;left:2086.10px;transform:scaleX(1.0310);">40:00</span>
<span class="t" style="top:281.00px;font-size:17px;color:#9a9a9a;-webkit-text-stroke:0.22px #9a9a9a;left:2186.20px;transform:scaleX(0.9040);">dB</span>
<span class="t" style="top:332.00px;font-size:16px;color:#9a9a9a;-webkit-text-stroke:0.22px #9a9a9a;left:2187.00px;">-3</span>
<span class="t" style="top:635.00px;font-size:16px;color:#9a9a9a;-webkit-text-stroke:0.22px #9a9a9a;left:2187.00px;">-3</span>
<span class="t" style="top:377.00px;font-size:16px;color:#9a9a9a;-webkit-text-stroke:0.22px #9a9a9a;left:2187.00px;">-6</span>
<span class="t" style="top:590.00px;font-size:16px;color:#9a9a9a;-webkit-text-stroke:0.22px #9a9a9a;left:2187.00px;">-6</span>
<span class="t" style="top:407.00px;font-size:16px;color:#9a9a9a;-webkit-text-stroke:0.22px #9a9a9a;left:2187.00px;">-9</span>
<span class="t" style="top:560.00px;font-size:16px;color:#9a9a9a;-webkit-text-stroke:0.22px #9a9a9a;left:2187.00px;">-9</span>
<span class="t" style="top:429.00px;font-size:16px;color:#9a9a9a;-webkit-text-stroke:0.22px #9a9a9a;left:2187.00px;">-12</span>
<span class="t" style="top:537.00px;font-size:16px;color:#9a9a9a;-webkit-text-stroke:0.22px #9a9a9a;left:2187.00px;">-12</span>
<span class="t" style="top:456.00px;font-size:16px;color:#9a9a9a;-webkit-text-stroke:0.22px #9a9a9a;left:2187.00px;">-18</span>
<span class="t" style="top:510.00px;font-size:16px;color:#9a9a9a;-webkit-text-stroke:0.22px #9a9a9a;left:2187.00px;">-18</span>
<span class="t" style="top:483.00px;font-size:16px;color:#9a9a9a;-webkit-text-stroke:0.22px #9a9a9a;left:2187.00px;">-∞</span>
<span class="t" style="top:710.00px;font-size:17px;color:#9a9a9a;-webkit-text-stroke:0.22px #9a9a9a;left:2186.20px;transform:scaleX(0.9040);">dB</span>
<span class="t" style="top:761.00px;font-size:16px;color:#9a9a9a;-webkit-text-stroke:0.22px #9a9a9a;left:2187.00px;">-3</span>
<span class="t" style="top:1064.00px;font-size:16px;color:#9a9a9a;-webkit-text-stroke:0.22px #9a9a9a;left:2187.00px;">-3</span>
<span class="t" style="top:806.00px;font-size:16px;color:#9a9a9a;-webkit-text-stroke:0.22px #9a9a9a;left:2187.00px;">-6</span>
<span class="t" style="top:1019.00px;font-size:16px;color:#9a9a9a;-webkit-text-stroke:0.22px #9a9a9a;left:2187.00px;">-6</span>
<span class="t" style="top:836.00px;font-size:16px;color:#9a9a9a;-webkit-text-stroke:0.22px #9a9a9a;left:2187.00px;">-9</span>
<span class="t" style="top:989.00px;font-size:16px;color:#9a9a9a;-webkit-text-stroke:0.22px #9a9a9a;left:2187.00px;">-9</span>
<span class="t" style="top:858.00px;font-size:16px;color:#9a9a9a;-webkit-text-stroke:0.22px #9a9a9a;left:2187.00px;">-12</span>
<span class="t" style="top:967.00px;font-size:16px;color:#9a9a9a;-webkit-text-stroke:0.22px #9a9a9a;left:2187.00px;">-12</span>
<span class="t" style="top:886.00px;font-size:16px;color:#9a9a9a;-webkit-text-stroke:0.22px #9a9a9a;left:2187.00px;">-18</span>
<span class="t" style="top:939.00px;font-size:16px;color:#9a9a9a;-webkit-text-stroke:0.22px #9a9a9a;left:2187.00px;">-18</span>
<span class="t" style="top:912.00px;font-size:16px;color:#9a9a9a;-webkit-text-stroke:0.22px #9a9a9a;left:2187.00px;">-∞</span>
<span class="t" style="top:485.00px;font-size:14.5px;color:#2d8ceb;-webkit-text-stroke:0.22px #2d8ceb;left:2259.96px;">L</span>
<span class="t" style="top:914.00px;font-size:14.5px;color:#2d8ceb;-webkit-text-stroke:0.22px #2d8ceb;left:2258.76px;">R</span>
<span class="t" style="top:1173.00px;font-size:23px;color:#2d8ceb;-webkit-text-stroke:0.22px #2d8ceb;left:510.80px;transform:scaleX(1.0320);">0:00.000</span>
<span class="t" style="top:130.00px;font-size:16.5px;color:#d2d2d2;-webkit-text-stroke:0.22px #d2d2d2;left:2319.00px;transform:scaleX(0.9560);">Essential Sound</span>
<span class="t" style="top:178.00px;font-size:16.5px;color:#a7a7a7;font-style:italic;-webkit-text-stroke:0.22px #a7a7a7;left:2317.40px;transform:scaleX(0.9299);">No Selection</span>
<span class="t" style="top:223.00px;font-size:16.5px;color:#4f4f4f;-webkit-text-stroke:0.22px #4f4f4f;left:2317.40px;transform:scaleX(0.9487);">Preset:</span>
<span class="t" style="top:1227.00px;font-size:16.5px;color:#d2d2d2;-webkit-text-stroke:0.22px #d2d2d2;left:512.40px;transform:scaleX(0.9475);">Levels</span>
<span class="t" style="top:1339.00px;font-size:14.5px;color:#9a9a9a;-webkit-text-stroke:0.22px #9a9a9a;left:502.20px;transform:scaleX(0.9239);">dB</span>
<span class="t" style="top:1339.00px;font-size:14.5px;color:#9a9a9a;-webkit-text-stroke:0.22px #9a9a9a;left:588.12px;">-57</span>
<span class="t" style="top:1339.00px;font-size:14.5px;color:#9a9a9a;-webkit-text-stroke:0.22px #9a9a9a;left:681.32px;">-54</span>
<span class="t" style="top:1339.00px;font-size:14.5px;color:#9a9a9a;-webkit-text-stroke:0.22px #9a9a9a;left:774.52px;">-51</span>
<span class="t" style="top:1339.00px;font-size:14.5px;color:#9a9a9a;-webkit-text-stroke:0.22px #9a9a9a;left:867.72px;">-48</span>
<span class="t" style="top:1339.00px;font-size:14.5px;color:#9a9a9a;-webkit-text-stroke:0.22px #9a9a9a;left:960.92px;">-45</span>
<span class="t" style="top:1339.00px;font-size:14.5px;color:#9a9a9a;-webkit-text-stroke:0.22px #9a9a9a;left:1054.12px;">-42</span>
<span class="t" style="top:1339.00px;font-size:14.5px;color:#9a9a9a;-webkit-text-stroke:0.22px #9a9a9a;left:1147.32px;">-39</span>
<span class="t" style="top:1339.00px;font-size:14.5px;color:#9a9a9a;-webkit-text-stroke:0.22px #9a9a9a;left:1240.52px;">-36</span>
<span class="t" style="top:1339.00px;font-size:14.5px;color:#9a9a9a;-webkit-text-stroke:0.22px #9a9a9a;left:1333.72px;">-33</span>
<span class="t" style="top:1339.00px;font-size:14.5px;color:#9a9a9a;-webkit-text-stroke:0.22px #9a9a9a;left:1426.92px;">-30</span>
<span class="t" style="top:1339.00px;font-size:14.5px;color:#9a9a9a;-webkit-text-stroke:0.22px #9a9a9a;left:1520.12px;">-27</span>
<span class="t" style="top:1339.00px;font-size:14.5px;color:#9a9a9a;-webkit-text-stroke:0.22px #9a9a9a;left:1613.32px;">-24</span>
<span class="t" style="top:1339.00px;font-size:14.5px;color:#9a9a9a;-webkit-text-stroke:0.22px #9a9a9a;left:1706.52px;">-21</span>
<span class="t" style="top:1339.00px;font-size:14.5px;color:#9a9a9a;-webkit-text-stroke:0.22px #9a9a9a;left:1799.72px;">-18</span>
<span class="t" style="top:1339.00px;font-size:14.5px;color:#9a9a9a;-webkit-text-stroke:0.22px #9a9a9a;left:1892.92px;">-15</span>
<span class="t" style="top:1339.00px;font-size:14.5px;color:#9a9a9a;-webkit-text-stroke:0.22px #9a9a9a;left:1986.12px;">-12</span>
<span class="t" style="top:1339.00px;font-size:14.5px;color:#9a9a9a;-webkit-text-stroke:0.22px #9a9a9a;left:2083.35px;">-9</span>
<span class="t" style="top:1339.00px;font-size:14.5px;color:#9a9a9a;-webkit-text-stroke:0.22px #9a9a9a;left:2176.55px;">-6</span>
<span class="t" style="top:1339.00px;font-size:14.5px;color:#9a9a9a;-webkit-text-stroke:0.22px #9a9a9a;left:2269.75px;">-3</span>
<span class="t" style="top:1339.00px;font-size:14.5px;color:#9a9a9a;-webkit-text-stroke:0.22px #9a9a9a;left:2365.56px;">0</span>
<span class="t" style="top:1227.00px;font-size:16.5px;color:#d2d2d2;-webkit-text-stroke:0.22px #d2d2d2;left:2420.00px;transform:scaleX(1.0191);">Selection/View</span>
<span class="t" style="top:1265.00px;font-size:16.5px;color:#a7a7a7;-webkit-text-stroke:0.22px #a7a7a7;left:2493.30px;transform:scaleX(0.9610);">Start</span>
<span class="t" style="top:1265.00px;font-size:16.5px;color:#a7a7a7;-webkit-text-stroke:0.22px #a7a7a7;left:2601.20px;transform:scaleX(0.9639);">End</span>
<span class="t" style="top:1265.00px;font-size:16.5px;color:#a7a7a7;-webkit-text-stroke:0.22px #a7a7a7;left:2707.80px;transform:scaleX(1.0196);">Duration</span>
<span class="t" style="top:1293.00px;font-size:16.5px;color:#a7a7a7;-webkit-text-stroke:0.22px #a7a7a7;left:2418.00px;transform:scaleX(0.9810);">Selection</span>
<span class="t" style="top:1325.00px;font-size:16.5px;color:#a7a7a7;-webkit-text-stroke:0.22px #a7a7a7;left:2418.00px;transform:scaleX(1.0065);">View</span>
<span class="t" style="top:1293.00px;font-size:16.5px;color:#2d8ceb;-webkit-text-stroke:0.22px #2d8ceb;left:2496.30px;transform:scaleX(0.9605);">0:00.000</span>
<span class="t" style="top:1293.00px;font-size:16.5px;color:#2d8ceb;-webkit-text-stroke:0.22px #2d8ceb;left:2604.30px;transform:scaleX(0.9713);">41:41.759</span>
<span class="t" style="top:1293.00px;font-size:16.5px;color:#2d8ceb;-webkit-text-stroke:0.22px #2d8ceb;left:2710.40px;transform:scaleX(0.9781);">41:41.759</span>
<span class="t" style="top:1325.00px;font-size:16.5px;color:#2d8ceb;-webkit-text-stroke:0.22px #2d8ceb;left:2496.30px;transform:scaleX(0.9605);">0:00.000</span>
<span class="t" style="top:1325.00px;font-size:16.5px;color:#2d8ceb;-webkit-text-stroke:0.22px #2d8ceb;left:2604.30px;transform:scaleX(0.9713);">41:41.759</span>
<span class="t" style="top:1325.00px;font-size:16.5px;color:#2d8ceb;-webkit-text-stroke:0.22px #2d8ceb;left:2710.40px;transform:scaleX(0.9781);">41:41.759</span>
<span class="t" style="top:1368.00px;font-size:16.5px;color:#a7a7a7;-webkit-text-stroke:0.22px #a7a7a7;left:14.30px;transform:scaleX(0.9862);">Apply Center Channel Extractor completed in 77,79 seconds</span>
<span class="t" style="top:1371.00px;font-size:16.5px;color:#a7a7a7;-webkit-text-stroke:0.22px #a7a7a7;left:2197.40px;transform:scaleX(0.9960);">48000 Hz ● 16-bit ● Stereo</span>
<span class="t" style="top:1371.00px;font-size:16.5px;color:#a7a7a7;-webkit-text-stroke:0.22px #a7a7a7;left:2420.00px;transform:scaleX(0.9648);">458,09 MB</span>
<span class="t" style="top:1371.00px;font-size:16.5px;color:#a7a7a7;-webkit-text-stroke:0.22px #a7a7a7;left:2534.60px;transform:scaleX(0.9727);">41:41.759</span>
<span class="t" style="top:1371.00px;font-size:16.5px;color:#a7a7a7;-webkit-text-stroke:0.22px #a7a7a7;left:2630.00px;transform:scaleX(0.9444);">344,12 GB free</span>
<span class="t" style="top:441.00px;font-size:16.5px;color:#2d8ceb;-webkit-text-stroke:0.22px #2d8ceb;left:1326.50px;transform:scaleX(0.9781);">+0</span>
<span class="t" style="top:441.00px;font-size:16.5px;color:#9a9a9a;-webkit-text-stroke:0.22px #9a9a9a;left:1350.00px;transform:scaleX(0.9313);">dB</span>
</body></html>
